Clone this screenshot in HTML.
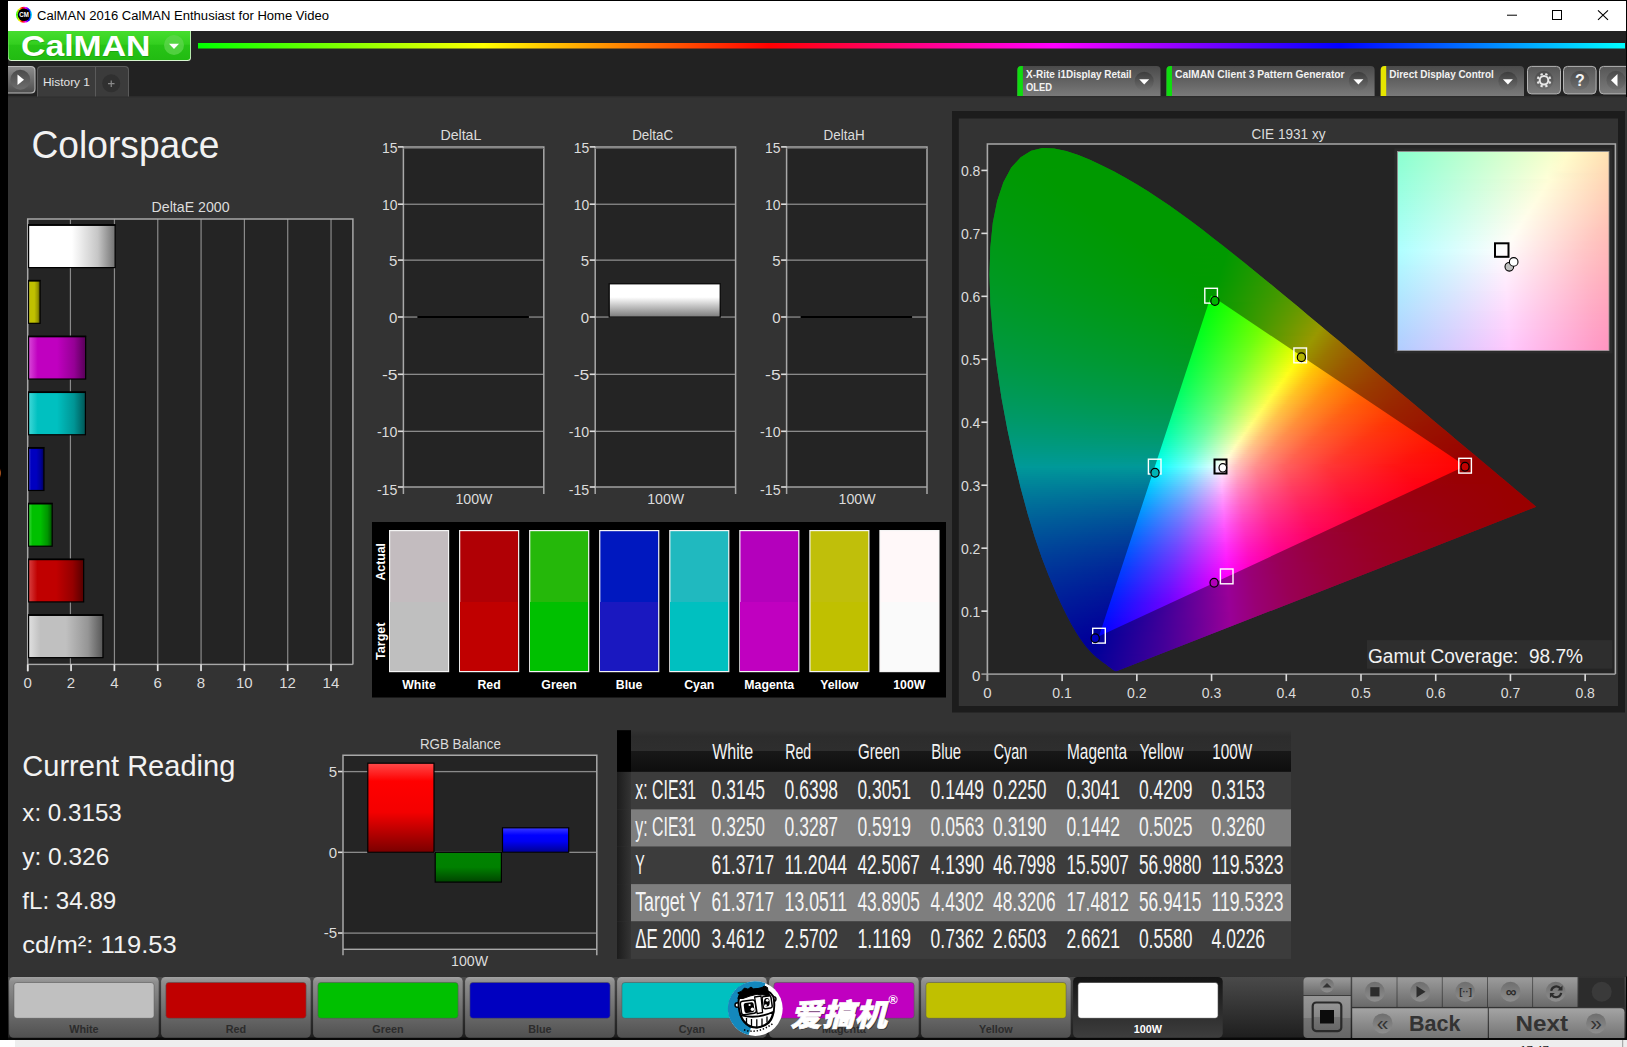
<!DOCTYPE html>
<html><head><meta charset="utf-8"><title>CalMAN 2016 CalMAN Enthusiast for Home Video</title>
<style>html,body{margin:0;padding:0;background:#333;overflow:hidden}svg{display:block}text{font-family:"Liberation Sans","Noto Sans CJK SC",sans-serif;white-space:pre}</style></head>
<body>
<svg width="1627" height="1047" viewBox="0 0 1627 1047">
<defs>
<linearGradient id="rb" x1="0" x2="1" y1="0" y2="0"><stop offset="0" stop-color="#0f0"/><stop offset=".2" stop-color="#ff0"/><stop offset=".4" stop-color="#f00"/><stop offset=".6" stop-color="#f0f"/><stop offset=".8" stop-color="#00f"/><stop offset="1" stop-color="#0ff"/></linearGradient>
<linearGradient id="lg" x1="0" y1="0" x2="0" y2="1"><stop offset="0" stop-color="#46dd2e"/><stop offset="0.45" stop-color="#33cf1f"/><stop offset="0.5" stop-color="#27c416"/><stop offset="1" stop-color="#22bb12"/></linearGradient>
<linearGradient id="gb" x1="0" y1="0" x2="0" y2="1"><stop offset="0" stop-color="#8c8c8c"/><stop offset="1" stop-color="#4e4e4e"/></linearGradient>
<linearGradient id="gb2" x1="0" y1="0" x2="0" y2="1"><stop offset="0" stop-color="#4a4a4a"/><stop offset="1" stop-color="#7a7a7a"/></linearGradient>
<linearGradient id="gb3" x1="0" y1="0" x2="0" y2="1"><stop offset="0" stop-color="#565656"/><stop offset="1" stop-color="#7c7c7c"/></linearGradient>
<linearGradient id="dk" x1="0" y1="0" x2="0" y2="1"><stop offset="0" stop-color="#4a4a4a"/><stop offset="1" stop-color="#6e6e6e"/></linearGradient>
<linearGradient id="dk2" x1="0" y1="0" x2="0" y2="1"><stop offset="0" stop-color="#3c3c3c"/><stop offset="1" stop-color="#707070"/></linearGradient>
<linearGradient id="hb0" x1="0" y1="0" x2="1" y2="0"><stop offset="0" stop-color="#ffffff"/><stop offset="0.16" stop-color="#ffffff"/><stop offset="0.5" stop-color="#ffffff"/><stop offset="0.8" stop-color="#c6c6c6"/><stop offset="1" stop-color="#727272"/></linearGradient>
<linearGradient id="hb1" x1="0" y1="0" x2="1" y2="0"><stop offset="0" stop-color="#e0e040"/><stop offset="0.16" stop-color="#c0c000"/><stop offset="0.5" stop-color="#c0c000"/><stop offset="0.8" stop-color="#959500"/><stop offset="1" stop-color="#565600"/></linearGradient>
<linearGradient id="hb2" x1="0" y1="0" x2="1" y2="0"><stop offset="0" stop-color="#d848d8"/><stop offset="0.16" stop-color="#c000c0"/><stop offset="0.5" stop-color="#c000c0"/><stop offset="0.8" stop-color="#950095"/><stop offset="1" stop-color="#560056"/></linearGradient>
<linearGradient id="hb3" x1="0" y1="0" x2="1" y2="0"><stop offset="0" stop-color="#40d8d8"/><stop offset="0.16" stop-color="#00c0c0"/><stop offset="0.5" stop-color="#00c0c0"/><stop offset="0.8" stop-color="#009595"/><stop offset="1" stop-color="#005656"/></linearGradient>
<linearGradient id="hb4" x1="0" y1="0" x2="1" y2="0"><stop offset="0" stop-color="#4040d8"/><stop offset="0.16" stop-color="#0000c0"/><stop offset="0.5" stop-color="#0000c0"/><stop offset="0.8" stop-color="#000095"/><stop offset="1" stop-color="#000056"/></linearGradient>
<linearGradient id="hb5" x1="0" y1="0" x2="1" y2="0"><stop offset="0" stop-color="#40d840"/><stop offset="0.16" stop-color="#00c000"/><stop offset="0.5" stop-color="#00c000"/><stop offset="0.8" stop-color="#009500"/><stop offset="1" stop-color="#005600"/></linearGradient>
<linearGradient id="hb6" x1="0" y1="0" x2="1" y2="0"><stop offset="0" stop-color="#d84040"/><stop offset="0.16" stop-color="#c00000"/><stop offset="0.5" stop-color="#c00000"/><stop offset="0.8" stop-color="#950000"/><stop offset="1" stop-color="#560000"/></linearGradient>
<linearGradient id="hb7" x1="0" y1="0" x2="1" y2="0"><stop offset="0" stop-color="#e0e0e0"/><stop offset="0.16" stop-color="#c0c0c0"/><stop offset="0.5" stop-color="#c0c0c0"/><stop offset="0.8" stop-color="#959595"/><stop offset="1" stop-color="#565656"/></linearGradient>
<linearGradient id="wv" x1="0" y1="0" x2="0" y2="1"><stop offset="0" stop-color="#fff"/><stop offset="0.4" stop-color="#fff"/><stop offset="1" stop-color="#7a7a7a"/></linearGradient>
<linearGradient id="rr" x1="0" y1="0" x2="0" y2="1"><stop offset="0" stop-color="#ff4a4a"/><stop offset="0.2" stop-color="#ff0000"/><stop offset="0.55" stop-color="#f40000"/><stop offset="1" stop-color="#7a0000"/></linearGradient>
<linearGradient id="rg" x1="0" y1="0" x2="0" y2="1"><stop offset="0" stop-color="#008400"/><stop offset="0.5" stop-color="#008000"/><stop offset="1" stop-color="#004400"/></linearGradient>
<linearGradient id="rbl" x1="0" y1="0" x2="0" y2="1"><stop offset="0" stop-color="#3a3aff"/><stop offset="0.3" stop-color="#0000ff"/><stop offset="0.55" stop-color="#0000f4"/><stop offset="1" stop-color="#000090"/></linearGradient>
<linearGradient id="th" x1="0" y1="0" x2="0" y2="1"><stop offset="0" stop-color="#323232"/><stop offset="0.15" stop-color="#2c2c2c"/><stop offset="0.5" stop-color="#2e2e2e"/><stop offset="0.5" stop-color="#181818"/><stop offset="1" stop-color="#0e0e0e"/></linearGradient>
<linearGradient id="tc" x1="0" y1="0" x2="1" y2="0"><stop offset="0" stop-color="#1c1c1c"/><stop offset="1" stop-color="#343434"/></linearGradient>
<linearGradient id="c0" gradientUnits="userSpaceOnUse" x1="1043" x2="1051"><stop offset="0" stop-color="#0f0"/><stop offset="1" stop-color="#0f0"/></linearGradient>
<linearGradient id="c1" gradientUnits="userSpaceOnUse" x1="1032" x2="1064"><stop offset="0" stop-color="#0f0"/><stop offset="1" stop-color="#0f0"/></linearGradient>
<linearGradient id="c2" gradientUnits="userSpaceOnUse" x1="1027" x2="1071"><stop offset="0" stop-color="#0f0"/><stop offset="1" stop-color="#0f0"/></linearGradient>
<linearGradient id="c3" gradientUnits="userSpaceOnUse" x1="1024" x2="1077"><stop offset="0" stop-color="#0f0"/><stop offset="1" stop-color="#0f0"/></linearGradient>
<linearGradient id="c4" gradientUnits="userSpaceOnUse" x1="1021" x2="1082"><stop offset="0" stop-color="#0f0"/><stop offset="1" stop-color="#0f0"/></linearGradient>
<linearGradient id="c5" gradientUnits="userSpaceOnUse" x1="1018" x2="1087"><stop offset="0" stop-color="#0f0"/><stop offset="1" stop-color="#0f0"/></linearGradient>
<linearGradient id="c6" gradientUnits="userSpaceOnUse" x1="1016" x2="1092"><stop offset="0" stop-color="#0f0"/><stop offset="1" stop-color="#0f0"/></linearGradient>
<linearGradient id="c7" gradientUnits="userSpaceOnUse" x1="1014" x2="1096"><stop offset="0" stop-color="#0f0"/><stop offset="1" stop-color="#0f0"/></linearGradient>
<linearGradient id="c8" gradientUnits="userSpaceOnUse" x1="1013" x2="1100"><stop offset="0" stop-color="#0f0"/><stop offset="1" stop-color="#0f0"/></linearGradient>
<linearGradient id="c9" gradientUnits="userSpaceOnUse" x1="1011" x2="1105"><stop offset="0" stop-color="#00ff01"/><stop offset="1" stop-color="#0f0"/></linearGradient>
<linearGradient id="c10" gradientUnits="userSpaceOnUse" x1="1010" x2="1109"><stop offset="0" stop-color="#00ff02"/><stop offset="1" stop-color="#0f0"/></linearGradient>
<linearGradient id="c11" gradientUnits="userSpaceOnUse" x1="1008" x2="1113"><stop offset="0" stop-color="#00ff03"/><stop offset="1" stop-color="#0f0"/></linearGradient>
<linearGradient id="c12" gradientUnits="userSpaceOnUse" x1="1007" x2="1116"><stop offset="0" stop-color="#00ff04"/><stop offset=".596" stop-color="#0f0"/><stop offset="1" stop-color="#0f0"/></linearGradient>
<linearGradient id="c13" gradientUnits="userSpaceOnUse" x1="1006" x2="1120"><stop offset="0" stop-color="#00ff05"/><stop offset=".465" stop-color="#0f0"/><stop offset="1" stop-color="#0f0"/></linearGradient>
<linearGradient id="c14" gradientUnits="userSpaceOnUse" x1="1005" x2="1124"><stop offset="0" stop-color="#00ff06"/><stop offset=".429" stop-color="#0f0"/><stop offset="1" stop-color="#0f0"/></linearGradient>
<linearGradient id="c15" gradientUnits="userSpaceOnUse" x1="1004" x2="1127"><stop offset="0" stop-color="#00ff07"/><stop offset=".423" stop-color="#0f0"/><stop offset="1" stop-color="#0f0"/></linearGradient>
<linearGradient id="c16" gradientUnits="userSpaceOnUse" x1="1003" x2="1131"><stop offset="0" stop-color="#00ff08"/><stop offset=".422" stop-color="#0f0"/><stop offset="1" stop-color="#0f0"/></linearGradient>
<linearGradient id="c17" gradientUnits="userSpaceOnUse" x1="1002" x2="1134"><stop offset="0" stop-color="#00ff09"/><stop offset=".432" stop-color="#0f0"/><stop offset="1" stop-color="#0f0"/></linearGradient>
<linearGradient id="c18" gradientUnits="userSpaceOnUse" x1="1001" x2="1138"><stop offset="0" stop-color="#00ff0a"/><stop offset=".438" stop-color="#0f0"/><stop offset="1" stop-color="#0f0"/></linearGradient>
<linearGradient id="c19" gradientUnits="userSpaceOnUse" x1="1001" x2="1141"><stop offset="0" stop-color="#00ff0b"/><stop offset=".443" stop-color="#0f0"/><stop offset="1" stop-color="#0f0"/></linearGradient>
<linearGradient id="c20" gradientUnits="userSpaceOnUse" x1="1000" x2="1144"><stop offset="0" stop-color="#00ff0c"/><stop offset=".458" stop-color="#0f0"/><stop offset="1" stop-color="#0f0"/></linearGradient>
<linearGradient id="c21" gradientUnits="userSpaceOnUse" x1="999" x2="1147"><stop offset="0" stop-color="#00ff0d"/><stop offset=".466" stop-color="#0f0"/><stop offset="1" stop-color="#0f0"/></linearGradient>
<linearGradient id="c22" gradientUnits="userSpaceOnUse" x1="998" x2="1150"><stop offset="0" stop-color="#00ff0e"/><stop offset=".480" stop-color="#0f0"/><stop offset="1" stop-color="#0f0"/></linearGradient>
<linearGradient id="c23" gradientUnits="userSpaceOnUse" x1="998" x2="1154"><stop offset="0" stop-color="#00ff0e"/><stop offset=".481" stop-color="#0f0"/><stop offset="1" stop-color="#0f0"/></linearGradient>
<linearGradient id="c24" gradientUnits="userSpaceOnUse" x1="997" x2="1157"><stop offset="0" stop-color="#00ff0f"/><stop offset=".494" stop-color="#0f0"/><stop offset="1" stop-color="#0f0"/></linearGradient>
<linearGradient id="c25" gradientUnits="userSpaceOnUse" x1="997" x2="1160"><stop offset="0" stop-color="#00ff10"/><stop offset=".503" stop-color="#0f0"/><stop offset="1" stop-color="#0f0"/></linearGradient>
<linearGradient id="c26" gradientUnits="userSpaceOnUse" x1="996" x2="1163"><stop offset="0" stop-color="#0f1"/><stop offset=".515" stop-color="#0f0"/><stop offset="1" stop-color="#0f0"/></linearGradient>
<linearGradient id="c27" gradientUnits="userSpaceOnUse" x1="995" x2="1166"><stop offset="0" stop-color="#00ff12"/><stop offset=".520" stop-color="#0f0"/><stop offset="1" stop-color="#0f0"/></linearGradient>
<linearGradient id="c28" gradientUnits="userSpaceOnUse" x1="995" x2="1169"><stop offset="0" stop-color="#00ff13"/><stop offset=".529" stop-color="#0f0"/><stop offset="1" stop-color="#0f0"/></linearGradient>
<linearGradient id="c29" gradientUnits="userSpaceOnUse" x1="994" x2="1171"><stop offset="0" stop-color="#00ff14"/><stop offset=".542" stop-color="#0f0"/><stop offset="1" stop-color="#0f0"/></linearGradient>
<linearGradient id="c30" gradientUnits="userSpaceOnUse" x1="994" x2="1174"><stop offset="0" stop-color="#00ff15"/><stop offset=".550" stop-color="#0f0"/><stop offset="1" stop-color="#0f0"/></linearGradient>
<linearGradient id="c31" gradientUnits="userSpaceOnUse" x1="994" x2="1177"><stop offset="0" stop-color="#00ff16"/><stop offset=".557" stop-color="#0f0"/><stop offset="1" stop-color="#0f0"/></linearGradient>
<linearGradient id="c32" gradientUnits="userSpaceOnUse" x1="993" x2="1180"><stop offset="0" stop-color="#00ff17"/><stop offset=".561" stop-color="#0f0"/><stop offset="1" stop-color="#0f0"/></linearGradient>
<linearGradient id="c33" gradientUnits="userSpaceOnUse" x1="993" x2="1183"><stop offset="0" stop-color="#00ff18"/><stop offset=".568" stop-color="#0f0"/><stop offset="1" stop-color="#0f0"/></linearGradient>
<linearGradient id="c34" gradientUnits="userSpaceOnUse" x1="992" x2="1185"><stop offset="0" stop-color="#00ff19"/><stop offset=".580" stop-color="#0f0"/><stop offset="1" stop-color="#0f0"/></linearGradient>
<linearGradient id="c35" gradientUnits="userSpaceOnUse" x1="992" x2="1188"><stop offset="0" stop-color="#00ff1a"/><stop offset=".587" stop-color="#0f0"/><stop offset="1" stop-color="#0f0"/></linearGradient>
<linearGradient id="c36" gradientUnits="userSpaceOnUse" x1="992" x2="1191"><stop offset="0" stop-color="#00ff1a"/><stop offset=".593" stop-color="#0f0"/><stop offset="1" stop-color="#0f0"/></linearGradient>
<linearGradient id="c37" gradientUnits="userSpaceOnUse" x1="991" x2="1194"><stop offset="0" stop-color="#00ff1b"/><stop offset=".601" stop-color="#0f0"/><stop offset="1" stop-color="#0f0"/></linearGradient>
<linearGradient id="c38" gradientUnits="userSpaceOnUse" x1="991" x2="1196"><stop offset="0" stop-color="#00ff1c"/><stop offset=".610" stop-color="#0f0"/><stop offset="1" stop-color="#0f0"/></linearGradient>
<linearGradient id="c39" gradientUnits="userSpaceOnUse" x1="991" x2="1199"><stop offset="0" stop-color="#00ff1d"/><stop offset=".615" stop-color="#0f0"/><stop offset="1" stop-color="#0f0"/></linearGradient>
<linearGradient id="c40" gradientUnits="userSpaceOnUse" x1="991" x2="1202"><stop offset="0" stop-color="#00ff1e"/><stop offset=".621" stop-color="#0f0"/><stop offset="1" stop-color="#0f0"/></linearGradient>
<linearGradient id="c41" gradientUnits="userSpaceOnUse" x1="990" x2="1204"><stop offset="0" stop-color="#00ff1f"/><stop offset=".626" stop-color="#0f0"/><stop offset="1" stop-color="#0f0"/></linearGradient>
<linearGradient id="c42" gradientUnits="userSpaceOnUse" x1="990" x2="1207"><stop offset="0" stop-color="#00ff20"/><stop offset=".631" stop-color="#0f0"/><stop offset="1" stop-color="#0f0"/></linearGradient>
<linearGradient id="c43" gradientUnits="userSpaceOnUse" x1="990" x2="1209"><stop offset="0" stop-color="#00ff21"/><stop offset=".639" stop-color="#0f0"/><stop offset="1" stop-color="#0f0"/></linearGradient>
<linearGradient id="c44" gradientUnits="userSpaceOnUse" x1="990" x2="1212"><stop offset="0" stop-color="#0f2"/><stop offset=".644" stop-color="#0f0"/><stop offset="1" stop-color="#0f0"/></linearGradient>
<linearGradient id="c45" gradientUnits="userSpaceOnUse" x1="990" x2="1215"><stop offset="0" stop-color="#00ff23"/><stop offset=".649" stop-color="#0f0"/><stop offset="1" stop-color="#0f0"/></linearGradient>
<linearGradient id="c46" gradientUnits="userSpaceOnUse" x1="989" x2="1217"><stop offset="0" stop-color="#00ff24"/><stop offset=".658" stop-color="#0f0"/><stop offset="1" stop-color="#0f0"/></linearGradient>
<linearGradient id="c47" gradientUnits="userSpaceOnUse" x1="989" x2="1220"><stop offset="0" stop-color="#00ff25"/><stop offset=".662" stop-color="#0f0"/><stop offset="1" stop-color="#0f0"/></linearGradient>
<linearGradient id="c48" gradientUnits="userSpaceOnUse" x1="989" x2="1222"><stop offset="0" stop-color="#00ff26"/><stop offset=".670" stop-color="#0f0"/><stop offset="1" stop-color="#0f0"/></linearGradient>
<linearGradient id="c49" gradientUnits="userSpaceOnUse" x1="989" x2="1225"><stop offset="0" stop-color="#00ff27"/><stop offset=".674" stop-color="#0f0"/><stop offset="1" stop-color="#0f0"/></linearGradient>
<linearGradient id="c50" gradientUnits="userSpaceOnUse" x1="989" x2="1227"><stop offset="0" stop-color="#00ff28"/><stop offset=".676" stop-color="#0f0"/><stop offset="1" stop-color="#0f0"/></linearGradient>
<linearGradient id="c51" gradientUnits="userSpaceOnUse" x1="989" x2="1230"><stop offset="0" stop-color="#00ff29"/><stop offset=".680" stop-color="#0f0"/><stop offset=".992" stop-color="#02ff00"/><stop offset="1" stop-color="#05ff00"/></linearGradient>
<linearGradient id="c52" gradientUnits="userSpaceOnUse" x1="989" x2="1232"><stop offset="0" stop-color="#00ff2a"/><stop offset=".687" stop-color="#0f0"/><stop offset=".984" stop-color="#03ff00"/><stop offset="1" stop-color="#08ff00"/></linearGradient>
<linearGradient id="c53" gradientUnits="userSpaceOnUse" x1="988" x2="1235"><stop offset="0" stop-color="#00ff2b"/><stop offset=".692" stop-color="#0f0"/><stop offset=".968" stop-color="#02ff00"/><stop offset="1" stop-color="#0dff00"/></linearGradient>
<linearGradient id="c54" gradientUnits="userSpaceOnUse" x1="988" x2="1237"><stop offset="0" stop-color="#00ff2c"/><stop offset=".699" stop-color="#0f0"/><stop offset=".956" stop-color="#02ff00"/><stop offset="1" stop-color="#1f0"/></linearGradient>
<linearGradient id="c55" gradientUnits="userSpaceOnUse" x1="988" x2="1240"><stop offset="0" stop-color="#00ff2d"/><stop offset=".702" stop-color="#0f0"/><stop offset=".944" stop-color="#03ff00"/><stop offset="1" stop-color="#17ff00"/></linearGradient>
<linearGradient id="c56" gradientUnits="userSpaceOnUse" x1="988" x2="1242"><stop offset="0" stop-color="#00ff2e"/><stop offset=".709" stop-color="#0f0"/><stop offset=".933" stop-color="#02ff00"/><stop offset="1" stop-color="#1bff00"/></linearGradient>
<linearGradient id="c57" gradientUnits="userSpaceOnUse" x1="988" x2="1245"><stop offset="0" stop-color="#00ff2f"/><stop offset=".712" stop-color="#0f0"/><stop offset=".918" stop-color="#02ff00"/><stop offset="1" stop-color="#20ff00"/></linearGradient>
<linearGradient id="c58" gradientUnits="userSpaceOnUse" x1="988" x2="1247"><stop offset="0" stop-color="#00ff30"/><stop offset=".718" stop-color="#0f0"/><stop offset=".911" stop-color="#03ff00"/><stop offset="1" stop-color="#24ff00"/></linearGradient>
<linearGradient id="c59" gradientUnits="userSpaceOnUse" x1="988" x2="1250"><stop offset="0" stop-color="#00ff31"/><stop offset=".721" stop-color="#0f0"/><stop offset=".897" stop-color="#02ff00"/><stop offset="1" stop-color="#2aff00"/></linearGradient>
<linearGradient id="c60" gradientUnits="userSpaceOnUse" x1="988" x2="1252"><stop offset="0" stop-color="#00ff32"/><stop offset=".727" stop-color="#0f0"/><stop offset=".886" stop-color="#02ff00"/><stop offset="1" stop-color="#2eff00"/></linearGradient>
<linearGradient id="c61" gradientUnits="userSpaceOnUse" x1="988" x2="1255"><stop offset="0" stop-color="#0f3"/><stop offset=".727" stop-color="#0f0"/><stop offset=".876" stop-color="#03ff00"/><stop offset="1" stop-color="#34ff00"/></linearGradient>
<linearGradient id="c62" gradientUnits="userSpaceOnUse" x1="988" x2="1257"><stop offset="0" stop-color="#00ff35"/><stop offset=".684" stop-color="#00ff01"/><stop offset=".866" stop-color="#03ff00"/><stop offset="1" stop-color="#39ff00"/></linearGradient>
<linearGradient id="c63" gradientUnits="userSpaceOnUse" x1="988" x2="1260"><stop offset="0" stop-color="#00ff36"/><stop offset=".676" stop-color="#00ff02"/><stop offset=".853" stop-color="#02ff00"/><stop offset="1" stop-color="#3fff00"/></linearGradient>
<linearGradient id="c64" gradientUnits="userSpaceOnUse" x1="988" x2="1262"><stop offset="0" stop-color="#00ff37"/><stop offset=".672" stop-color="#00ff03"/><stop offset=".847" stop-color="#03ff00"/><stop offset="1" stop-color="#4f0"/></linearGradient>
<linearGradient id="c65" gradientUnits="userSpaceOnUse" x1="988" x2="1265"><stop offset="0" stop-color="#00ff38"/><stop offset=".661" stop-color="#00ff04"/><stop offset=".801" stop-color="#0f0"/><stop offset=".838" stop-color="#04ff00"/><stop offset="1" stop-color="#4aff00"/></linearGradient>
<linearGradient id="c66" gradientUnits="userSpaceOnUse" x1="988" x2="1267"><stop offset="0" stop-color="#00ff39"/><stop offset=".656" stop-color="#00ff06"/><stop offset=".778" stop-color="#0f0"/><stop offset=".828" stop-color="#03ff00"/><stop offset="1" stop-color="#4fff00"/></linearGradient>
<linearGradient id="c67" gradientUnits="userSpaceOnUse" x1="988" x2="1270"><stop offset="0" stop-color="#00ff3a"/><stop offset=".752" stop-color="#0f0"/><stop offset=".816" stop-color="#03ff00"/><stop offset="1" stop-color="#56ff00"/></linearGradient>
<linearGradient id="c68" gradientUnits="userSpaceOnUse" x1="988" x2="1272"><stop offset="0" stop-color="#00ff3b"/><stop offset=".641" stop-color="#00ff08"/><stop offset=".764" stop-color="#0f0"/><stop offset=".806" stop-color="#03ff00"/><stop offset="1" stop-color="#5bff00"/></linearGradient>
<linearGradient id="c69" gradientUnits="userSpaceOnUse" x1="988" x2="1274"><stop offset="0" stop-color="#00ff3c"/><stop offset=".633" stop-color="#00ff0a"/><stop offset=".766" stop-color="#0f0"/><stop offset=".801" stop-color="#04ff00"/><stop offset="1" stop-color="#60ff00"/></linearGradient>
<linearGradient id="c70" gradientUnits="userSpaceOnUse" x1="988" x2="1277"><stop offset="0" stop-color="#00ff3e"/><stop offset=".626" stop-color="#00ff0b"/><stop offset=".765" stop-color="#0f0"/><stop offset=".792" stop-color="#05ff00"/><stop offset="1" stop-color="#68ff00"/></linearGradient>
<linearGradient id="c71" gradientUnits="userSpaceOnUse" x1="988" x2="1279"><stop offset="0" stop-color="#00ff3f"/><stop offset=".619" stop-color="#00ff0c"/><stop offset=".770" stop-color="#0f0"/><stop offset=".952" stop-color="#54ff00"/><stop offset="1" stop-color="#6dff00"/></linearGradient>
<linearGradient id="c72" gradientUnits="userSpaceOnUse" x1="988" x2="1282"><stop offset="0" stop-color="#00ff40"/><stop offset=".612" stop-color="#00ff0e"/><stop offset=".769" stop-color="#02ff00"/><stop offset=".990" stop-color="#6fff00"/><stop offset="1" stop-color="#75ff00"/></linearGradient>
<linearGradient id="c73" gradientUnits="userSpaceOnUse" x1="988" x2="1284"><stop offset="0" stop-color="#00ff41"/><stop offset=".608" stop-color="#00ff0f"/><stop offset=".764" stop-color="#03ff00"/><stop offset=".980" stop-color="#6fff00"/><stop offset="1" stop-color="#7bff00"/></linearGradient>
<linearGradient id="c74" gradientUnits="userSpaceOnUse" x1="989" x2="1287"><stop offset="0" stop-color="#00ff42"/><stop offset=".601" stop-color="#00ff10"/><stop offset=".752" stop-color="#03ff00"/><stop offset=".966" stop-color="#6fff00"/><stop offset="1" stop-color="#83ff00"/></linearGradient>
<linearGradient id="c75" gradientUnits="userSpaceOnUse" x1="989" x2="1289"><stop offset="0" stop-color="#00ff43"/><stop offset=".593" stop-color="#00ff12"/><stop offset=".743" stop-color="#02ff01"/><stop offset=".957" stop-color="#6fff00"/><stop offset="1" stop-color="#89ff00"/></linearGradient>
<linearGradient id="c76" gradientUnits="userSpaceOnUse" x1="989" x2="1291"><stop offset="0" stop-color="#00ff45"/><stop offset=".589" stop-color="#00ff13"/><stop offset=".738" stop-color="#03ff02"/><stop offset=".947" stop-color="#70ff00"/><stop offset="1" stop-color="#8fff00"/></linearGradient>
<linearGradient id="c77" gradientUnits="userSpaceOnUse" x1="989" x2="1294"><stop offset="0" stop-color="#00ff46"/><stop offset=".584" stop-color="#00ff14"/><stop offset=".728" stop-color="#03ff03"/><stop offset=".934" stop-color="#70ff00"/><stop offset="1" stop-color="#98ff00"/></linearGradient>
<linearGradient id="c78" gradientUnits="userSpaceOnUse" x1="989" x2="1296"><stop offset="0" stop-color="#00ff47"/><stop offset=".577" stop-color="#00ff16"/><stop offset=".720" stop-color="#02ff05"/><stop offset=".818" stop-color="#3f0"/><stop offset="1" stop-color="#9eff00"/></linearGradient>
<linearGradient id="c79" gradientUnits="userSpaceOnUse" x1="989" x2="1299"><stop offset="0" stop-color="#00ff49"/><stop offset=".571" stop-color="#00ff17"/><stop offset=".713" stop-color="#03ff06"/><stop offset=".803" stop-color="#31ff00"/><stop offset=".990" stop-color="#a1ff00"/><stop offset="1" stop-color="#a7ff00"/></linearGradient>
<linearGradient id="c80" gradientUnits="userSpaceOnUse" x1="989" x2="1301"><stop offset="0" stop-color="#00ff4a"/><stop offset=".564" stop-color="#00ff19"/><stop offset=".705" stop-color="#03ff08"/><stop offset=".801" stop-color="#34ff00"/><stop offset=".984" stop-color="#a3ff00"/><stop offset="1" stop-color="#aeff00"/></linearGradient>
<linearGradient id="c81" gradientUnits="userSpaceOnUse" x1="989" x2="1303"><stop offset="0" stop-color="#00ff4b"/><stop offset=".561" stop-color="#00ff1a"/><stop offset=".697" stop-color="#02ff0a"/><stop offset=".803" stop-color="#3aff00"/><stop offset=".981" stop-color="#a8ff00"/><stop offset="1" stop-color="#b6ff00"/></linearGradient>
<linearGradient id="c82" gradientUnits="userSpaceOnUse" x1="989" x2="1306"><stop offset="0" stop-color="#00ff4c"/><stop offset=".555" stop-color="#00ff1c"/><stop offset=".691" stop-color="#03ff0b"/><stop offset=".801" stop-color="#3fff00"/><stop offset=".978" stop-color="#afff00"/><stop offset="1" stop-color="#bfff00"/></linearGradient>
<linearGradient id="c83" gradientUnits="userSpaceOnUse" x1="990" x2="1308"><stop offset="0" stop-color="#00ff4e"/><stop offset=".550" stop-color="#00ff1d"/><stop offset=".682" stop-color="#03ff0d"/><stop offset=".805" stop-color="#46ff00"/><stop offset=".978" stop-color="#b7ff00"/><stop offset="1" stop-color="#c7ff00"/></linearGradient>
<linearGradient id="c84" gradientUnits="userSpaceOnUse" x1="990" x2="1311"><stop offset="0" stop-color="#00ff4f"/><stop offset=".545" stop-color="#00ff1e"/><stop offset=".673" stop-color="#02ff0f"/><stop offset=".804" stop-color="#4bff00"/><stop offset=".972" stop-color="#bcff00"/><stop offset="1" stop-color="#d1ff00"/></linearGradient>
<linearGradient id="c85" gradientUnits="userSpaceOnUse" x1="990" x2="1313"><stop offset="0" stop-color="#00ff50"/><stop offset=".539" stop-color="#00ff20"/><stop offset=".669" stop-color="#03ff10"/><stop offset=".808" stop-color="#53ff00"/><stop offset=".972" stop-color="#c4ff00"/><stop offset="1" stop-color="#d9ff00"/></linearGradient>
<linearGradient id="c86" gradientUnits="userSpaceOnUse" x1="990" x2="1315"><stop offset="0" stop-color="#00ff52"/><stop offset=".535" stop-color="#0f2"/><stop offset=".662" stop-color="#03ff12"/><stop offset=".812" stop-color="#5aff00"/><stop offset=".972" stop-color="#cbff00"/><stop offset="1" stop-color="#e2ff00"/></linearGradient>
<linearGradient id="c87" gradientUnits="userSpaceOnUse" x1="990" x2="1318"><stop offset="0" stop-color="#00ff53"/><stop offset=".527" stop-color="#00ff23"/><stop offset=".652" stop-color="#02ff14"/><stop offset=".814" stop-color="#62ff00"/><stop offset=".970" stop-color="#d4ff00"/><stop offset="1" stop-color="#edff00"/></linearGradient>
<linearGradient id="c88" gradientUnits="userSpaceOnUse" x1="990" x2="1320"><stop offset="0" stop-color="#0f5"/><stop offset=".524" stop-color="#00ff25"/><stop offset=".648" stop-color="#03ff15"/><stop offset=".815" stop-color="#68ff00"/><stop offset=".967" stop-color="#d9ff00"/><stop offset="1" stop-color="#f6ff00"/></linearGradient>
<linearGradient id="c89" gradientUnits="userSpaceOnUse" x1="990" x2="1323"><stop offset="0" stop-color="#00ff56"/><stop offset=".520" stop-color="#00ff26"/><stop offset=".640" stop-color="#03ff17"/><stop offset=".814" stop-color="#6fff00"/><stop offset=".964" stop-color="#e2ff00"/><stop offset="1" stop-color="#fffd00"/></linearGradient>
<linearGradient id="c90" gradientUnits="userSpaceOnUse" x1="991" x2="1325"><stop offset="0" stop-color="#00ff57"/><stop offset=".515" stop-color="#00ff28"/><stop offset=".632" stop-color="#02ff19"/><stop offset=".805" stop-color="#6fff00"/><stop offset=".952" stop-color="#e0ff00"/><stop offset=".991" stop-color="#fffc00"/><stop offset="1" stop-color="#fff400"/></linearGradient>
<linearGradient id="c91" gradientUnits="userSpaceOnUse" x1="991" x2="1327"><stop offset="0" stop-color="#00ff59"/><stop offset=".512" stop-color="#00ff29"/><stop offset=".628" stop-color="#03ff1b"/><stop offset=".798" stop-color="#6fff01"/><stop offset=".943" stop-color="#e1ff00"/><stop offset=".979" stop-color="#fffd00"/><stop offset="1" stop-color="#ffeb00"/></linearGradient>
<linearGradient id="c92" gradientUnits="userSpaceOnUse" x1="991" x2="1330"><stop offset="0" stop-color="#00ff5a"/><stop offset=".507" stop-color="#00ff2b"/><stop offset=".619" stop-color="#03ff1d"/><stop offset=".788" stop-color="#6fff03"/><stop offset=".932" stop-color="#e2ff00"/><stop offset=".968" stop-color="#fffc00"/><stop offset="1" stop-color="#ffe100"/></linearGradient>
<linearGradient id="c93" gradientUnits="userSpaceOnUse" x1="991" x2="1332"><stop offset="0" stop-color="#00ff5c"/><stop offset=".501" stop-color="#00ff2d"/><stop offset=".613" stop-color="#02ff1f"/><stop offset=".780" stop-color="#6fff05"/><stop offset=".850" stop-color="#a5ff00"/><stop offset=".956" stop-color="#fffd00"/><stop offset="1" stop-color="#ffd900"/></linearGradient>
<linearGradient id="c94" gradientUnits="userSpaceOnUse" x1="991" x2="1334"><stop offset="0" stop-color="#00ff5d"/><stop offset=".499" stop-color="#00ff2f"/><stop offset=".609" stop-color="#03ff20"/><stop offset=".773" stop-color="#6fff07"/><stop offset=".843" stop-color="#a5ff00"/><stop offset=".948" stop-color="#fffc00"/><stop offset="1" stop-color="#ffd200"/></linearGradient>
<linearGradient id="c95" gradientUnits="userSpaceOnUse" x1="992" x2="1337"><stop offset="0" stop-color="#00ff5f"/><stop offset=".493" stop-color="#00ff30"/><stop offset=".600" stop-color="#03ff22"/><stop offset=".762" stop-color="#6fff09"/><stop offset=".838" stop-color="#abff00"/><stop offset=".933" stop-color="#fffe00"/><stop offset="1" stop-color="#ffc900"/></linearGradient>
<linearGradient id="c96" gradientUnits="userSpaceOnUse" x1="992" x2="1339"><stop offset="0" stop-color="#00ff60"/><stop offset=".490" stop-color="#00ff32"/><stop offset=".594" stop-color="#02ff24"/><stop offset=".755" stop-color="#6fff0b"/><stop offset=".839" stop-color="#b2ff00"/><stop offset=".925" stop-color="#fffd00"/><stop offset="1" stop-color="#ffc200"/></linearGradient>
<linearGradient id="c97" gradientUnits="userSpaceOnUse" x1="992" x2="1342"><stop offset="0" stop-color="#00ff62"/><stop offset=".486" stop-color="#00ff34"/><stop offset=".589" stop-color="#03ff26"/><stop offset=".746" stop-color="#6fff0e"/><stop offset=".840" stop-color="#bdff00"/><stop offset=".911" stop-color="#fffe00"/><stop offset=".983" stop-color="#ffc400"/><stop offset="1" stop-color="#ffb900"/></linearGradient>
<linearGradient id="c98" gradientUnits="userSpaceOnUse" x1="992" x2="1344"><stop offset="0" stop-color="#00ff63"/><stop offset=".480" stop-color="#00ff36"/><stop offset=".582" stop-color="#03ff28"/><stop offset=".739" stop-color="#6fff10"/><stop offset=".844" stop-color="#c8ff00"/><stop offset=".903" stop-color="#fffd00"/><stop offset=".974" stop-color="#ffc300"/><stop offset="1" stop-color="#ffb300"/></linearGradient>
<linearGradient id="c99" gradientUnits="userSpaceOnUse" x1="992" x2="1346"><stop offset="0" stop-color="#00ff65"/><stop offset=".477" stop-color="#00ff37"/><stop offset=".576" stop-color="#02ff2a"/><stop offset=".729" stop-color="#6dff13"/><stop offset=".845" stop-color="#d1ff00"/><stop offset=".895" stop-color="#fffc00"/><stop offset=".966" stop-color="#ffc200"/><stop offset="1" stop-color="#ffad00"/></linearGradient>
<linearGradient id="c100" gradientUnits="userSpaceOnUse" x1="993" x2="1349"><stop offset="0" stop-color="#0f6"/><stop offset=".475" stop-color="#00ff39"/><stop offset=".567" stop-color="#01ff2d"/><stop offset=".719" stop-color="#6dff15"/><stop offset=".846" stop-color="#dcff00"/><stop offset=".882" stop-color="#fffd00"/><stop offset=".952" stop-color="#ffc300"/><stop offset="1" stop-color="#ffa600"/></linearGradient>
<linearGradient id="c101" gradientUnits="userSpaceOnUse" x1="993" x2="1351"><stop offset="0" stop-color="#00ff68"/><stop offset=".469" stop-color="#00ff3b"/><stop offset=".564" stop-color="#03ff2e"/><stop offset=".715" stop-color="#70ff17"/><stop offset=".844" stop-color="#e3ff00"/><stop offset=".874" stop-color="#fffc00"/><stop offset=".944" stop-color="#ffc200"/><stop offset="1" stop-color="#ffa000"/></linearGradient>
<linearGradient id="c102" gradientUnits="userSpaceOnUse" x1="993" x2="1354"><stop offset="0" stop-color="#00ff6a"/><stop offset=".465" stop-color="#00ff3d"/><stop offset=".557" stop-color="#02ff31"/><stop offset=".704" stop-color="#6eff19"/><stop offset=".831" stop-color="#e1ff00"/><stop offset=".861" stop-color="#fffe00"/><stop offset=".928" stop-color="#ffc400"/><stop offset="1" stop-color="#f90"/></linearGradient>
<linearGradient id="c103" gradientUnits="userSpaceOnUse" x1="993" x2="1356"><stop offset="0" stop-color="#00ff6b"/><stop offset=".463" stop-color="#00ff3f"/><stop offset=".551" stop-color="#01ff33"/><stop offset=".697" stop-color="#6eff1c"/><stop offset=".821" stop-color="#dfff04"/><stop offset=".854" stop-color="#fffc00"/><stop offset=".920" stop-color="#ffc300"/><stop offset="1" stop-color="#ff9400"/></linearGradient>
<linearGradient id="c104" gradientUnits="userSpaceOnUse" x1="994" x2="1358"><stop offset="0" stop-color="#00ff6d"/><stop offset=".459" stop-color="#00ff41"/><stop offset=".547" stop-color="#03ff35"/><stop offset=".692" stop-color="#70ff1e"/><stop offset=".816" stop-color="#e3ff05"/><stop offset=".843" stop-color="#fffe00"/><stop offset=".909" stop-color="#ffc400"/><stop offset="1" stop-color="#ff8f00"/></linearGradient>
<linearGradient id="c105" gradientUnits="userSpaceOnUse" x1="994" x2="1361"><stop offset="0" stop-color="#00ff6f"/><stop offset=".455" stop-color="#00ff42"/><stop offset=".540" stop-color="#02ff37"/><stop offset=".681" stop-color="#6eff21"/><stop offset=".804" stop-color="#e1ff08"/><stop offset=".834" stop-color="#fffd02"/><stop offset=".899" stop-color="#ffc300"/><stop offset=".989" stop-color="#ff8e00"/><stop offset="1" stop-color="#ff8900"/></linearGradient>
<linearGradient id="c106" gradientUnits="userSpaceOnUse" x1="994" x2="1363"><stop offset="0" stop-color="#00ff70"/><stop offset=".453" stop-color="#0f4"/><stop offset=".534" stop-color="#01ff39"/><stop offset=".675" stop-color="#6eff23"/><stop offset=".794" stop-color="#dfff0c"/><stop offset=".824" stop-color="#fffe05"/><stop offset=".878" stop-color="#fc0"/><stop offset=".962" stop-color="#ff9600"/><stop offset="1" stop-color="#ff8500"/></linearGradient>
<linearGradient id="c107" gradientUnits="userSpaceOnUse" x1="994" x2="1365"><stop offset="0" stop-color="#00ff72"/><stop offset=".450" stop-color="#00ff46"/><stop offset=".531" stop-color="#03ff3b"/><stop offset=".668" stop-color="#6eff26"/><stop offset=".787" stop-color="#e0ff0e"/><stop offset=".817" stop-color="#fffd07"/><stop offset=".871" stop-color="#ffca00"/><stop offset=".954" stop-color="#ff9500"/><stop offset="1" stop-color="#ff8000"/></linearGradient>
<linearGradient id="c108" gradientUnits="userSpaceOnUse" x1="995" x2="1368"><stop offset="0" stop-color="#00ff74"/><stop offset=".445" stop-color="#00ff48"/><stop offset=".523" stop-color="#02ff3e"/><stop offset=".660" stop-color="#6eff28"/><stop offset=".777" stop-color="#e1ff11"/><stop offset=".807" stop-color="#fffc0a"/><stop offset=".866" stop-color="#ffc500"/><stop offset=".952" stop-color="#ff9000"/><stop offset="1" stop-color="#ff7b00"/></linearGradient>
<linearGradient id="c109" gradientUnits="userSpaceOnUse" x1="995" x2="1370"><stop offset="0" stop-color="#00ff75"/><stop offset=".443" stop-color="#00ff4a"/><stop offset=".517" stop-color="#01ff40"/><stop offset=".653" stop-color="#6eff2b"/><stop offset=".768" stop-color="#e0ff14"/><stop offset=".797" stop-color="#fffd0d"/><stop offset=".859" stop-color="#ffc400"/><stop offset=".944" stop-color="#ff8f00"/><stop offset="1" stop-color="#f70"/></linearGradient>
<linearGradient id="c110" gradientUnits="userSpaceOnUse" x1="995" x2="1373"><stop offset="0" stop-color="#0f7"/><stop offset=".439" stop-color="#00ff4d"/><stop offset=".513" stop-color="#03ff42"/><stop offset=".646" stop-color="#6eff2d"/><stop offset=".759" stop-color="#e1ff17"/><stop offset=".788" stop-color="#fffc10"/><stop offset=".849" stop-color="#ffc301"/><stop offset=".934" stop-color="#ff8e00"/><stop offset="1" stop-color="#ff7200"/></linearGradient>
<linearGradient id="c111" gradientUnits="userSpaceOnUse" x1="995" x2="1375"><stop offset="0" stop-color="#00ff79"/><stop offset=".437" stop-color="#00ff4f"/><stop offset=".508" stop-color="#02ff45"/><stop offset=".639" stop-color="#6eff30"/><stop offset=".753" stop-color="#e2ff1a"/><stop offset=".779" stop-color="#fffe13"/><stop offset=".839" stop-color="#ffc304"/><stop offset=".924" stop-color="#ff8e00"/><stop offset="1" stop-color="#ff6e00"/></linearGradient>
<linearGradient id="c112" gradientUnits="userSpaceOnUse" x1="996" x2="1377"><stop offset="0" stop-color="#00ff7b"/><stop offset=".436" stop-color="#00ff50"/><stop offset=".501" stop-color="#01ff48"/><stop offset=".633" stop-color="#6eff33"/><stop offset=".743" stop-color="#e0ff1d"/><stop offset=".772" stop-color="#fffc16"/><stop offset=".832" stop-color="#ffc206"/><stop offset=".892" stop-color="#ff9a00"/><stop offset="1" stop-color="#ff6a00"/></linearGradient>
<linearGradient id="c113" gradientUnits="userSpaceOnUse" x1="996" x2="1380"><stop offset="0" stop-color="#00ff7d"/><stop offset=".432" stop-color="#00ff53"/><stop offset=".497" stop-color="#03ff4a"/><stop offset=".625" stop-color="#6fff35"/><stop offset=".734" stop-color="#e1ff20"/><stop offset=".760" stop-color="#fffe1a"/><stop offset=".818" stop-color="#ffc509"/><stop offset=".883" stop-color="#ff9800"/><stop offset=".990" stop-color="#ff6900"/><stop offset="1" stop-color="#ff6500"/></linearGradient>
<linearGradient id="c114" gradientUnits="userSpaceOnUse" x1="996" x2="1382"><stop offset="0" stop-color="#00ff7f"/><stop offset=".427" stop-color="#0f5"/><stop offset=".492" stop-color="#02ff4c"/><stop offset=".619" stop-color="#6fff38"/><stop offset=".728" stop-color="#e2ff23"/><stop offset=".754" stop-color="#fffd1d"/><stop offset=".811" stop-color="#ffc40b"/><stop offset=".883" stop-color="#ff9300"/><stop offset=".995" stop-color="#ff6300"/><stop offset="1" stop-color="#ff6200"/></linearGradient>
<linearGradient id="c115" gradientUnits="userSpaceOnUse" x1="997" x2="1384"><stop offset="0" stop-color="#00ff81"/><stop offset=".426" stop-color="#00ff57"/><stop offset=".486" stop-color="#01ff4f"/><stop offset=".610" stop-color="#6cff3b"/><stop offset=".716" stop-color="#ddff27"/><stop offset=".747" stop-color="#fffb1f"/><stop offset=".804" stop-color="#ffc20e"/><stop offset=".884" stop-color="#ff8e00"/><stop offset=".997" stop-color="#ff5f00"/><stop offset="1" stop-color="#ff5e00"/></linearGradient>
<linearGradient id="c116" gradientUnits="userSpaceOnUse" x1="997" x2="1387"><stop offset="0" stop-color="#00ff83"/><stop offset=".423" stop-color="#00ff59"/><stop offset=".482" stop-color="#03ff51"/><stop offset=".605" stop-color="#6fff3e"/><stop offset=".710" stop-color="#e1ff29"/><stop offset=".736" stop-color="#fffd23"/><stop offset=".792" stop-color="#ffc311"/><stop offset=".869" stop-color="#ff8f00"/><stop offset=".979" stop-color="#ff6100"/><stop offset="1" stop-color="#ff5a00"/></linearGradient>
<linearGradient id="c117" gradientUnits="userSpaceOnUse" x1="997" x2="1389"><stop offset="0" stop-color="#00ff85"/><stop offset=".421" stop-color="#00ff5c"/><stop offset=".477" stop-color="#02ff54"/><stop offset=".599" stop-color="#6fff41"/><stop offset=".704" stop-color="#e2ff2c"/><stop offset=".730" stop-color="#fffc26"/><stop offset=".786" stop-color="#ffc213"/><stop offset=".862" stop-color="#ff8e02"/><stop offset=".972" stop-color="#ff6000"/><stop offset="1" stop-color="#ff5700"/></linearGradient>
<linearGradient id="c118" gradientUnits="userSpaceOnUse" x1="997" x2="1392"><stop offset="0" stop-color="#00ff87"/><stop offset=".418" stop-color="#00ff5e"/><stop offset=".471" stop-color="#01ff57"/><stop offset=".590" stop-color="#6dff44"/><stop offset=".691" stop-color="#ddff30"/><stop offset=".719" stop-color="#fffe2a"/><stop offset=".775" stop-color="#ffc316"/><stop offset=".851" stop-color="#ff8e04"/><stop offset=".949" stop-color="#ff6300"/><stop offset="1" stop-color="#ff5300"/></linearGradient>
<linearGradient id="c119" gradientUnits="userSpaceOnUse" x1="998" x2="1394"><stop offset="0" stop-color="#0f8"/><stop offset=".417" stop-color="#00ff60"/><stop offset=".467" stop-color="#03ff59"/><stop offset=".586" stop-color="#6fff47"/><stop offset=".687" stop-color="#e1ff33"/><stop offset=".712" stop-color="#fffc2d"/><stop offset=".768" stop-color="#ffc118"/><stop offset=".843" stop-color="#ff8d06"/><stop offset=".912" stop-color="#ff6d00"/><stop offset="1" stop-color="#ff5000"/></linearGradient>
<linearGradient id="c120" gradientUnits="userSpaceOnUse" x1="998" x2="1396"><stop offset="0" stop-color="#00ff8b"/><stop offset=".415" stop-color="#00ff63"/><stop offset=".462" stop-color="#02ff5c"/><stop offset=".580" stop-color="#6fff4a"/><stop offset=".681" stop-color="#e3ff36"/><stop offset=".704" stop-color="#fffe31"/><stop offset=".756" stop-color="#ffc51c"/><stop offset=".829" stop-color="#ff9009"/><stop offset=".902" stop-color="#ff6d00"/><stop offset="1" stop-color="#ff4d00"/></linearGradient>
<linearGradient id="c121" gradientUnits="userSpaceOnUse" x1="998" x2="1399"><stop offset="0" stop-color="#00ff8d"/><stop offset=".411" stop-color="#00ff65"/><stop offset=".456" stop-color="#01ff5f"/><stop offset=".571" stop-color="#6dff4d"/><stop offset=".668" stop-color="#ddff3b"/><stop offset=".696" stop-color="#fffd34"/><stop offset=".748" stop-color="#ffc31f"/><stop offset=".820" stop-color="#ff8f0b"/><stop offset=".900" stop-color="#ff6900"/><stop offset="1" stop-color="#ff4900"/></linearGradient>
<linearGradient id="c122" gradientUnits="userSpaceOnUse" x1="999" x2="1401"><stop offset="0" stop-color="#00ff8f"/><stop offset=".410" stop-color="#00ff68"/><stop offset=".453" stop-color="#03ff62"/><stop offset=".567" stop-color="#70ff50"/><stop offset=".664" stop-color="#e2ff3d"/><stop offset=".687" stop-color="#fffe38"/><stop offset=".739" stop-color="#ffc422"/><stop offset=".811" stop-color="#ff8f0d"/><stop offset=".900" stop-color="#ff6500"/><stop offset="1" stop-color="#ff4600"/></linearGradient>
<linearGradient id="c123" gradientUnits="userSpaceOnUse" x1="999" x2="1403"><stop offset="0" stop-color="#00ff91"/><stop offset=".408" stop-color="#00ff6a"/><stop offset=".448" stop-color="#02ff65"/><stop offset=".559" stop-color="#6dff54"/><stop offset=".656" stop-color="#e0ff41"/><stop offset=".681" stop-color="#fffd3b"/><stop offset=".733" stop-color="#ffc324"/><stop offset=".804" stop-color="#ff8e0f"/><stop offset=".903" stop-color="#ff6000"/><stop offset="1" stop-color="#f40"/></linearGradient>
<linearGradient id="c124" gradientUnits="userSpaceOnUse" x1="999" x2="1406"><stop offset="0" stop-color="#00ff93"/><stop offset=".405" stop-color="#00ff6d"/><stop offset=".445" stop-color="#03ff68"/><stop offset=".555" stop-color="#70ff56"/><stop offset=".649" stop-color="#e1ff45"/><stop offset=".671" stop-color="#ffff40"/><stop offset=".720" stop-color="#ffc629"/><stop offset=".789" stop-color="#ff9113"/><stop offset=".887" stop-color="#ff6200"/><stop offset="1" stop-color="#ff4000"/></linearGradient>
<linearGradient id="c125" gradientUnits="userSpaceOnUse" x1="1000" x2="1408"><stop offset="0" stop-color="#00ff95"/><stop offset=".404" stop-color="#00ff6f"/><stop offset=".439" stop-color="#03ff6b"/><stop offset=".549" stop-color="#70ff5a"/><stop offset=".642" stop-color="#e2ff48"/><stop offset=".664" stop-color="#fffd43"/><stop offset=".713" stop-color="#ffc42b"/><stop offset=".782" stop-color="#ff9015"/><stop offset=".880" stop-color="#ff6101"/><stop offset="1" stop-color="#ff3e00"/></linearGradient>
<linearGradient id="c126" gradientUnits="userSpaceOnUse" x1="1000" x2="1411"><stop offset="0" stop-color="#00ff98"/><stop offset=".401" stop-color="#00ff72"/><stop offset=".433" stop-color="#02ff6e"/><stop offset=".540" stop-color="#6dff5e"/><stop offset=".633" stop-color="#e0ff4c"/><stop offset=".657" stop-color="#fffc46"/><stop offset=".706" stop-color="#ffc32e"/><stop offset=".774" stop-color="#ff8f17"/><stop offset=".871" stop-color="#ff6003"/><stop offset="1" stop-color="#ff3a00"/></linearGradient>
<linearGradient id="c127" gradientUnits="userSpaceOnUse" x1="1000" x2="1413"><stop offset="0" stop-color="#00ff9a"/><stop offset=".402" stop-color="#00ff74"/><stop offset=".431" stop-color="#03ff71"/><stop offset=".538" stop-color="#70ff61"/><stop offset=".627" stop-color="#e1ff50"/><stop offset=".649" stop-color="#fffe4b"/><stop offset=".697" stop-color="#ffc431"/><stop offset=".765" stop-color="#ff8f1a"/><stop offset=".862" stop-color="#ff6005"/><stop offset=".947" stop-color="#ff4500"/><stop offset="1" stop-color="#ff3800"/></linearGradient>
<linearGradient id="c128" gradientUnits="userSpaceOnUse" x1="1001" x2="1415"><stop offset="0" stop-color="#00ff9c"/><stop offset=".401" stop-color="#0f7"/><stop offset=".425" stop-color="#03ff74"/><stop offset=".529" stop-color="#6eff64"/><stop offset=".618" stop-color="#dfff54"/><stop offset=".643" stop-color="#fffc4e"/><stop offset=".691" stop-color="#ffc334"/><stop offset=".758" stop-color="#ff8e1c"/><stop offset=".855" stop-color="#ff5f06"/><stop offset=".932" stop-color="#ff4600"/><stop offset="1" stop-color="#ff3600"/></linearGradient>
<linearGradient id="c129" gradientUnits="userSpaceOnUse" x1="1001" x2="1418"><stop offset="0" stop-color="#00ff9e"/><stop offset=".398" stop-color="#00ff7a"/><stop offset=".420" stop-color="#02ff77"/><stop offset=".523" stop-color="#6eff68"/><stop offset=".612" stop-color="#e0ff58"/><stop offset=".633" stop-color="#fffe53"/><stop offset=".681" stop-color="#ffc338"/><stop offset=".746" stop-color="#ff8f1f"/><stop offset=".839" stop-color="#ff6009"/><stop offset=".923" stop-color="#ff4500"/><stop offset="1" stop-color="#f30"/></linearGradient>
<linearGradient id="c130" gradientUnits="userSpaceOnUse" x1="1001" x2="1420"><stop offset="0" stop-color="#00ffa1"/><stop offset=".399" stop-color="#00ff7d"/><stop offset=".418" stop-color="#03ff7a"/><stop offset=".520" stop-color="#71ff6b"/><stop offset=".606" stop-color="#e1ff5c"/><stop offset=".628" stop-color="#fffd57"/><stop offset=".675" stop-color="#ffc23a"/><stop offset=".740" stop-color="#ff8e21"/><stop offset=".833" stop-color="#ff5f0b"/><stop offset=".924" stop-color="#ff4200"/><stop offset="1" stop-color="#ff3000"/></linearGradient>
<linearGradient id="c131" gradientUnits="userSpaceOnUse" x1="1002" x2="1423"><stop offset="0" stop-color="#00ffa3"/><stop offset=".397" stop-color="#00ff7f"/><stop offset=".411" stop-color="#03ff7e"/><stop offset=".511" stop-color="#6eff6f"/><stop offset=".596" stop-color="#dfff60"/><stop offset=".618" stop-color="#ffff5c"/><stop offset=".663" stop-color="#ffc53f"/><stop offset=".724" stop-color="#ff9126"/><stop offset=".815" stop-color="#ff620e"/><stop offset=".919" stop-color="#ff4000"/><stop offset="1" stop-color="#ff2e00"/></linearGradient>
<linearGradient id="c132" gradientUnits="userSpaceOnUse" x1="1002" x2="1425"><stop offset="0" stop-color="#00ffa6"/><stop offset=".395" stop-color="#00ff83"/><stop offset=".409" stop-color="#04ff81"/><stop offset=".508" stop-color="#71ff73"/><stop offset=".593" stop-color="#e4ff64"/><stop offset=".612" stop-color="#fffd5f"/><stop offset=".657" stop-color="#ffc442"/><stop offset=".719" stop-color="#ff9028"/><stop offset=".809" stop-color="#ff6110"/><stop offset=".922" stop-color="#ff3c00"/><stop offset="1" stop-color="#ff2b00"/></linearGradient>
<linearGradient id="c133" gradientUnits="userSpaceOnUse" x1="1003" x2="1427"><stop offset="0" stop-color="#00ffa8"/><stop offset=".396" stop-color="#00ff85"/><stop offset=".425" stop-color="#19ff82"/><stop offset=".519" stop-color="#86ff74"/><stop offset=".599" stop-color="#f7ff65"/><stop offset=".606" stop-color="#fffc63"/><stop offset=".651" stop-color="#ffc245"/><stop offset=".712" stop-color="#ff8f2a"/><stop offset=".802" stop-color="#ff6011"/><stop offset=".925" stop-color="#ff3900"/><stop offset="1" stop-color="#ff2900"/></linearGradient>
<linearGradient id="c134" gradientUnits="userSpaceOnUse" x1="1003" x2="1430"><stop offset="0" stop-color="#00ffab"/><stop offset=".393" stop-color="#00ff89"/><stop offset=".473" stop-color="#55ff7e"/><stop offset=".557" stop-color="#c3ff70"/><stop offset=".597" stop-color="#fffe68"/><stop offset=".642" stop-color="#ffc349"/><stop offset=".703" stop-color="#ff8f2d"/><stop offset=".789" stop-color="#ff6014"/><stop offset=".920" stop-color="#ff3700"/><stop offset="1" stop-color="#ff2700"/></linearGradient>
<linearGradient id="c135" gradientUnits="userSpaceOnUse" x1="1003" x2="1432"><stop offset="0" stop-color="#00ffad"/><stop offset=".394" stop-color="#02ff8c"/><stop offset=".490" stop-color="#6eff7f"/><stop offset=".571" stop-color="#e1ff71"/><stop offset=".592" stop-color="#fffc6c"/><stop offset=".636" stop-color="#ffc24c"/><stop offset=".697" stop-color="#ff8e2f"/><stop offset=".783" stop-color="#ff5f16"/><stop offset=".914" stop-color="#ff3600"/><stop offset="1" stop-color="#ff2500"/></linearGradient>
<linearGradient id="c136" gradientUnits="userSpaceOnUse" x1="1004" x2="1434"><stop offset="0" stop-color="#00ffb0"/><stop offset=".388" stop-color="#01ff8f"/><stop offset=".484" stop-color="#6eff83"/><stop offset=".563" stop-color="#deff76"/><stop offset=".584" stop-color="#fffe71"/><stop offset=".626" stop-color="#ffc552"/><stop offset=".684" stop-color="#ff9134"/><stop offset=".767" stop-color="#ff621a"/><stop offset=".893" stop-color="#ff3902"/><stop offset="1" stop-color="#ff2300"/></linearGradient>
<linearGradient id="c137" gradientUnits="userSpaceOnUse" x1="1004" x2="1437"><stop offset="0" stop-color="#00ffb2"/><stop offset=".386" stop-color="#03ff93"/><stop offset=".478" stop-color="#6fff87"/><stop offset=".557" stop-color="#e0ff7a"/><stop offset=".577" stop-color="#fffc75"/><stop offset=".619" stop-color="#ffc454"/><stop offset=".677" stop-color="#ff9036"/><stop offset=".760" stop-color="#ff611b"/><stop offset=".885" stop-color="#ff3804"/><stop offset="1" stop-color="#ff2000"/></linearGradient>
<linearGradient id="c138" gradientUnits="userSpaceOnUse" x1="1004" x2="1439"><stop offset="0" stop-color="#00ffb5"/><stop offset=".382" stop-color="#02ff97"/><stop offset=".474" stop-color="#6fff8b"/><stop offset=".552" stop-color="#e1ff7f"/><stop offset=".570" stop-color="#ffff7b"/><stop offset=".611" stop-color="#ffc559"/><stop offset=".669" stop-color="#ff903a"/><stop offset=".752" stop-color="#ff611e"/><stop offset=".876" stop-color="#ff3705"/><stop offset=".966" stop-color="#ff2400"/><stop offset="1" stop-color="#ff1e00"/></linearGradient>
<linearGradient id="c139" gradientUnits="userSpaceOnUse" x1="1005" x2="1442"><stop offset="0" stop-color="#00ffb8"/><stop offset=".375" stop-color="#01ff9b"/><stop offset=".465" stop-color="#6cff90"/><stop offset=".542" stop-color="#deff84"/><stop offset=".563" stop-color="#fffd7f"/><stop offset=".604" stop-color="#ffc35c"/><stop offset=".661" stop-color="#ff8f3c"/><stop offset=".744" stop-color="#ff5f1f"/><stop offset=".867" stop-color="#ff3606"/><stop offset=".954" stop-color="#ff2400"/><stop offset="1" stop-color="#ff1c00"/></linearGradient>
<linearGradient id="c140" gradientUnits="userSpaceOnUse" x1="1005" x2="1444"><stop offset="0" stop-color="#0fb"/><stop offset=".374" stop-color="#03ff9e"/><stop offset=".462" stop-color="#6fff94"/><stop offset=".538" stop-color="#e0ff88"/><stop offset=".556" stop-color="#ffff85"/><stop offset=".597" stop-color="#ffc461"/><stop offset=".651" stop-color="#ff9140"/><stop offset=".731" stop-color="#ff6123"/><stop offset=".850" stop-color="#ff380a"/><stop offset=".945" stop-color="#ff2300"/><stop offset="1" stop-color="#ff1a00"/></linearGradient>
<linearGradient id="c141" gradientUnits="userSpaceOnUse" x1="1006" x2="1446"><stop offset="0" stop-color="#00ffbe"/><stop offset=".368" stop-color="#02ffa2"/><stop offset=".457" stop-color="#6fff98"/><stop offset=".532" stop-color="#e1ff8d"/><stop offset=".550" stop-color="#fffd89"/><stop offset=".591" stop-color="#ffc364"/><stop offset=".648" stop-color="#ff8d42"/><stop offset=".727" stop-color="#ff5f24"/><stop offset=".848" stop-color="#ff360a"/><stop offset=".948" stop-color="#ff2100"/><stop offset="1" stop-color="#ff1800"/></linearGradient>
<linearGradient id="c142" gradientUnits="userSpaceOnUse" x1="1006" x2="1449"><stop offset="0" stop-color="#00ffc0"/><stop offset=".363" stop-color="#01ffa7"/><stop offset=".449" stop-color="#6cff9d"/><stop offset=".524" stop-color="#dfff92"/><stop offset=".544" stop-color="#fffc8d"/><stop offset=".585" stop-color="#ffc167"/><stop offset=".641" stop-color="#ff8c44"/><stop offset=".720" stop-color="#ff5e26"/><stop offset=".840" stop-color="#ff350b"/><stop offset=".946" stop-color="#ff1f00"/><stop offset="1" stop-color="#ff1600"/></linearGradient>
<linearGradient id="c143" gradientUnits="userSpaceOnUse" x1="1006" x2="1451"><stop offset="0" stop-color="#00ffc3"/><stop offset=".362" stop-color="#03ffaa"/><stop offset=".447" stop-color="#6fffa1"/><stop offset=".519" stop-color="#e0ff97"/><stop offset=".537" stop-color="#fffe94"/><stop offset=".575" stop-color="#ffc56e"/><stop offset=".629" stop-color="#ff904a"/><stop offset=".706" stop-color="#ff612b"/><stop offset=".820" stop-color="#ff380f"/><stop offset=".946" stop-color="#ff1d00"/><stop offset="1" stop-color="#ff1500"/></linearGradient>
<linearGradient id="c144" gradientUnits="userSpaceOnUse" x1="1007" x2="1453"><stop offset="0" stop-color="#00ffc6"/><stop offset=".357" stop-color="#02ffaf"/><stop offset=".442" stop-color="#6fffa6"/><stop offset=".513" stop-color="#e1ff9c"/><stop offset=".531" stop-color="#fffc98"/><stop offset=".570" stop-color="#ffc371"/><stop offset=".623" stop-color="#ff8e4d"/><stop offset=".700" stop-color="#ff602d"/><stop offset=".814" stop-color="#ff3710"/><stop offset=".948" stop-color="#ff1b00"/><stop offset="1" stop-color="#ff1300"/></linearGradient>
<linearGradient id="c145" gradientUnits="userSpaceOnUse" x1="1007" x2="1456"><stop offset="0" stop-color="#00ffc9"/><stop offset=".352" stop-color="#01ffb3"/><stop offset=".434" stop-color="#6cffab"/><stop offset=".506" stop-color="#dfffa2"/><stop offset=".523" stop-color="#fffe9f"/><stop offset=".561" stop-color="#ffc476"/><stop offset=".612" stop-color="#ff9052"/><stop offset=".686" stop-color="#ff6131"/><stop offset=".797" stop-color="#ff3813"/><stop offset=".944" stop-color="#ff1900"/><stop offset="1" stop-color="#f10"/></linearGradient>
<linearGradient id="c146" gradientUnits="userSpaceOnUse" x1="1008" x2="1458"><stop offset="0" stop-color="#00ffcd"/><stop offset=".349" stop-color="#03ffb7"/><stop offset=".431" stop-color="#70ffaf"/><stop offset=".500" stop-color="#e0ffa7"/><stop offset=".518" stop-color="#fffda3"/><stop offset=".556" stop-color="#ffc379"/><stop offset=".607" stop-color="#ff8f54"/><stop offset=".680" stop-color="#ff6033"/><stop offset=".791" stop-color="#ff3715"/><stop offset=".947" stop-color="#ff1700"/><stop offset="1" stop-color="#ff0f00"/></linearGradient>
<linearGradient id="c147" gradientUnits="userSpaceOnUse" x1="1008" x2="1461"><stop offset="0" stop-color="#00ffd0"/><stop offset=".344" stop-color="#02ffbc"/><stop offset=".424" stop-color="#6dffb5"/><stop offset=".492" stop-color="#deffad"/><stop offset=".510" stop-color="#ffffab"/><stop offset=".545" stop-color="#ffc681"/><stop offset=".596" stop-color="#ff9159"/><stop offset=".667" stop-color="#ff6237"/><stop offset=".773" stop-color="#ff3919"/><stop offset=".940" stop-color="#ff1600"/><stop offset="1" stop-color="#ff0d00"/></linearGradient>
<linearGradient id="c148" gradientUnits="userSpaceOnUse" x1="1008" x2="1463"><stop offset="0" stop-color="#00ffd3"/><stop offset=".341" stop-color="#01ffc1"/><stop offset=".420" stop-color="#6dffba"/><stop offset=".488" stop-color="#dfffb2"/><stop offset=".505" stop-color="#fffdaf"/><stop offset=".541" stop-color="#ffc584"/><stop offset=".591" stop-color="#ff8f5c"/><stop offset=".662" stop-color="#ff6139"/><stop offset=".769" stop-color="#ff371a"/><stop offset=".941" stop-color="#ff1400"/><stop offset="1" stop-color="#ff0c00"/></linearGradient>
<linearGradient id="c149" gradientUnits="userSpaceOnUse" x1="1009" x2="1465"><stop offset="0" stop-color="#00ffd6"/><stop offset=".338" stop-color="#03ffc5"/><stop offset=".417" stop-color="#70ffbf"/><stop offset=".482" stop-color="#e1ffb8"/><stop offset=".498" stop-color="#feffb6"/><stop offset=".535" stop-color="#ffc388"/><stop offset=".586" stop-color="#ff8e5f"/><stop offset=".658" stop-color="#ff5e3a"/><stop offset=".765" stop-color="#ff361b"/><stop offset=".939" stop-color="#ff1200"/><stop offset="1" stop-color="#ff0a00"/></linearGradient>
<linearGradient id="c150" gradientUnits="userSpaceOnUse" x1="1009" x2="1468"><stop offset="0" stop-color="#00ffda"/><stop offset=".333" stop-color="#02ffca"/><stop offset=".410" stop-color="#6dffc4"/><stop offset=".475" stop-color="#deffbe"/><stop offset=".492" stop-color="#fffebb"/><stop offset=".527" stop-color="#ffc48e"/><stop offset=".575" stop-color="#ff9064"/><stop offset=".645" stop-color="#ff613f"/><stop offset=".749" stop-color="#ff371e"/><stop offset=".917" stop-color="#ff1402"/><stop offset="1" stop-color="#ff0900"/></linearGradient>
<linearGradient id="c151" gradientUnits="userSpaceOnUse" x1="1010" x2="1470"><stop offset="0" stop-color="#0fd"/><stop offset=".328" stop-color="#01ffcf"/><stop offset=".404" stop-color="#6dffca"/><stop offset=".470" stop-color="#dfffc4"/><stop offset=".487" stop-color="#fffcc0"/><stop offset=".522" stop-color="#ffc291"/><stop offset=".570" stop-color="#ff8e67"/><stop offset=".639" stop-color="#ff5f41"/><stop offset=".743" stop-color="#ff361f"/><stop offset=".911" stop-color="#ff1303"/><stop offset="1" stop-color="#ff0700"/></linearGradient>
<linearGradient id="c152" gradientUnits="userSpaceOnUse" x1="1010" x2="1472"><stop offset="0" stop-color="#00ffe0"/><stop offset=".327" stop-color="#03ffd4"/><stop offset=".400" stop-color="#6dffcf"/><stop offset=".463" stop-color="#ddffca"/><stop offset=".481" stop-color="#fffec8"/><stop offset=".515" stop-color="#ffc397"/><stop offset=".563" stop-color="#ff8f6b"/><stop offset=".630" stop-color="#ff6045"/><stop offset=".732" stop-color="#ff3723"/><stop offset=".894" stop-color="#ff1405"/><stop offset=".996" stop-color="#ff0600"/><stop offset="1" stop-color="#ff0600"/></linearGradient>
<linearGradient id="c153" gradientUnits="userSpaceOnUse" x1="1011" x2="1475"><stop offset="0" stop-color="#00ffe4"/><stop offset=".321" stop-color="#02ffd9"/><stop offset=".394" stop-color="#6dffd5"/><stop offset=".457" stop-color="#deffd0"/><stop offset=".474" stop-color="#fffccd"/><stop offset=".509" stop-color="#ffc29b"/><stop offset=".556" stop-color="#ff8d6e"/><stop offset=".623" stop-color="#ff5f47"/><stop offset=".724" stop-color="#ff3624"/><stop offset=".888" stop-color="#ff1206"/><stop offset=".987" stop-color="#ff0500"/><stop offset="1" stop-color="#ff0400"/></linearGradient>
<linearGradient id="c154" gradientUnits="userSpaceOnUse" x1="1011" x2="1477"><stop offset="0" stop-color="#00ffe8"/><stop offset=".318" stop-color="#01ffde"/><stop offset=".391" stop-color="#6dffdb"/><stop offset=".453" stop-color="#e0ffd7"/><stop offset=".468" stop-color="#ffffd6"/><stop offset=".500" stop-color="#ffc6a4"/><stop offset=".545" stop-color="#ff9176"/><stop offset=".609" stop-color="#ff624d"/><stop offset=".706" stop-color="#ff3929"/><stop offset=".861" stop-color="#ff150a"/><stop offset=".972" stop-color="#ff0600"/><stop offset="1" stop-color="#ff0300"/></linearGradient>
<linearGradient id="c155" gradientUnits="userSpaceOnUse" x1="1012" x2="1480"><stop offset="0" stop-color="#00ffeb"/><stop offset=".314" stop-color="#03ffe3"/><stop offset=".385" stop-color="#6effe0"/><stop offset=".444" stop-color="#dfd"/><stop offset=".462" stop-color="#fffddb"/><stop offset=".494" stop-color="#ffc4a8"/><stop offset=".538" stop-color="#ff9079"/><stop offset=".603" stop-color="#ff614f"/><stop offset=".699" stop-color="#ff372b"/><stop offset=".853" stop-color="#ff140b"/><stop offset=".972" stop-color="#ff0400"/><stop offset="1" stop-color="#ff0100"/></linearGradient>
<linearGradient id="c156" gradientUnits="userSpaceOnUse" x1="1012" x2="1482"><stop offset="0" stop-color="#00ffef"/><stop offset=".311" stop-color="#02ffe9"/><stop offset=".381" stop-color="#6effe6"/><stop offset=".440" stop-color="#deffe4"/><stop offset=".455" stop-color="#ffffe3"/><stop offset=".489" stop-color="#ffc2ac"/><stop offset=".534" stop-color="#ff8e7c"/><stop offset=".598" stop-color="#ff5f52"/><stop offset=".694" stop-color="#ff362c"/><stop offset=".847" stop-color="#ff130c"/><stop offset=".972" stop-color="#ff0300"/><stop offset="1" stop-color="#f00"/></linearGradient>
<linearGradient id="c157" gradientUnits="userSpaceOnUse" x1="1012" x2="1484"><stop offset="0" stop-color="#00fff3"/><stop offset=".307" stop-color="#01ffee"/><stop offset=".377" stop-color="#6effed"/><stop offset=".436" stop-color="#e0ffeb"/><stop offset=".451" stop-color="#fffde9"/><stop offset=".483" stop-color="#ffc3b3"/><stop offset=".528" stop-color="#ff8e81"/><stop offset=".591" stop-color="#ff5f55"/><stop offset=".686" stop-color="#ff362e"/><stop offset=".839" stop-color="#ff130e"/><stop offset=".975" stop-color="#ff0100"/><stop offset="1" stop-color="#f00"/></linearGradient>
<linearGradient id="c158" gradientUnits="userSpaceOnUse" x1="1013" x2="1487"><stop offset="0" stop-color="#00fff7"/><stop offset=".304" stop-color="#03fff4"/><stop offset=".371" stop-color="#6efff3"/><stop offset=".428" stop-color="#ddfff2"/><stop offset=".443" stop-color="#fefff2"/><stop offset=".477" stop-color="#ffc1b7"/><stop offset=".521" stop-color="#ff8c84"/><stop offset=".584" stop-color="#ff5e57"/><stop offset=".679" stop-color="#ff3530"/><stop offset=".831" stop-color="#ff120f"/><stop offset=".973" stop-color="#f00"/><stop offset="1" stop-color="#f00"/></linearGradient>
<linearGradient id="c159" gradientUnits="userSpaceOnUse" x1="1013" x2="1489"><stop offset="0" stop-color="#00fffb"/><stop offset=".300" stop-color="#02fffa"/><stop offset=".368" stop-color="#6efff9"/><stop offset=".424" stop-color="#dffff9"/><stop offset=".439" stop-color="#fffef8"/><stop offset=".468" stop-color="#ffc6c1"/><stop offset=".511" stop-color="#ff918d"/><stop offset=".569" stop-color="#ff6260"/><stop offset=".658" stop-color="#ff3937"/><stop offset=".798" stop-color="#ff1614"/><stop offset=".971" stop-color="#f00"/><stop offset="1" stop-color="#f00"/></linearGradient>
<linearGradient id="c160" gradientUnits="userSpaceOnUse" x1="1014" x2="1492"><stop offset="0" stop-color="#0ff"/><stop offset=".295" stop-color="#01feff"/><stop offset=".362" stop-color="#6efeff"/><stop offset=".418" stop-color="#dffeff"/><stop offset=".433" stop-color="#fffcfd"/><stop offset=".462" stop-color="#ffc4c5"/><stop offset=".504" stop-color="#ff8f90"/><stop offset=".563" stop-color="#ff6162"/><stop offset=".651" stop-color="#ff3839"/><stop offset=".793" stop-color="#ff1415"/><stop offset=".962" stop-color="#f00"/><stop offset="1" stop-color="#f00"/></linearGradient>
<linearGradient id="c161" gradientUnits="userSpaceOnUse" x1="1014" x2="1494"><stop offset="0" stop-color="#00fbff"/><stop offset=".294" stop-color="#03f8ff"/><stop offset=".360" stop-color="#6ff7ff"/><stop offset=".417" stop-color="#dff6ff"/><stop offset=".431" stop-color="#fff5fe"/><stop offset=".463" stop-color="#ffbcc3"/><stop offset=".504" stop-color="#ff898f"/><stop offset=".565" stop-color="#ff5c60"/><stop offset=".656" stop-color="#ff3337"/><stop offset=".802" stop-color="#ff1114"/><stop offset=".952" stop-color="#f00"/><stop offset="1" stop-color="#f00"/></linearGradient>
<linearGradient id="c162" gradientUnits="userSpaceOnUse" x1="1015" x2="1496"><stop offset="0" stop-color="#00f7ff"/><stop offset=".289" stop-color="#02f3ff"/><stop offset=".356" stop-color="#6cf1ff"/><stop offset=".414" stop-color="#dfefff"/><stop offset=".428" stop-color="#fef"/><stop offset=".459" stop-color="#ffb6c4"/><stop offset=".501" stop-color="#ff8590"/><stop offset=".561" stop-color="#ff5962"/><stop offset=".653" stop-color="#ff3138"/><stop offset=".798" stop-color="#ff1015"/><stop offset=".940" stop-color="#ff0001"/><stop offset="1" stop-color="#f00"/></linearGradient>
<linearGradient id="c163" gradientUnits="userSpaceOnUse" x1="1015" x2="1499"><stop offset="0" stop-color="#00f3ff"/><stop offset=".285" stop-color="#01edff"/><stop offset=".353" stop-color="#6debff"/><stop offset=".411" stop-color="#dfe8ff"/><stop offset=".426" stop-color="#ffe7ff"/><stop offset=".457" stop-color="#ffb1c5"/><stop offset=".500" stop-color="#ff808f"/><stop offset=".562" stop-color="#ff5460"/><stop offset=".655" stop-color="#ff2d37"/><stop offset=".804" stop-color="#ff0d14"/><stop offset=".928" stop-color="#ff0003"/><stop offset="1" stop-color="#f00"/></linearGradient>
<linearGradient id="c164" gradientUnits="userSpaceOnUse" x1="1016" x2="1501"><stop offset="0" stop-color="#00efff"/><stop offset=".282" stop-color="#03e7ff"/><stop offset=".351" stop-color="#6ee4ff"/><stop offset=".408" stop-color="#dfe1ff"/><stop offset=".423" stop-color="#fee1ff"/><stop offset=".456" stop-color="#ffaac3"/><stop offset=".499" stop-color="#ff7a8e"/><stop offset=".561" stop-color="#ff5060"/><stop offset=".654" stop-color="#ff2b37"/><stop offset=".804" stop-color="#ff0b14"/><stop offset=".918" stop-color="#ff0004"/><stop offset="1" stop-color="#f00"/></linearGradient>
<linearGradient id="c165" gradientUnits="userSpaceOnUse" x1="1016" x2="1503"><stop offset="0" stop-color="#00ebff"/><stop offset=".279" stop-color="#02e2ff"/><stop offset=".349" stop-color="#6fdeff"/><stop offset=".409" stop-color="#e3dbff"/><stop offset=".423" stop-color="#ffd7fc"/><stop offset=".454" stop-color="#ffa5c3"/><stop offset=".497" stop-color="#ff778f"/><stop offset=".559" stop-color="#ff4e61"/><stop offset=".651" stop-color="#ff2938"/><stop offset=".799" stop-color="#ff0a15"/><stop offset=".906" stop-color="#ff0006"/><stop offset="1" stop-color="#f00"/></linearGradient>
<linearGradient id="c166" gradientUnits="userSpaceOnUse" x1="1017" x2="1506"><stop offset="0" stop-color="#00e7ff"/><stop offset=".274" stop-color="#01ddff"/><stop offset=".344" stop-color="#6dd9ff"/><stop offset=".403" stop-color="#ded4ff"/><stop offset=".419" stop-color="#ffd0fc"/><stop offset=".452" stop-color="#ff9ec1"/><stop offset=".497" stop-color="#ff708d"/><stop offset=".560" stop-color="#ff485e"/><stop offset=".656" stop-color="#ff2536"/><stop offset=".812" stop-color="#ff0612"/><stop offset=".906" stop-color="#ff0005"/><stop offset="1" stop-color="#f00"/></linearGradient>
<linearGradient id="c167" gradientUnits="userSpaceOnUse" x1="1017" x2="1508"><stop offset="0" stop-color="#00e3ff"/><stop offset=".273" stop-color="#03d8ff"/><stop offset=".342" stop-color="#6ed3ff"/><stop offset=".401" stop-color="#deceff"/><stop offset=".418" stop-color="#ffcafd"/><stop offset=".450" stop-color="#ff99c2"/><stop offset=".495" stop-color="#ff6d8e"/><stop offset=".558" stop-color="#ff465f"/><stop offset=".654" stop-color="#ff2336"/><stop offset=".809" stop-color="#ff0513"/><stop offset=".906" stop-color="#ff0006"/><stop offset="1" stop-color="#f00"/></linearGradient>
<linearGradient id="c168" gradientUnits="userSpaceOnUse" x1="1018" x2="1511"><stop offset="0" stop-color="#00e0ff"/><stop offset=".268" stop-color="#02d3ff"/><stop offset=".339" stop-color="#6fcdff"/><stop offset=".400" stop-color="#e2c7ff"/><stop offset=".414" stop-color="#ffc4fd"/><stop offset=".446" stop-color="#ff95c3"/><stop offset=".491" stop-color="#ff698f"/><stop offset=".554" stop-color="#ff4360"/><stop offset=".649" stop-color="#ff2137"/><stop offset=".801" stop-color="#ff0414"/><stop offset=".919" stop-color="#ff0004"/><stop offset="1" stop-color="#f00"/></linearGradient>
<linearGradient id="c169" gradientUnits="userSpaceOnUse" x1="1018" x2="1513"><stop offset="0" stop-color="#00dcff"/><stop offset=".265" stop-color="#01ceff"/><stop offset=".335" stop-color="#6cc8ff"/><stop offset=".396" stop-color="#dec2ff"/><stop offset=".412" stop-color="#ffbffe"/><stop offset=".444" stop-color="#ff90c4"/><stop offset=".489" stop-color="#ff6690"/><stop offset=".554" stop-color="#ff4060"/><stop offset=".651" stop-color="#ff1e37"/><stop offset=".806" stop-color="#ff0214"/><stop offset=".986" stop-color="#f00"/><stop offset="1" stop-color="#f00"/></linearGradient>
<linearGradient id="c170" gradientUnits="userSpaceOnUse" x1="1019" x2="1515"><stop offset="0" stop-color="#00d8ff"/><stop offset=".262" stop-color="#02c9ff"/><stop offset=".333" stop-color="#6dc2ff"/><stop offset=".393" stop-color="#debcff"/><stop offset=".409" stop-color="#ffb9fe"/><stop offset=".442" stop-color="#ff8cc5"/><stop offset=".486" stop-color="#ff6391"/><stop offset=".550" stop-color="#ff3d61"/><stop offset=".647" stop-color="#ff1d38"/><stop offset=".802" stop-color="#ff0114"/><stop offset=".988" stop-color="#f00"/><stop offset="1" stop-color="#f00"/></linearGradient>
<linearGradient id="c171" gradientUnits="userSpaceOnUse" x1="1019" x2="1518"><stop offset="0" stop-color="#00d4ff"/><stop offset=".259" stop-color="#01c4ff"/><stop offset=".331" stop-color="#6ebdff"/><stop offset=".393" stop-color="#e2b6ff"/><stop offset=".407" stop-color="#ffb3ff"/><stop offset=".439" stop-color="#ff87c6"/><stop offset=".483" stop-color="#ff5f92"/><stop offset=".547" stop-color="#ff3b62"/><stop offset=".643" stop-color="#ff1b39"/><stop offset=".798" stop-color="#ff0015"/><stop offset=".986" stop-color="#f00"/><stop offset="1" stop-color="#f00"/></linearGradient>
<linearGradient id="c172" gradientUnits="userSpaceOnUse" x1="1020" x2="1520"><stop offset="0" stop-color="#00d1ff"/><stop offset=".254" stop-color="#00bfff"/><stop offset=".326" stop-color="#6cb8ff"/><stop offset=".388" stop-color="#ddb0ff"/><stop offset=".404" stop-color="#ffaeff"/><stop offset=".436" stop-color="#ff83c6"/><stop offset=".480" stop-color="#ff5c92"/><stop offset=".544" stop-color="#ff3963"/><stop offset=".640" stop-color="#ff1a3a"/><stop offset=".792" stop-color="#ff0016"/><stop offset=".988" stop-color="#f00"/><stop offset="1" stop-color="#f00"/></linearGradient>
<linearGradient id="c173" gradientUnits="userSpaceOnUse" x1="1020" x2="1523"><stop offset="0" stop-color="#00cdff"/><stop offset=".252" stop-color="#02bbff"/><stop offset=".326" stop-color="#70b3ff"/><stop offset=".388" stop-color="#e1aaff"/><stop offset=".402" stop-color="#fea8ff"/><stop offset=".435" stop-color="#ff7dc4"/><stop offset=".481" stop-color="#ff5690"/><stop offset=".547" stop-color="#ff3461"/><stop offset=".646" stop-color="#ff1637"/><stop offset=".785" stop-color="#ff0017"/><stop offset=".986" stop-color="#f00"/><stop offset="1" stop-color="#f00"/></linearGradient>
<linearGradient id="c174" gradientUnits="userSpaceOnUse" x1="1021" x2="1525"><stop offset="0" stop-color="#00caff"/><stop offset=".248" stop-color="#01b6ff"/><stop offset=".321" stop-color="#6eaeff"/><stop offset=".385" stop-color="#e1a5ff"/><stop offset=".401" stop-color="#ffa0fc"/><stop offset=".435" stop-color="#ff77c2"/><stop offset=".480" stop-color="#ff528f"/><stop offset=".546" stop-color="#ff3161"/><stop offset=".645" stop-color="#ff1437"/><stop offset=".776" stop-color="#ff0019"/><stop offset=".984" stop-color="#f00"/><stop offset="1" stop-color="#f00"/></linearGradient>
<linearGradient id="c175" gradientUnits="userSpaceOnUse" x1="1021" x2="1527"><stop offset="0" stop-color="#00c6ff"/><stop offset=".247" stop-color="#03b2ff"/><stop offset=".320" stop-color="#6fa9ff"/><stop offset=".383" stop-color="#e19fff"/><stop offset=".399" stop-color="#ff9bfc"/><stop offset=".433" stop-color="#ff73c3"/><stop offset=".480" stop-color="#ff4e8e"/><stop offset=".547" stop-color="#ff2d5f"/><stop offset=".648" stop-color="#ff1136"/><stop offset=".767" stop-color="#ff001b"/><stop offset=".982" stop-color="#f00"/><stop offset="1" stop-color="#f00"/></linearGradient>
<linearGradient id="c176" gradientUnits="userSpaceOnUse" x1="1022" x2="1530"><stop offset="0" stop-color="#00c2ff"/><stop offset=".242" stop-color="#02aeff"/><stop offset=".317" stop-color="#6fa4ff"/><stop offset=".380" stop-color="#e19aff"/><stop offset=".396" stop-color="#ff96fd"/><stop offset=".429" stop-color="#ff6fc4"/><stop offset=".476" stop-color="#ff4b8f"/><stop offset=".543" stop-color="#ff2b60"/><stop offset=".644" stop-color="#ff0f37"/><stop offset=".754" stop-color="#ff001d"/><stop offset=".976" stop-color="#f00"/><stop offset="1" stop-color="#f00"/></linearGradient>
<linearGradient id="c177" gradientUnits="userSpaceOnUse" x1="1022" x2="1532"><stop offset="0" stop-color="#00bfff"/><stop offset=".239" stop-color="#01a9ff"/><stop offset=".314" stop-color="#6da0ff"/><stop offset=".378" stop-color="#e195ff"/><stop offset=".394" stop-color="#ff91fd"/><stop offset=".427" stop-color="#ff6bc5"/><stop offset=".475" stop-color="#ff4890"/><stop offset=".541" stop-color="#ff2961"/><stop offset=".641" stop-color="#ff0e38"/><stop offset=".743" stop-color="#ff001f"/><stop offset=".973" stop-color="#f00"/><stop offset="1" stop-color="#f00"/></linearGradient>
<linearGradient id="c178" gradientUnits="userSpaceOnUse" x1="1023" x2="1534"><stop offset="0" stop-color="#00bcff"/><stop offset=".237" stop-color="#03a5ff"/><stop offset=".311" stop-color="#6e9bff"/><stop offset=".376" stop-color="#e190ff"/><stop offset=".391" stop-color="#ff8cfe"/><stop offset=".427" stop-color="#ff66c3"/><stop offset=".474" stop-color="#ff448f"/><stop offset=".542" stop-color="#ff2660"/><stop offset=".644" stop-color="#ff0b37"/><stop offset=".734" stop-color="#ff0021"/><stop offset=".963" stop-color="#ff0001"/><stop offset="1" stop-color="#f00"/></linearGradient>
<linearGradient id="c179" gradientUnits="userSpaceOnUse" x1="1023" x2="1537"><stop offset="0" stop-color="#00b8ff"/><stop offset=".233" stop-color="#02a1ff"/><stop offset=".309" stop-color="#6f96ff"/><stop offset=".374" stop-color="#e18bff"/><stop offset=".389" stop-color="#ff87fe"/><stop offset=".424" stop-color="#ff62c3"/><stop offset=".473" stop-color="#ff408e"/><stop offset=".541" stop-color="#ff2360"/><stop offset=".644" stop-color="#ff0937"/><stop offset=".724" stop-color="#ff0023"/><stop offset=".946" stop-color="#ff0003"/><stop offset="1" stop-color="#f00"/></linearGradient>
<linearGradient id="c180" gradientUnits="userSpaceOnUse" x1="1024" x2="1538"><stop offset="0" stop-color="#00b5ff"/><stop offset=".230" stop-color="#019dff"/><stop offset=".305" stop-color="#6d92ff"/><stop offset=".372" stop-color="#e086ff"/><stop offset=".387" stop-color="#ff82ff"/><stop offset=".422" stop-color="#ff5ec4"/><stop offset=".471" stop-color="#ff3e8f"/><stop offset=".539" stop-color="#ff2161"/><stop offset=".642" stop-color="#ff0838"/><stop offset=".716" stop-color="#ff0025"/><stop offset=".934" stop-color="#ff0004"/><stop offset="1" stop-color="#f00"/></linearGradient>
<linearGradient id="c181" gradientUnits="userSpaceOnUse" x1="1025" x2="1535"><stop offset="0" stop-color="#00b1ff"/><stop offset=".229" stop-color="#0399ff"/><stop offset=".308" stop-color="#718dff"/><stop offset=".375" stop-color="#e481ff"/><stop offset=".388" stop-color="#ff7eff"/><stop offset=".424" stop-color="#ff5bc5"/><stop offset=".473" stop-color="#ff3b90"/><stop offset=".543" stop-color="#ff1e61"/><stop offset=".649" stop-color="#ff0537"/><stop offset=".724" stop-color="#ff0025"/><stop offset=".945" stop-color="#ff0004"/><stop offset="1" stop-color="#f00"/></linearGradient>
<linearGradient id="c182" gradientUnits="userSpaceOnUse" x1="1025" x2="1530"><stop offset="0" stop-color="#00aeff"/><stop offset=".230" stop-color="#0296ff"/><stop offset=".309" stop-color="#6e89ff"/><stop offset=".376" stop-color="#e07cff"/><stop offset=".394" stop-color="#ff77fc"/><stop offset=".430" stop-color="#ff56c3"/><stop offset=".479" stop-color="#ff378f"/><stop offset=".550" stop-color="#ff1c60"/><stop offset=".657" stop-color="#ff0437"/><stop offset=".786" stop-color="#ff001b"/><stop offset="1" stop-color="#f00"/></linearGradient>
<linearGradient id="c183" gradientUnits="userSpaceOnUse" x1="1026" x2="1524"><stop offset="0" stop-color="#00abff"/><stop offset=".229" stop-color="#0192ff"/><stop offset=".309" stop-color="#6c85ff"/><stop offset=".380" stop-color="#e078ff"/><stop offset=".398" stop-color="#ff73fc"/><stop offset=".436" stop-color="#ff51c1"/><stop offset=".488" stop-color="#ff338d"/><stop offset=".562" stop-color="#ff185e"/><stop offset=".675" stop-color="#ff0135"/><stop offset=".855" stop-color="#ff0012"/><stop offset="1" stop-color="#ff0002"/></linearGradient>
<linearGradient id="c184" gradientUnits="userSpaceOnUse" x1="1026" x2="1519"><stop offset="0" stop-color="#00a8ff"/><stop offset=".231" stop-color="#038eff"/><stop offset=".314" stop-color="#7081ff"/><stop offset=".385" stop-color="#e373ff"/><stop offset=".402" stop-color="#ff6efd"/><stop offset=".440" stop-color="#ff4dc2"/><stop offset=".493" stop-color="#ff308e"/><stop offset=".568" stop-color="#ff165f"/><stop offset=".682" stop-color="#ff0036"/><stop offset=".864" stop-color="#ff0013"/><stop offset="1" stop-color="#ff0004"/></linearGradient>
<linearGradient id="c185" gradientUnits="userSpaceOnUse" x1="1027" x2="1514"><stop offset="0" stop-color="#00a4ff"/><stop offset=".230" stop-color="#028bff"/><stop offset=".314" stop-color="#6e7dff"/><stop offset=".386" stop-color="#e06fff"/><stop offset=".405" stop-color="#ff6afd"/><stop offset=".444" stop-color="#ff4ac3"/><stop offset=".497" stop-color="#ff2e8e"/><stop offset=".573" stop-color="#ff1460"/><stop offset=".688" stop-color="#ff0037"/><stop offset=".873" stop-color="#ff0013"/><stop offset="1" stop-color="#ff0005"/></linearGradient>
<linearGradient id="c186" gradientUnits="userSpaceOnUse" x1="1027" x2="1509"><stop offset="0" stop-color="#00a1ff"/><stop offset=".230" stop-color="#0187ff"/><stop offset=".317" stop-color="#6f79ff"/><stop offset=".390" stop-color="#e06aff"/><stop offset=".409" stop-color="#ff66fd"/><stop offset=".448" stop-color="#ff47c3"/><stop offset=".502" stop-color="#ff2b8f"/><stop offset=".579" stop-color="#ff1361"/><stop offset=".689" stop-color="#ff0039"/><stop offset=".871" stop-color="#ff0016"/><stop offset="1" stop-color="#ff0007"/></linearGradient>
<linearGradient id="c187" gradientUnits="userSpaceOnUse" x1="1028" x2="1504"><stop offset="0" stop-color="#009eff"/><stop offset=".231" stop-color="#0283ff"/><stop offset=".319" stop-color="#7075ff"/><stop offset=".395" stop-color="#e366ff"/><stop offset=".412" stop-color="#ff61fe"/><stop offset=".452" stop-color="#ff44c4"/><stop offset=".506" stop-color="#ff2990"/><stop offset=".586" stop-color="#ff1061"/><stop offset=".689" stop-color="#ff003c"/><stop offset=".870" stop-color="#ff0018"/><stop offset="1" stop-color="#ff0008"/></linearGradient>
<linearGradient id="c188" gradientUnits="userSpaceOnUse" x1="1029" x2="1499"><stop offset="0" stop-color="#009bff"/><stop offset=".230" stop-color="#0280ff"/><stop offset=".319" stop-color="#6d71ff"/><stop offset=".396" stop-color="#df62ff"/><stop offset=".415" stop-color="#ff5dfe"/><stop offset=".455" stop-color="#ff40c5"/><stop offset=".511" stop-color="#ff2691"/><stop offset=".591" stop-color="#ff0e61"/><stop offset=".687" stop-color="#ff003f"/><stop offset=".864" stop-color="#ff001a"/><stop offset="1" stop-color="#ff000a"/></linearGradient>
<linearGradient id="c189" gradientUnits="userSpaceOnUse" x1="1029" x2="1494"><stop offset="0" stop-color="#0098ff"/><stop offset=".230" stop-color="#017dff"/><stop offset=".323" stop-color="#6e6eff"/><stop offset=".400" stop-color="#df5eff"/><stop offset=".419" stop-color="#ff59ff"/><stop offset=".460" stop-color="#ff3dc6"/><stop offset=".518" stop-color="#ff2390"/><stop offset=".600" stop-color="#ff0c61"/><stop offset=".686" stop-color="#ff0042"/><stop offset=".860" stop-color="#ff001d"/><stop offset="1" stop-color="#ff000b"/></linearGradient>
<linearGradient id="c190" gradientUnits="userSpaceOnUse" x1="1030" x2="1489"><stop offset="0" stop-color="#0095ff"/><stop offset=".231" stop-color="#0279ff"/><stop offset=".325" stop-color="#6f6aff"/><stop offset=".405" stop-color="#e359ff"/><stop offset=".423" stop-color="#f5f"/><stop offset=".466" stop-color="#ff39c4"/><stop offset=".525" stop-color="#ff208f"/><stop offset=".610" stop-color="#ff0a60"/><stop offset=".686" stop-color="#ff0045"/><stop offset=".858" stop-color="#ff001f"/><stop offset="1" stop-color="#ff000d"/></linearGradient>
<linearGradient id="c191" gradientUnits="userSpaceOnUse" x1="1030" x2="1484"><stop offset="0" stop-color="#0092ff"/><stop offset=".231" stop-color="#0276ff"/><stop offset=".326" stop-color="#6d66ff"/><stop offset=".407" stop-color="#df56ff"/><stop offset=".430" stop-color="#ff50fc"/><stop offset=".474" stop-color="#ff35c2"/><stop offset=".535" stop-color="#ff1c8d"/><stop offset=".623" stop-color="#ff065e"/><stop offset=".692" stop-color="#ff0046"/><stop offset=".863" stop-color="#ff0021"/><stop offset="1" stop-color="#ff000f"/></linearGradient>
<linearGradient id="c192" gradientUnits="userSpaceOnUse" x1="1031" x2="1478"><stop offset="0" stop-color="#008fff"/><stop offset=".233" stop-color="#0373ff"/><stop offset=".331" stop-color="#7162ff"/><stop offset=".414" stop-color="#e251ff"/><stop offset=".434" stop-color="#ff4cfc"/><stop offset=".479" stop-color="#ff32c3"/><stop offset=".541" stop-color="#ff1a8e"/><stop offset=".631" stop-color="#ff055f"/><stop offset=".707" stop-color="#ff0045"/><stop offset=".886" stop-color="#ff0020"/><stop offset="1" stop-color="#f01"/></linearGradient>
<linearGradient id="c193" gradientUnits="userSpaceOnUse" x1="1032" x2="1473"><stop offset="0" stop-color="#008cff"/><stop offset=".231" stop-color="#0270ff"/><stop offset=".331" stop-color="#6f5fff"/><stop offset=".417" stop-color="#e24eff"/><stop offset=".438" stop-color="#ff48fd"/><stop offset=".483" stop-color="#ff2fc3"/><stop offset=".546" stop-color="#ff188f"/><stop offset=".637" stop-color="#ff0360"/><stop offset=".773" stop-color="#ff0037"/><stop offset=".993" stop-color="#ff0013"/><stop offset="1" stop-color="#ff0013"/></linearGradient>
<linearGradient id="c194" gradientUnits="userSpaceOnUse" x1="1032" x2="1468"><stop offset="0" stop-color="#0089ff"/><stop offset=".232" stop-color="#016dff"/><stop offset=".335" stop-color="#6f5cff"/><stop offset=".422" stop-color="#e24aff"/><stop offset=".443" stop-color="#ff44fd"/><stop offset=".489" stop-color="#ff2cc4"/><stop offset=".553" stop-color="#ff168f"/><stop offset=".644" stop-color="#ff0161"/><stop offset=".782" stop-color="#ff0037"/><stop offset="1" stop-color="#ff0014"/></linearGradient>
<linearGradient id="c195" gradientUnits="userSpaceOnUse" x1="1033" x2="1463"><stop offset="0" stop-color="#0086ff"/><stop offset=".233" stop-color="#0369ff"/><stop offset=".337" stop-color="#7058ff"/><stop offset=".426" stop-color="#e246ff"/><stop offset=".447" stop-color="#ff41fe"/><stop offset=".495" stop-color="#ff28c2"/><stop offset=".563" stop-color="#ff128d"/><stop offset=".658" stop-color="#ff005f"/><stop offset=".802" stop-color="#ff0036"/><stop offset="1" stop-color="#ff0016"/></linearGradient>
<linearGradient id="c196" gradientUnits="userSpaceOnUse" x1="1033" x2="1458"><stop offset="0" stop-color="#0083ff"/><stop offset=".233" stop-color="#0267ff"/><stop offset=".339" stop-color="#6e55ff"/><stop offset=".431" stop-color="#e242ff"/><stop offset=".452" stop-color="#ff3dfe"/><stop offset=".501" stop-color="#ff25c3"/><stop offset=".569" stop-color="#ff108e"/><stop offset=".666" stop-color="#ff005f"/><stop offset=".812" stop-color="#ff0036"/><stop offset="1" stop-color="#ff0018"/></linearGradient>
<linearGradient id="c197" gradientUnits="userSpaceOnUse" x1="1034" x2="1453"><stop offset="0" stop-color="#0080ff"/><stop offset=".232" stop-color="#0164ff"/><stop offset=".341" stop-color="#6f52ff"/><stop offset=".434" stop-color="#e23fff"/><stop offset=".456" stop-color="#ff3afe"/><stop offset=".506" stop-color="#ff23c4"/><stop offset=".575" stop-color="#ff0e8f"/><stop offset=".663" stop-color="#ff0064"/><stop offset=".807" stop-color="#ff003a"/><stop offset="1" stop-color="#ff001a"/></linearGradient>
<linearGradient id="c198" gradientUnits="userSpaceOnUse" x1="1035" x2="1448"><stop offset="0" stop-color="#007dff"/><stop offset=".232" stop-color="#0361ff"/><stop offset=".344" stop-color="#704eff"/><stop offset=".438" stop-color="#e13bff"/><stop offset=".462" stop-color="#ff35fb"/><stop offset=".513" stop-color="#ff1fc2"/><stop offset=".584" stop-color="#ff0b8e"/><stop offset=".661" stop-color="#ff0068"/><stop offset=".801" stop-color="#ff003e"/><stop offset="1" stop-color="#ff001c"/></linearGradient>
<linearGradient id="c199" gradientUnits="userSpaceOnUse" x1="1035" x2="1443"><stop offset="0" stop-color="#007aff"/><stop offset=".233" stop-color="#025eff"/><stop offset=".346" stop-color="#6e4bff"/><stop offset=".444" stop-color="#e138ff"/><stop offset=".468" stop-color="#ff31fc"/><stop offset=".520" stop-color="#ff1cc3"/><stop offset=".591" stop-color="#ff098f"/><stop offset=".662" stop-color="#ff006c"/><stop offset=".799" stop-color="#ff0041"/><stop offset="1" stop-color="#ff001f"/></linearGradient>
<linearGradient id="c200" gradientUnits="userSpaceOnUse" x1="1036" x2="1438"><stop offset="0" stop-color="#07f"/><stop offset=".231" stop-color="#015bff"/><stop offset=".348" stop-color="#6e48ff"/><stop offset=".448" stop-color="#e134ff"/><stop offset=".473" stop-color="#ff2efc"/><stop offset=".527" stop-color="#ff19c1"/><stop offset=".602" stop-color="#ff068d"/><stop offset=".667" stop-color="#ff006e"/><stop offset=".806" stop-color="#ff0043"/><stop offset="1" stop-color="#ff0021"/></linearGradient>
<linearGradient id="c201" gradientUnits="userSpaceOnUse" x1="1037" x2="1433"><stop offset="0" stop-color="#0074ff"/><stop offset=".232" stop-color="#0358ff"/><stop offset=".351" stop-color="#6f45ff"/><stop offset=".452" stop-color="#e131ff"/><stop offset=".477" stop-color="#ff2bfd"/><stop offset=".533" stop-color="#ff16c2"/><stop offset=".609" stop-color="#ff048e"/><stop offset=".694" stop-color="#ff0067"/><stop offset=".846" stop-color="#ff003d"/><stop offset="1" stop-color="#ff0023"/></linearGradient>
<linearGradient id="c202" gradientUnits="userSpaceOnUse" x1="1038" x2="1427"><stop offset="0" stop-color="#0072ff"/><stop offset=".231" stop-color="#0256ff"/><stop offset=".355" stop-color="#7042ff"/><stop offset=".458" stop-color="#e12dff"/><stop offset=".483" stop-color="#ff27fd"/><stop offset=".540" stop-color="#ff14c2"/><stop offset=".617" stop-color="#ff028e"/><stop offset=".728" stop-color="#ff0060"/><stop offset=".895" stop-color="#ff0036"/><stop offset="1" stop-color="#ff0026"/></linearGradient>
<linearGradient id="c203" gradientUnits="userSpaceOnUse" x1="1038" x2="1422"><stop offset="0" stop-color="#006fff"/><stop offset=".232" stop-color="#0153ff"/><stop offset=".357" stop-color="#6e3fff"/><stop offset=".464" stop-color="#e12aff"/><stop offset=".490" stop-color="#ff24fd"/><stop offset=".547" stop-color="#ff11c3"/><stop offset=".625" stop-color="#ff008f"/><stop offset=".737" stop-color="#ff0060"/><stop offset=".906" stop-color="#ff0037"/><stop offset="1" stop-color="#ff0028"/></linearGradient>
<linearGradient id="c204" gradientUnits="userSpaceOnUse" x1="1039" x2="1417"><stop offset="0" stop-color="#006cff"/><stop offset=".233" stop-color="#0350ff"/><stop offset=".360" stop-color="#6f3cff"/><stop offset=".468" stop-color="#e127ff"/><stop offset=".495" stop-color="#ff21fe"/><stop offset=".553" stop-color="#ff0fc4"/><stop offset=".632" stop-color="#ff0090"/><stop offset=".746" stop-color="#ff0061"/><stop offset=".918" stop-color="#ff0038"/><stop offset="1" stop-color="#ff002b"/></linearGradient>
<linearGradient id="c205" gradientUnits="userSpaceOnUse" x1="1040" x2="1412"><stop offset="0" stop-color="#0069ff"/><stop offset=".231" stop-color="#024eff"/><stop offset=".363" stop-color="#6f39ff"/><stop offset=".473" stop-color="#e124ff"/><stop offset=".500" stop-color="#ff1efe"/><stop offset=".559" stop-color="#ff0cc4"/><stop offset=".634" stop-color="#ff0093"/><stop offset=".750" stop-color="#ff0063"/><stop offset=".922" stop-color="#ff003a"/><stop offset="1" stop-color="#ff002d"/></linearGradient>
<linearGradient id="c206" gradientUnits="userSpaceOnUse" x1="1040" x2="1407"><stop offset="0" stop-color="#0067ff"/><stop offset=".232" stop-color="#014bff"/><stop offset=".365" stop-color="#6e37ff"/><stop offset=".480" stop-color="#e121ff"/><stop offset=".507" stop-color="#ff1bfe"/><stop offset=".567" stop-color="#ff0ac5"/><stop offset=".635" stop-color="#ff0098"/><stop offset=".747" stop-color="#ff0069"/><stop offset=".913" stop-color="#ff003e"/><stop offset="1" stop-color="#ff0030"/></linearGradient>
<linearGradient id="c207" gradientUnits="userSpaceOnUse" x1="1041" x2="1402"><stop offset="0" stop-color="#0064ff"/><stop offset=".233" stop-color="#0249ff"/><stop offset=".368" stop-color="#6e34ff"/><stop offset=".485" stop-color="#e01eff"/><stop offset=".515" stop-color="#ff17fc"/><stop offset=".579" stop-color="#ff06c1"/><stop offset=".637" stop-color="#ff009c"/><stop offset=".751" stop-color="#ff006b"/><stop offset=".917" stop-color="#ff0041"/><stop offset="1" stop-color="#ff0032"/></linearGradient>
<linearGradient id="c208" gradientUnits="userSpaceOnUse" x1="1042" x2="1397"><stop offset="0" stop-color="#0061ff"/><stop offset=".231" stop-color="#0246ff"/><stop offset=".372" stop-color="#6f31ff"/><stop offset=".490" stop-color="#e01bff"/><stop offset=".521" stop-color="#ff14fc"/><stop offset=".586" stop-color="#ff04c2"/><stop offset=".676" stop-color="#ff008d"/><stop offset=".806" stop-color="#ff005e"/><stop offset="1" stop-color="#ff0035"/></linearGradient>
<linearGradient id="c209" gradientUnits="userSpaceOnUse" x1="1043" x2="1392"><stop offset="0" stop-color="#005fff"/><stop offset=".232" stop-color="#0344ff"/><stop offset=".375" stop-color="#702eff"/><stop offset=".499" stop-color="#e317ff"/><stop offset=".527" stop-color="#ff11fc"/><stop offset=".593" stop-color="#ff01c3"/><stop offset=".685" stop-color="#ff008e"/><stop offset=".817" stop-color="#ff005f"/><stop offset="1" stop-color="#ff0038"/></linearGradient>
<linearGradient id="c210" gradientUnits="userSpaceOnUse" x1="1043" x2="1387"><stop offset="0" stop-color="#005cff"/><stop offset=".233" stop-color="#0241ff"/><stop offset=".378" stop-color="#6e2cff"/><stop offset=".503" stop-color="#e015ff"/><stop offset=".535" stop-color="#ff0efd"/><stop offset=".602" stop-color="#ff00c3"/><stop offset=".695" stop-color="#ff008e"/><stop offset=".828" stop-color="#ff005f"/><stop offset="1" stop-color="#ff003b"/></linearGradient>
<linearGradient id="c211" gradientUnits="userSpaceOnUse" x1="1044" x2="1382"><stop offset="0" stop-color="#0059ff"/><stop offset=".231" stop-color="#023fff"/><stop offset=".382" stop-color="#6f29ff"/><stop offset=".509" stop-color="#e012ff"/><stop offset=".541" stop-color="#ff0bfd"/><stop offset=".609" stop-color="#ff00c4"/><stop offset=".704" stop-color="#ff008f"/><stop offset=".840" stop-color="#ff0060"/><stop offset="1" stop-color="#ff003e"/></linearGradient>
<linearGradient id="c212" gradientUnits="userSpaceOnUse" x1="1045" x2="1376"><stop offset="0" stop-color="#0057ff"/><stop offset=".233" stop-color="#033cff"/><stop offset=".387" stop-color="#6f26ff"/><stop offset=".520" stop-color="#e30eff"/><stop offset=".550" stop-color="#ff08fd"/><stop offset=".610" stop-color="#ff00cb"/><stop offset=".704" stop-color="#ff0095"/><stop offset=".837" stop-color="#f06"/><stop offset="1" stop-color="#ff0042"/></linearGradient>
<linearGradient id="c213" gradientUnits="userSpaceOnUse" x1="1046" x2="1371"><stop offset="0" stop-color="#0054ff"/><stop offset=".231" stop-color="#023aff"/><stop offset=".391" stop-color="#7023ff"/><stop offset=".526" stop-color="#e30bff"/><stop offset=".557" stop-color="#ff05fe"/><stop offset=".615" stop-color="#ff00cd"/><stop offset=".711" stop-color="#ff0097"/><stop offset=".846" stop-color="#ff0067"/><stop offset="1" stop-color="#ff0045"/></linearGradient>
<linearGradient id="c214" gradientUnits="userSpaceOnUse" x1="1047" x2="1366"><stop offset="0" stop-color="#0051ff"/><stop offset=".229" stop-color="#0238ff"/><stop offset=".392" stop-color="#6e21ff"/><stop offset=".530" stop-color="#e009ff"/><stop offset=".564" stop-color="#ff02fe"/><stop offset=".639" stop-color="#ff00c3"/><stop offset=".743" stop-color="#ff008f"/><stop offset=".890" stop-color="#ff0060"/><stop offset="1" stop-color="#ff0049"/></linearGradient>
<linearGradient id="c215" gradientUnits="userSpaceOnUse" x1="1047" x2="1361"><stop offset="0" stop-color="#004fff"/><stop offset=".232" stop-color="#0336ff"/><stop offset=".398" stop-color="#6f1fff"/><stop offset=".541" stop-color="#e206ff"/><stop offset=".576" stop-color="#ff00fb"/><stop offset=".653" stop-color="#ff00c2"/><stop offset=".758" stop-color="#ff008e"/><stop offset=".911" stop-color="#ff005f"/><stop offset="1" stop-color="#ff004c"/></linearGradient>
<linearGradient id="c216" gradientUnits="userSpaceOnUse" x1="1048" x2="1356"><stop offset="0" stop-color="#004dff"/><stop offset=".231" stop-color="#0234ff"/><stop offset=".403" stop-color="#701cff"/><stop offset=".549" stop-color="#e203ff"/><stop offset=".584" stop-color="#ff00fc"/><stop offset=".662" stop-color="#ff00c3"/><stop offset=".773" stop-color="#ff008d"/><stop offset=".929" stop-color="#ff005f"/><stop offset="1" stop-color="#ff0050"/></linearGradient>
<linearGradient id="c217" gradientUnits="userSpaceOnUse" x1="1049" x2="1351"><stop offset="0" stop-color="#004aff"/><stop offset=".228" stop-color="#0132ff"/><stop offset=".404" stop-color="#6e1aff"/><stop offset=".553" stop-color="#df01ff"/><stop offset=".593" stop-color="#ff00fc"/><stop offset=".675" stop-color="#ff00c1"/><stop offset=".788" stop-color="#ff008d"/><stop offset=".950" stop-color="#ff005e"/><stop offset="1" stop-color="#ff0054"/></linearGradient>
<linearGradient id="c218" gradientUnits="userSpaceOnUse" x1="1050" x2="1346"><stop offset="0" stop-color="#0047ff"/><stop offset=".230" stop-color="#032fff"/><stop offset=".409" stop-color="#6f17ff"/><stop offset=".564" stop-color="#e200ff"/><stop offset=".601" stop-color="#ff00fc"/><stop offset=".686" stop-color="#ff00c2"/><stop offset=".801" stop-color="#ff008d"/><stop offset=".966" stop-color="#ff005f"/><stop offset="1" stop-color="#ff0058"/></linearGradient>
<linearGradient id="c219" gradientUnits="userSpaceOnUse" x1="1051" x2="1341"><stop offset="0" stop-color="#0045ff"/><stop offset=".228" stop-color="#022dff"/><stop offset=".414" stop-color="#6f15ff"/><stop offset=".566" stop-color="#dc00ff"/><stop offset=".610" stop-color="#ff00fd"/><stop offset=".697" stop-color="#ff00c2"/><stop offset=".814" stop-color="#ff008e"/><stop offset=".983" stop-color="#ff005f"/><stop offset="1" stop-color="#ff005c"/></linearGradient>
<linearGradient id="c220" gradientUnits="userSpaceOnUse" x1="1052" x2="1336"><stop offset="0" stop-color="#0042ff"/><stop offset=".225" stop-color="#012bff"/><stop offset=".415" stop-color="#6e13ff"/><stop offset=".560" stop-color="#d200ff"/><stop offset=".620" stop-color="#ff00fd"/><stop offset=".708" stop-color="#ff00c3"/><stop offset=".827" stop-color="#ff008f"/><stop offset="1" stop-color="#ff0060"/></linearGradient>
<linearGradient id="c221" gradientUnits="userSpaceOnUse" x1="1053" x2="1330"><stop offset="0" stop-color="#0040ff"/><stop offset=".227" stop-color="#0329ff"/><stop offset=".426" stop-color="#7010ff"/><stop offset=".556" stop-color="#c700ff"/><stop offset=".632" stop-color="#ff00fd"/><stop offset=".722" stop-color="#ff00c3"/><stop offset=".848" stop-color="#ff008e"/><stop offset="1" stop-color="#ff0065"/></linearGradient>
<linearGradient id="c222" gradientUnits="userSpaceOnUse" x1="1053" x2="1325"><stop offset="0" stop-color="#003eff"/><stop offset=".228" stop-color="#0227ff"/><stop offset=".430" stop-color="#6f0eff"/><stop offset=".551" stop-color="#bd00ff"/><stop offset=".643" stop-color="#ff00fe"/><stop offset=".735" stop-color="#ff00c4"/><stop offset=".864" stop-color="#ff008f"/><stop offset="1" stop-color="#ff006a"/></linearGradient>
<linearGradient id="c223" gradientUnits="userSpaceOnUse" x1="1054" x2="1320"><stop offset="0" stop-color="#003bff"/><stop offset=".226" stop-color="#0125ff"/><stop offset=".432" stop-color="#6d0cff"/><stop offset=".545" stop-color="#b300ff"/><stop offset=".654" stop-color="#ff00fe"/><stop offset=".748" stop-color="#ff00c4"/><stop offset=".880" stop-color="#ff008f"/><stop offset="1" stop-color="#ff006f"/></linearGradient>
<linearGradient id="c224" gradientUnits="userSpaceOnUse" x1="1055" x2="1315"><stop offset="0" stop-color="#0039ff"/><stop offset=".227" stop-color="#0223ff"/><stop offset=".442" stop-color="#7009ff"/><stop offset=".542" stop-color="#ac00ff"/><stop offset=".665" stop-color="#ff00fe"/><stop offset=".762" stop-color="#ff00c5"/><stop offset=".896" stop-color="#ff0090"/><stop offset="1" stop-color="#ff0074"/></linearGradient>
<linearGradient id="c225" gradientUnits="userSpaceOnUse" x1="1056" x2="1310"><stop offset="0" stop-color="#0036ff"/><stop offset=".224" stop-color="#0221ff"/><stop offset=".445" stop-color="#6e08ff"/><stop offset=".539" stop-color="#a500ff"/><stop offset=".681" stop-color="#ff00fc"/><stop offset=".783" stop-color="#ff00c2"/><stop offset=".925" stop-color="#ff008d"/><stop offset="1" stop-color="#ff0079"/></linearGradient>
<linearGradient id="c226" gradientUnits="userSpaceOnUse" x1="1057" x2="1305"><stop offset="0" stop-color="#0034ff"/><stop offset=".226" stop-color="#031fff"/><stop offset=".452" stop-color="#6f05ff"/><stop offset=".548" stop-color="#a500ff"/><stop offset=".694" stop-color="#ff00fc"/><stop offset=".798" stop-color="#ff00c2"/><stop offset=".944" stop-color="#ff008e"/><stop offset="1" stop-color="#ff007f"/></linearGradient>
<linearGradient id="c227" gradientUnits="userSpaceOnUse" x1="1058" x2="1300"><stop offset="0" stop-color="#0031ff"/><stop offset=".223" stop-color="#021dff"/><stop offset=".459" stop-color="#7003ff"/><stop offset=".657" stop-color="#e100ff"/><stop offset=".707" stop-color="#ff00fd"/><stop offset=".814" stop-color="#ff00c3"/><stop offset=".963" stop-color="#ff008e"/><stop offset="1" stop-color="#ff0084"/></linearGradient>
<linearGradient id="c228" gradientUnits="userSpaceOnUse" x1="1059" x2="1295"><stop offset="0" stop-color="#002fff"/><stop offset=".220" stop-color="#021bff"/><stop offset=".462" stop-color="#6e01ff"/><stop offset=".669" stop-color="#e100ff"/><stop offset=".720" stop-color="#ff00fd"/><stop offset=".831" stop-color="#ff00c3"/><stop offset=".983" stop-color="#ff008f"/><stop offset="1" stop-color="#ff008a"/></linearGradient>
<linearGradient id="c229" gradientUnits="userSpaceOnUse" x1="1060" x2="1290"><stop offset="0" stop-color="#002dff"/><stop offset=".222" stop-color="#0319ff"/><stop offset=".474" stop-color="#7100ff"/><stop offset=".687" stop-color="#e400ff"/><stop offset=".735" stop-color="#ff00fd"/><stop offset=".848" stop-color="#ff00c4"/><stop offset="1" stop-color="#ff0091"/></linearGradient>
<linearGradient id="c230" gradientUnits="userSpaceOnUse" x1="1061" x2="1285"><stop offset="0" stop-color="#002aff"/><stop offset=".219" stop-color="#0218ff"/><stop offset=".478" stop-color="#6f00ff"/><stop offset=".696" stop-color="#e100ff"/><stop offset=".750" stop-color="#ff00fe"/><stop offset=".871" stop-color="#ff00c3"/><stop offset="1" stop-color="#ff0097"/></linearGradient>
<linearGradient id="c231" gradientUnits="userSpaceOnUse" x1="1062" x2="1279"><stop offset="0" stop-color="#0028ff"/><stop offset=".217" stop-color="#0216ff"/><stop offset=".475" stop-color="#6a00ff"/><stop offset=".705" stop-color="#dc00ff"/><stop offset=".770" stop-color="#ff00fe"/><stop offset=".894" stop-color="#ff00c3"/><stop offset="1" stop-color="#ff00a0"/></linearGradient>
<linearGradient id="c232" gradientUnits="userSpaceOnUse" x1="1063" x2="1274"><stop offset="0" stop-color="#0026ff"/><stop offset=".218" stop-color="#0314ff"/><stop offset=".464" stop-color="#6200ff"/><stop offset=".706" stop-color="#d400ff"/><stop offset=".787" stop-color="#ff00fe"/><stop offset=".915" stop-color="#ff00c4"/><stop offset="1" stop-color="#ff00a7"/></linearGradient>
<linearGradient id="c233" gradientUnits="userSpaceOnUse" x1="1063" x2="1269"><stop offset="0" stop-color="#0024ff"/><stop offset=".218" stop-color="#0212ff"/><stop offset=".456" stop-color="#5b00ff"/><stop offset=".709" stop-color="#cd00ff"/><stop offset=".811" stop-color="#ff00fc"/><stop offset=".942" stop-color="#ff00c2"/><stop offset="1" stop-color="#ff00af"/></linearGradient>
<linearGradient id="c234" gradientUnits="userSpaceOnUse" x1="1064" x2="1264"><stop offset="0" stop-color="#0021ff"/><stop offset=".215" stop-color="#0211ff"/><stop offset=".445" stop-color="#5400ff"/><stop offset=".710" stop-color="#c600ff"/><stop offset=".830" stop-color="#ff00fc"/><stop offset=".965" stop-color="#ff00c3"/><stop offset="1" stop-color="#ff00b7"/></linearGradient>
<linearGradient id="c235" gradientUnits="userSpaceOnUse" x1="1065" x2="1259"><stop offset="0" stop-color="#001fff"/><stop offset=".216" stop-color="#030fff"/><stop offset=".433" stop-color="#4d00ff"/><stop offset=".711" stop-color="#bf00ff"/><stop offset=".851" stop-color="#ff00fc"/><stop offset=".995" stop-color="#ff00c2"/><stop offset="1" stop-color="#ff00c0"/></linearGradient>
<linearGradient id="c236" gradientUnits="userSpaceOnUse" x1="1067" x2="1254"><stop offset="0" stop-color="#001cff"/><stop offset=".209" stop-color="#020dff"/><stop offset=".417" stop-color="#4600ff"/><stop offset=".706" stop-color="#b500ff"/><stop offset=".872" stop-color="#ff00fd"/><stop offset="1" stop-color="#ff00c9"/></linearGradient>
<linearGradient id="c237" gradientUnits="userSpaceOnUse" x1="1068" x2="1249"><stop offset="0" stop-color="#001aff"/><stop offset=".204" stop-color="#020cff"/><stop offset=".403" stop-color="#3f00ff"/><stop offset=".707" stop-color="#af00ff"/><stop offset=".895" stop-color="#ff00fd"/><stop offset="1" stop-color="#ff00d3"/></linearGradient>
<linearGradient id="c238" gradientUnits="userSpaceOnUse" x1="1069" x2="1244"><stop offset="0" stop-color="#0018ff"/><stop offset=".206" stop-color="#030aff"/><stop offset=".394" stop-color="#3b00ff"/><stop offset=".714" stop-color="#ab00ff"/><stop offset=".920" stop-color="#ff00fd"/><stop offset="1" stop-color="#f0d"/></linearGradient>
<linearGradient id="c239" gradientUnits="userSpaceOnUse" x1="1070" x2="1239"><stop offset="0" stop-color="#0016ff"/><stop offset=".201" stop-color="#0208ff"/><stop offset=".379" stop-color="#3400ff"/><stop offset=".716" stop-color="#a400ff"/><stop offset=".947" stop-color="#ff00fe"/><stop offset="1" stop-color="#ff00e8"/></linearGradient>
<linearGradient id="c240" gradientUnits="userSpaceOnUse" x1="1071" x2="1234"><stop offset="0" stop-color="#0013ff"/><stop offset=".202" stop-color="#0306ff"/><stop offset=".374" stop-color="#3200ff"/><stop offset=".724" stop-color="#a000ff"/><stop offset=".975" stop-color="#ff00fe"/><stop offset="1" stop-color="#ff00f4"/></linearGradient>
<linearGradient id="c241" gradientUnits="userSpaceOnUse" x1="1072" x2="1228"><stop offset="0" stop-color="#01f"/><stop offset=".199" stop-color="#0305ff"/><stop offset=".391" stop-color="#3400ff"/><stop offset=".763" stop-color="#a500ff"/><stop offset="1" stop-color="#fb00ff"/></linearGradient>
<linearGradient id="c242" gradientUnits="userSpaceOnUse" x1="1073" x2="1223"><stop offset="0" stop-color="#000fff"/><stop offset=".193" stop-color="#0204ff"/><stop offset=".567" stop-color="#6200ff"/><stop offset=".927" stop-color="#d400ff"/><stop offset="1" stop-color="#e0f"/></linearGradient>
<linearGradient id="c243" gradientUnits="userSpaceOnUse" x1="1074" x2="1218"><stop offset="0" stop-color="#000dff"/><stop offset=".194" stop-color="#0302ff"/><stop offset=".632" stop-color="#7000ff"/><stop offset="1" stop-color="#e200ff"/></linearGradient>
<linearGradient id="c244" gradientUnits="userSpaceOnUse" x1="1076" x2="1213"><stop offset="0" stop-color="#000aff"/><stop offset=".182" stop-color="#0200ff"/><stop offset=".642" stop-color="#6f00ff"/><stop offset="1" stop-color="#d600ff"/></linearGradient>
<linearGradient id="c245" gradientUnits="userSpaceOnUse" x1="1077" x2="1208"><stop offset="0" stop-color="#0008ff"/><stop offset=".176" stop-color="#0200ff"/><stop offset=".664" stop-color="#7000ff"/><stop offset="1" stop-color="#cb00ff"/></linearGradient>
<linearGradient id="c246" gradientUnits="userSpaceOnUse" x1="1078" x2="1203"><stop offset="0" stop-color="#0006ff"/><stop offset=".176" stop-color="#0300ff"/><stop offset=".688" stop-color="#7000ff"/><stop offset="1" stop-color="#c000ff"/></linearGradient>
<linearGradient id="c247" gradientUnits="userSpaceOnUse" x1="1080" x2="1198"><stop offset="0" stop-color="#0004ff"/><stop offset=".161" stop-color="#0200ff"/><stop offset=".703" stop-color="#6f00ff"/><stop offset="1" stop-color="#b500ff"/></linearGradient>
<linearGradient id="c248" gradientUnits="userSpaceOnUse" x1="1081" x2="1193"><stop offset="0" stop-color="#0001ff"/><stop offset=".161" stop-color="#0300ff"/><stop offset=".741" stop-color="#7100ff"/><stop offset="1" stop-color="#ab00ff"/></linearGradient>
<linearGradient id="c249" gradientUnits="userSpaceOnUse" x1="1083" x2="1188"><stop offset="0" stop-color="#00f"/><stop offset=".143" stop-color="#0300ff"/><stop offset=".762" stop-color="#7000ff"/><stop offset="1" stop-color="#a100ff"/></linearGradient>
<linearGradient id="c250" gradientUnits="userSpaceOnUse" x1="1084" x2="1182"><stop offset="0" stop-color="#00f"/><stop offset=".143" stop-color="#0400ff"/><stop offset=".806" stop-color="#7000ff"/><stop offset="1" stop-color="#9500ff"/></linearGradient>
<linearGradient id="c251" gradientUnits="userSpaceOnUse" x1="1086" x2="1177"><stop offset="0" stop-color="#00f"/><stop offset=".121" stop-color="#0300ff"/><stop offset=".846" stop-color="#7100ff"/><stop offset="1" stop-color="#8b00ff"/></linearGradient>
<linearGradient id="c252" gradientUnits="userSpaceOnUse" x1="1087" x2="1172"><stop offset="0" stop-color="#00f"/><stop offset=".118" stop-color="#0400ff"/><stop offset=".894" stop-color="#7100ff"/><stop offset="1" stop-color="#8200ff"/></linearGradient>
<linearGradient id="c253" gradientUnits="userSpaceOnUse" x1="1089" x2="1167"><stop offset="0" stop-color="#00f"/><stop offset=".115" stop-color="#0700ff"/><stop offset=".962" stop-color="#7400ff"/><stop offset="1" stop-color="#7900ff"/></linearGradient>
<linearGradient id="c254" gradientUnits="userSpaceOnUse" x1="1091" x2="1162"><stop offset="0" stop-color="#00f"/><stop offset=".662" stop-color="#4700ff"/><stop offset="1" stop-color="#7000ff"/></linearGradient>
<linearGradient id="c255" gradientUnits="userSpaceOnUse" x1="1094" x2="1157"><stop offset="0" stop-color="#0300ff"/><stop offset="1" stop-color="#6800ff"/></linearGradient>
<linearGradient id="c256" gradientUnits="userSpaceOnUse" x1="1096" x2="1152"><stop offset="0" stop-color="#0700ff"/><stop offset="1" stop-color="#6000ff"/></linearGradient>
<linearGradient id="c257" gradientUnits="userSpaceOnUse" x1="1098" x2="1147"><stop offset="0" stop-color="#0a00ff"/><stop offset="1" stop-color="#5800ff"/></linearGradient>
<linearGradient id="c258" gradientUnits="userSpaceOnUse" x1="1101" x2="1142"><stop offset="0" stop-color="#1000ff"/><stop offset="1" stop-color="#5000ff"/></linearGradient>
<linearGradient id="c259" gradientUnits="userSpaceOnUse" x1="1104" x2="1137"><stop offset="0" stop-color="#1500ff"/><stop offset="1" stop-color="#4800ff"/></linearGradient>
<linearGradient id="c260" gradientUnits="userSpaceOnUse" x1="1106" x2="1131"><stop offset="0" stop-color="#1900ff"/><stop offset="1" stop-color="#3f00ff"/></linearGradient>
<linearGradient id="c261" gradientUnits="userSpaceOnUse" x1="1109" x2="1126"><stop offset="0" stop-color="#1e00ff"/><stop offset="1" stop-color="#3800ff"/></linearGradient>
<linearGradient id="c262" gradientUnits="userSpaceOnUse" x1="1112" x2="1121"><stop offset="0" stop-color="#2300ff"/><stop offset="1" stop-color="#3100ff"/></linearGradient>
<linearGradient id="i0" gradientUnits="userSpaceOnUse" x1="1397" x2="1609"><stop offset="0" stop-color="#8bffcf"/><stop offset=".731" stop-color="#f5ffcb"/><stop offset=".816" stop-color="#fffcc8"/><stop offset="1" stop-color="#ffe1b1"/></linearGradient>
<linearGradient id="i1" gradientUnits="userSpaceOnUse" x1="1397" x2="1609"><stop offset="0" stop-color="#8bffd0"/><stop offset=".731" stop-color="#f6ffcc"/><stop offset=".807" stop-color="#fffcc9"/><stop offset="1" stop-color="#ffe0b1"/></linearGradient>
<linearGradient id="i2" gradientUnits="userSpaceOnUse" x1="1397" x2="1609"><stop offset="0" stop-color="#8cffd1"/><stop offset=".726" stop-color="#f6ffcd"/><stop offset=".802" stop-color="#fffcca"/><stop offset="1" stop-color="#ffdfb2"/></linearGradient>
<linearGradient id="i3" gradientUnits="userSpaceOnUse" x1="1397" x2="1609"><stop offset="0" stop-color="#8dffd2"/><stop offset=".726" stop-color="#f7ffce"/><stop offset=".797" stop-color="#fffccb"/><stop offset="1" stop-color="#ffdeb2"/></linearGradient>
<linearGradient id="i4" gradientUnits="userSpaceOnUse" x1="1397" x2="1609"><stop offset="0" stop-color="#8dffd3"/><stop offset=".722" stop-color="#f7ffcf"/><stop offset=".792" stop-color="#fffbcb"/><stop offset="1" stop-color="#ffddb2"/></linearGradient>
<linearGradient id="i5" gradientUnits="userSpaceOnUse" x1="1397" x2="1609"><stop offset="0" stop-color="#8effd4"/><stop offset=".722" stop-color="#f8ffd0"/><stop offset=".788" stop-color="#fffbcc"/><stop offset="1" stop-color="#ffddb2"/></linearGradient>
<linearGradient id="i6" gradientUnits="userSpaceOnUse" x1="1397" x2="1609"><stop offset="0" stop-color="#8effd5"/><stop offset=".722" stop-color="#f9ffd1"/><stop offset=".783" stop-color="#fffbcd"/><stop offset="1" stop-color="#ffdcb2"/></linearGradient>
<linearGradient id="i7" gradientUnits="userSpaceOnUse" x1="1397" x2="1609"><stop offset="0" stop-color="#8fffd5"/><stop offset=".717" stop-color="#f9ffd2"/><stop offset=".778" stop-color="#fffbce"/><stop offset="1" stop-color="#ffdbb2"/></linearGradient>
<linearGradient id="i8" gradientUnits="userSpaceOnUse" x1="1397" x2="1609"><stop offset="0" stop-color="#90ffd6"/><stop offset=".717" stop-color="#faffd3"/><stop offset=".778" stop-color="#ffface"/><stop offset="1" stop-color="#ffdab3"/></linearGradient>
<linearGradient id="i9" gradientUnits="userSpaceOnUse" x1="1397" x2="1609"><stop offset="0" stop-color="#90ffd7"/><stop offset=".712" stop-color="#faffd4"/><stop offset=".774" stop-color="#fffacf"/><stop offset="1" stop-color="#ffd9b3"/></linearGradient>
<linearGradient id="i10" gradientUnits="userSpaceOnUse" x1="1397" x2="1609"><stop offset="0" stop-color="#91ffd8"/><stop offset=".712" stop-color="#fbffd5"/><stop offset=".792" stop-color="#fff6cc"/><stop offset="1" stop-color="#ffd8b3"/></linearGradient>
<linearGradient id="i11" gradientUnits="userSpaceOnUse" x1="1397" x2="1609"><stop offset="0" stop-color="#92ffd9"/><stop offset=".712" stop-color="#fcffd6"/><stop offset="1" stop-color="#ffd7b3"/></linearGradient>
<linearGradient id="i12" gradientUnits="userSpaceOnUse" x1="1397" x2="1609"><stop offset="0" stop-color="#92ffda"/><stop offset=".708" stop-color="#fdffd7"/><stop offset="1" stop-color="#ffd7b3"/></linearGradient>
<linearGradient id="i13" gradientUnits="userSpaceOnUse" x1="1397" x2="1609"><stop offset="0" stop-color="#93ffdb"/><stop offset=".708" stop-color="#feffd8"/><stop offset="1" stop-color="#ffd6b3"/></linearGradient>
<linearGradient id="i14" gradientUnits="userSpaceOnUse" x1="1397" x2="1609"><stop offset="0" stop-color="#94ffdc"/><stop offset=".722" stop-color="#fffdd7"/><stop offset="1" stop-color="#ffd5b4"/></linearGradient>
<linearGradient id="i15" gradientUnits="userSpaceOnUse" x1="1397" x2="1609"><stop offset="0" stop-color="#95ffdd"/><stop offset=".717" stop-color="#fffdd7"/><stop offset="1" stop-color="#ffd4b4"/></linearGradient>
<linearGradient id="i16" gradientUnits="userSpaceOnUse" x1="1397" x2="1609"><stop offset="0" stop-color="#95ffde"/><stop offset=".708" stop-color="#fffdd9"/><stop offset="1" stop-color="#ffd3b4"/></linearGradient>
<linearGradient id="i17" gradientUnits="userSpaceOnUse" x1="1397" x2="1609"><stop offset="0" stop-color="#96ffdf"/><stop offset=".703" stop-color="#fffdda"/><stop offset="1" stop-color="#ffd2b4"/></linearGradient>
<linearGradient id="i18" gradientUnits="userSpaceOnUse" x1="1397" x2="1609"><stop offset="0" stop-color="#97ffdf"/><stop offset=".698" stop-color="#fffddb"/><stop offset="1" stop-color="#ffd2b4"/></linearGradient>
<linearGradient id="i19" gradientUnits="userSpaceOnUse" x1="1397" x2="1609"><stop offset="0" stop-color="#97ffe0"/><stop offset=".693" stop-color="#fffcdb"/><stop offset="1" stop-color="#ffd1b4"/></linearGradient>
<linearGradient id="i20" gradientUnits="userSpaceOnUse" x1="1397" x2="1609"><stop offset="0" stop-color="#98ffe1"/><stop offset=".684" stop-color="#fffddd"/><stop offset="1" stop-color="#ffd0b5"/></linearGradient>
<linearGradient id="i21" gradientUnits="userSpaceOnUse" x1="1397" x2="1609"><stop offset="0" stop-color="#99ffe2"/><stop offset=".679" stop-color="#fffdde"/><stop offset="1" stop-color="#ffcfb5"/></linearGradient>
<linearGradient id="i22" gradientUnits="userSpaceOnUse" x1="1397" x2="1609"><stop offset="0" stop-color="#99ffe3"/><stop offset=".675" stop-color="#fffddf"/><stop offset="1" stop-color="#ffceb5"/></linearGradient>
<linearGradient id="i23" gradientUnits="userSpaceOnUse" x1="1397" x2="1609"><stop offset="0" stop-color="#9affe4"/><stop offset=".665" stop-color="#fffde0"/><stop offset="1" stop-color="#ffceb5"/></linearGradient>
<linearGradient id="i24" gradientUnits="userSpaceOnUse" x1="1397" x2="1609"><stop offset="0" stop-color="#9bffe5"/><stop offset=".660" stop-color="#fffde1"/><stop offset="1" stop-color="#ffcdb5"/></linearGradient>
<linearGradient id="i25" gradientUnits="userSpaceOnUse" x1="1397" x2="1609"><stop offset="0" stop-color="#9cffe6"/><stop offset=".656" stop-color="#fffde2"/><stop offset="1" stop-color="#ffccb5"/></linearGradient>
<linearGradient id="i26" gradientUnits="userSpaceOnUse" x1="1397" x2="1609"><stop offset="0" stop-color="#9cffe7"/><stop offset=".646" stop-color="#fffde3"/><stop offset="1" stop-color="#ffcbb5"/></linearGradient>
<linearGradient id="i27" gradientUnits="userSpaceOnUse" x1="1397" x2="1609"><stop offset="0" stop-color="#9dffe8"/><stop offset=".642" stop-color="#fffde4"/><stop offset="1" stop-color="#ffcab6"/></linearGradient>
<linearGradient id="i28" gradientUnits="userSpaceOnUse" x1="1397" x2="1609"><stop offset="0" stop-color="#9effe9"/><stop offset=".637" stop-color="#fffde5"/><stop offset="1" stop-color="#ffc9b6"/></linearGradient>
<linearGradient id="i29" gradientUnits="userSpaceOnUse" x1="1397" x2="1609"><stop offset="0" stop-color="#9effea"/><stop offset=".627" stop-color="#fffde7"/><stop offset="1" stop-color="#ffc9b6"/></linearGradient>
<linearGradient id="i30" gradientUnits="userSpaceOnUse" x1="1397" x2="1609"><stop offset="0" stop-color="#9fffeb"/><stop offset=".623" stop-color="#fffde8"/><stop offset="1" stop-color="#ffc8b6"/></linearGradient>
<linearGradient id="i31" gradientUnits="userSpaceOnUse" x1="1397" x2="1609"><stop offset="0" stop-color="#a0ffec"/><stop offset=".618" stop-color="#fffde8"/><stop offset="1" stop-color="#ffc7b6"/></linearGradient>
<linearGradient id="i32" gradientUnits="userSpaceOnUse" x1="1397" x2="1609"><stop offset="0" stop-color="#a1ffed"/><stop offset=".608" stop-color="#fffdea"/><stop offset=".991" stop-color="#ffc7b7"/><stop offset="1" stop-color="#ffc6b6"/></linearGradient>
<linearGradient id="i33" gradientUnits="userSpaceOnUse" x1="1397" x2="1609"><stop offset="0" stop-color="#a1ffee"/><stop offset=".604" stop-color="#fffdeb"/><stop offset=".986" stop-color="#ffc7b8"/><stop offset="1" stop-color="#ffc5b7"/></linearGradient>
<linearGradient id="i34" gradientUnits="userSpaceOnUse" x1="1397" x2="1609"><stop offset="0" stop-color="#a2ffef"/><stop offset=".599" stop-color="#fffdec"/><stop offset=".981" stop-color="#ffc7b9"/><stop offset="1" stop-color="#ffc5b7"/></linearGradient>
<linearGradient id="i35" gradientUnits="userSpaceOnUse" x1="1397" x2="1609"><stop offset="0" stop-color="#a3fff0"/><stop offset=".594" stop-color="#fffced"/><stop offset=".976" stop-color="#ffc7ba"/><stop offset="1" stop-color="#ffc4b7"/></linearGradient>
<linearGradient id="i36" gradientUnits="userSpaceOnUse" x1="1397" x2="1609"><stop offset="0" stop-color="#a4fff1"/><stop offset=".585" stop-color="#fffdee"/><stop offset=".967" stop-color="#ffc7bb"/><stop offset="1" stop-color="#ffc3b7"/></linearGradient>
<linearGradient id="i37" gradientUnits="userSpaceOnUse" x1="1397" x2="1609"><stop offset="0" stop-color="#a4fff2"/><stop offset=".580" stop-color="#fffdef"/><stop offset=".962" stop-color="#ffc7bb"/><stop offset="1" stop-color="#ffc2b7"/></linearGradient>
<linearGradient id="i38" gradientUnits="userSpaceOnUse" x1="1397" x2="1609"><stop offset="0" stop-color="#a5fff3"/><stop offset=".575" stop-color="#fffdf0"/><stop offset=".958" stop-color="#ffc6bc"/><stop offset="1" stop-color="#ffc1b7"/></linearGradient>
<linearGradient id="i39" gradientUnits="userSpaceOnUse" x1="1397" x2="1609"><stop offset="0" stop-color="#a6fff4"/><stop offset=".566" stop-color="#fffdf2"/><stop offset=".943" stop-color="#ffc7be"/><stop offset="1" stop-color="#ffc1b8"/></linearGradient>
<linearGradient id="i40" gradientUnits="userSpaceOnUse" x1="1397" x2="1609"><stop offset="0" stop-color="#a7fff5"/><stop offset=".561" stop-color="#fffdf3"/><stop offset=".939" stop-color="#ffc7bf"/><stop offset="1" stop-color="#ffc0b8"/></linearGradient>
<linearGradient id="i41" gradientUnits="userSpaceOnUse" x1="1397" x2="1609"><stop offset="0" stop-color="#a7fff6"/><stop offset=".557" stop-color="#fffdf3"/><stop offset=".934" stop-color="#ffc7bf"/><stop offset="1" stop-color="#ffbfb8"/></linearGradient>
<linearGradient id="i42" gradientUnits="userSpaceOnUse" x1="1397" x2="1609"><stop offset="0" stop-color="#a8fff7"/><stop offset=".547" stop-color="#fffdf5"/><stop offset=".925" stop-color="#ffc7c0"/><stop offset="1" stop-color="#ffbeb8"/></linearGradient>
<linearGradient id="i43" gradientUnits="userSpaceOnUse" x1="1397" x2="1609"><stop offset="0" stop-color="#a9fff8"/><stop offset=".542" stop-color="#fffdf6"/><stop offset=".920" stop-color="#ffc7c1"/><stop offset="1" stop-color="#ffbeb8"/></linearGradient>
<linearGradient id="i44" gradientUnits="userSpaceOnUse" x1="1397" x2="1609"><stop offset="0" stop-color="#aafff9"/><stop offset=".538" stop-color="#fffdf7"/><stop offset=".915" stop-color="#ffc7c2"/><stop offset="1" stop-color="#ffbdb8"/></linearGradient>
<linearGradient id="i45" gradientUnits="userSpaceOnUse" x1="1397" x2="1609"><stop offset="0" stop-color="#abfffb"/><stop offset=".528" stop-color="#fffdf9"/><stop offset=".901" stop-color="#ffc7c4"/><stop offset="1" stop-color="#ffbcb8"/></linearGradient>
<linearGradient id="i46" gradientUnits="userSpaceOnUse" x1="1397" x2="1609"><stop offset="0" stop-color="#abfffc"/><stop offset=".524" stop-color="#fffdfa"/><stop offset=".896" stop-color="#ffc7c4"/><stop offset="1" stop-color="#ffbbb9"/></linearGradient>
<linearGradient id="i47" gradientUnits="userSpaceOnUse" x1="1397" x2="1609"><stop offset="0" stop-color="#acfffd"/><stop offset=".519" stop-color="#fffdfa"/><stop offset=".892" stop-color="#ffc7c5"/><stop offset="1" stop-color="#ffbab9"/></linearGradient>
<linearGradient id="i48" gradientUnits="userSpaceOnUse" x1="1397" x2="1609"><stop offset="0" stop-color="#adfffe"/><stop offset=".514" stop-color="#fffcfb"/><stop offset=".887" stop-color="#ffc7c6"/><stop offset="1" stop-color="#ffbab9"/></linearGradient>
<linearGradient id="i49" gradientUnits="userSpaceOnUse" x1="1397" x2="1609"><stop offset="0" stop-color="#aeffff"/><stop offset=".505" stop-color="#fffdfd"/><stop offset=".877" stop-color="#ffc7c7"/><stop offset="1" stop-color="#ffb9b9"/></linearGradient>
<linearGradient id="i50" gradientUnits="userSpaceOnUse" x1="1397" x2="1609"><stop offset="0" stop-color="#aefeff"/><stop offset=".505" stop-color="#fffcfd"/><stop offset=".877" stop-color="#ffc6c7"/><stop offset="1" stop-color="#ffb8b9"/></linearGradient>
<linearGradient id="i51" gradientUnits="userSpaceOnUse" x1="1397" x2="1609"><stop offset="0" stop-color="#aefdff"/><stop offset=".505" stop-color="#fffbfd"/><stop offset=".877" stop-color="#ffc5c7"/><stop offset="1" stop-color="#ffb7b9"/></linearGradient>
<linearGradient id="i52" gradientUnits="userSpaceOnUse" x1="1397" x2="1609"><stop offset="0" stop-color="#aefcff"/><stop offset=".509" stop-color="#fff9fc"/><stop offset=".887" stop-color="#ffc3c6"/><stop offset="1" stop-color="#ffb7ba"/></linearGradient>
<linearGradient id="i53" gradientUnits="userSpaceOnUse" x1="1397" x2="1609"><stop offset="0" stop-color="#aefbff"/><stop offset=".509" stop-color="#fff8fd"/><stop offset=".887" stop-color="#ffc2c6"/><stop offset="1" stop-color="#ffb6ba"/></linearGradient>
<linearGradient id="i54" gradientUnits="userSpaceOnUse" x1="1397" x2="1609"><stop offset="0" stop-color="#aefaff"/><stop offset=".509" stop-color="#fff7fd"/><stop offset=".887" stop-color="#ffc2c7"/><stop offset="1" stop-color="#ffb5ba"/></linearGradient>
<linearGradient id="i55" gradientUnits="userSpaceOnUse" x1="1397" x2="1609"><stop offset="0" stop-color="#aef9ff"/><stop offset=".509" stop-color="#fff6fd"/><stop offset=".887" stop-color="#ffc1c7"/><stop offset="1" stop-color="#ffb4ba"/></linearGradient>
<linearGradient id="i56" gradientUnits="userSpaceOnUse" x1="1397" x2="1609"><stop offset="0" stop-color="#aef8ff"/><stop offset=".509" stop-color="#fff5fd"/><stop offset=".887" stop-color="#ffc0c7"/><stop offset="1" stop-color="#ffb4ba"/></linearGradient>
<linearGradient id="i57" gradientUnits="userSpaceOnUse" x1="1397" x2="1609"><stop offset="0" stop-color="#aef6ff"/><stop offset=".509" stop-color="#fff4fd"/><stop offset=".887" stop-color="#ffbfc7"/><stop offset="1" stop-color="#ffb3ba"/></linearGradient>
<linearGradient id="i58" gradientUnits="userSpaceOnUse" x1="1397" x2="1609"><stop offset="0" stop-color="#aef5ff"/><stop offset=".509" stop-color="#fff3fd"/><stop offset=".887" stop-color="#ffbec7"/><stop offset="1" stop-color="#ffb2ba"/></linearGradient>
<linearGradient id="i59" gradientUnits="userSpaceOnUse" x1="1397" x2="1609"><stop offset="0" stop-color="#aff4ff"/><stop offset=".509" stop-color="#fff2fd"/><stop offset=".887" stop-color="#ffbec7"/><stop offset="1" stop-color="#ffb1bb"/></linearGradient>
<linearGradient id="i60" gradientUnits="userSpaceOnUse" x1="1397" x2="1609"><stop offset="0" stop-color="#aff3ff"/><stop offset=".509" stop-color="#fff1fd"/><stop offset=".887" stop-color="#ffbdc7"/><stop offset="1" stop-color="#ffb1bb"/></linearGradient>
<linearGradient id="i61" gradientUnits="userSpaceOnUse" x1="1397" x2="1609"><stop offset="0" stop-color="#aff2ff"/><stop offset=".514" stop-color="#ffeffc"/><stop offset=".896" stop-color="#ffbbc6"/><stop offset="1" stop-color="#ffb0bb"/></linearGradient>
<linearGradient id="i62" gradientUnits="userSpaceOnUse" x1="1397" x2="1609"><stop offset="0" stop-color="#aff1ff"/><stop offset=".514" stop-color="#ffeefd"/><stop offset=".896" stop-color="#ffbac7"/><stop offset="1" stop-color="#ffafbb"/></linearGradient>
<linearGradient id="i63" gradientUnits="userSpaceOnUse" x1="1397" x2="1609"><stop offset="0" stop-color="#aff0ff"/><stop offset=".514" stop-color="#ffedfd"/><stop offset=".896" stop-color="#ffb9c7"/><stop offset="1" stop-color="#ffaebb"/></linearGradient>
<linearGradient id="i64" gradientUnits="userSpaceOnUse" x1="1397" x2="1609"><stop offset="0" stop-color="#afefff"/><stop offset=".514" stop-color="#ffecfd"/><stop offset=".896" stop-color="#ffb9c7"/><stop offset="1" stop-color="#ffaebb"/></linearGradient>
<linearGradient id="i65" gradientUnits="userSpaceOnUse" x1="1397" x2="1609"><stop offset="0" stop-color="#afeeff"/><stop offset=".514" stop-color="#ffebfd"/><stop offset=".896" stop-color="#ffb8c7"/><stop offset="1" stop-color="#ffadbb"/></linearGradient>
<linearGradient id="i66" gradientUnits="userSpaceOnUse" x1="1397" x2="1609"><stop offset="0" stop-color="#afedff"/><stop offset=".514" stop-color="#ffeafd"/><stop offset=".896" stop-color="#ffb7c7"/><stop offset="1" stop-color="#ffacbc"/></linearGradient>
<linearGradient id="i67" gradientUnits="userSpaceOnUse" x1="1397" x2="1609"><stop offset="0" stop-color="#afecff"/><stop offset=".514" stop-color="#ffe9fd"/><stop offset=".896" stop-color="#ffb6c7"/><stop offset="1" stop-color="#ffabbc"/></linearGradient>
<linearGradient id="i68" gradientUnits="userSpaceOnUse" x1="1397" x2="1609"><stop offset="0" stop-color="#afebff"/><stop offset=".514" stop-color="#ffe8fd"/><stop offset=".901" stop-color="#ffb5c7"/><stop offset="1" stop-color="#ffabbc"/></linearGradient>
<linearGradient id="i69" gradientUnits="userSpaceOnUse" x1="1397" x2="1609"><stop offset="0" stop-color="#afeaff"/><stop offset=".514" stop-color="#ffe7fd"/><stop offset=".901" stop-color="#ffb4c7"/><stop offset="1" stop-color="#ffaabc"/></linearGradient>
<linearGradient id="i70" gradientUnits="userSpaceOnUse" x1="1397" x2="1609"><stop offset="0" stop-color="#afe9ff"/><stop offset=".519" stop-color="#ffe5fc"/><stop offset=".906" stop-color="#ffb3c7"/><stop offset="1" stop-color="#ffa9bc"/></linearGradient>
<linearGradient id="i71" gradientUnits="userSpaceOnUse" x1="1397" x2="1609"><stop offset="0" stop-color="#afe8ff"/><stop offset=".519" stop-color="#ffe4fd"/><stop offset=".906" stop-color="#ffb2c7"/><stop offset="1" stop-color="#ffa8bc"/></linearGradient>
<linearGradient id="i72" gradientUnits="userSpaceOnUse" x1="1397" x2="1609"><stop offset="0" stop-color="#afe7ff"/><stop offset=".519" stop-color="#ffe3fd"/><stop offset=".906" stop-color="#ffb1c7"/><stop offset="1" stop-color="#ffa8bc"/></linearGradient>
<linearGradient id="i73" gradientUnits="userSpaceOnUse" x1="1397" x2="1609"><stop offset="0" stop-color="#afe6ff"/><stop offset=".519" stop-color="#ffe2fd"/><stop offset=".906" stop-color="#ffb1c7"/><stop offset="1" stop-color="#ffa7bd"/></linearGradient>
<linearGradient id="i74" gradientUnits="userSpaceOnUse" x1="1397" x2="1609"><stop offset="0" stop-color="#afe5ff"/><stop offset=".519" stop-color="#ffe1fd"/><stop offset=".910" stop-color="#ffafc7"/><stop offset="1" stop-color="#ffa6bd"/></linearGradient>
<linearGradient id="i75" gradientUnits="userSpaceOnUse" x1="1397" x2="1609"><stop offset="0" stop-color="#afe4ff"/><stop offset=".519" stop-color="#ffe0fd"/><stop offset=".910" stop-color="#ffafc7"/><stop offset="1" stop-color="#ffa6bd"/></linearGradient>
<linearGradient id="i76" gradientUnits="userSpaceOnUse" x1="1397" x2="1609"><stop offset="0" stop-color="#b0e3ff"/><stop offset=".519" stop-color="#ffdffd"/><stop offset=".910" stop-color="#ffaec7"/><stop offset="1" stop-color="#ffa5bd"/></linearGradient>
<linearGradient id="i77" gradientUnits="userSpaceOnUse" x1="1397" x2="1609"><stop offset="0" stop-color="#b0e2ff"/><stop offset=".519" stop-color="#ffdefd"/><stop offset=".910" stop-color="#ffadc7"/><stop offset="1" stop-color="#ffa4bd"/></linearGradient>
<linearGradient id="i78" gradientUnits="userSpaceOnUse" x1="1397" x2="1609"><stop offset="0" stop-color="#b0e1ff"/><stop offset=".519" stop-color="#ffddfd"/><stop offset=".910" stop-color="#ffacc7"/><stop offset="1" stop-color="#ffa3bd"/></linearGradient>
<linearGradient id="i79" gradientUnits="userSpaceOnUse" x1="1397" x2="1609"><stop offset="0" stop-color="#b0e0ff"/><stop offset=".519" stop-color="#ffdcfd"/><stop offset=".910" stop-color="#ffacc7"/><stop offset="1" stop-color="#ffa3bd"/></linearGradient>
<linearGradient id="i80" gradientUnits="userSpaceOnUse" x1="1397" x2="1609"><stop offset="0" stop-color="#b0dfff"/><stop offset=".524" stop-color="#ffdafc"/><stop offset=".920" stop-color="#ffaac6"/><stop offset="1" stop-color="#ffa2be"/></linearGradient>
<linearGradient id="i81" gradientUnits="userSpaceOnUse" x1="1397" x2="1609"><stop offset="0" stop-color="#b0deff"/><stop offset=".524" stop-color="#ffd9fd"/><stop offset=".920" stop-color="#ffa9c6"/><stop offset="1" stop-color="#ffa1be"/></linearGradient>
<linearGradient id="i82" gradientUnits="userSpaceOnUse" x1="1397" x2="1609"><stop offset="0" stop-color="#b0ddff"/><stop offset=".524" stop-color="#ffd8fd"/><stop offset=".920" stop-color="#ffa8c7"/><stop offset="1" stop-color="#ffa0be"/></linearGradient>
<linearGradient id="i83" gradientUnits="userSpaceOnUse" x1="1397" x2="1609"><stop offset="0" stop-color="#b0dcff"/><stop offset=".524" stop-color="#ffd7fd"/><stop offset=".920" stop-color="#ffa8c7"/><stop offset="1" stop-color="#ffa0be"/></linearGradient>
<linearGradient id="i84" gradientUnits="userSpaceOnUse" x1="1397" x2="1609"><stop offset="0" stop-color="#b0dbff"/><stop offset=".524" stop-color="#ffd6fd"/><stop offset=".920" stop-color="#ffa7c7"/><stop offset="1" stop-color="#ff9fbe"/></linearGradient>
<linearGradient id="i85" gradientUnits="userSpaceOnUse" x1="1397" x2="1609"><stop offset="0" stop-color="#b0daff"/><stop offset=".524" stop-color="#ffd5fd"/><stop offset=".920" stop-color="#ffa6c7"/><stop offset="1" stop-color="#ff9ebe"/></linearGradient>
<linearGradient id="i86" gradientUnits="userSpaceOnUse" x1="1397" x2="1609"><stop offset="0" stop-color="#b0d9ff"/><stop offset=".524" stop-color="#ffd4fd"/><stop offset=".920" stop-color="#ffa5c7"/><stop offset="1" stop-color="#ff9ebe"/></linearGradient>
<linearGradient id="i87" gradientUnits="userSpaceOnUse" x1="1397" x2="1609"><stop offset="0" stop-color="#b0d8ff"/><stop offset=".524" stop-color="#ffd4fd"/><stop offset=".920" stop-color="#ffa5c7"/><stop offset="1" stop-color="#ff9dbf"/></linearGradient>
<linearGradient id="i88" gradientUnits="userSpaceOnUse" x1="1397" x2="1609"><stop offset="0" stop-color="#b0d7ff"/><stop offset=".524" stop-color="#ffd3fd"/><stop offset=".920" stop-color="#ffa4c7"/><stop offset="1" stop-color="#ff9cbf"/></linearGradient>
<linearGradient id="i89" gradientUnits="userSpaceOnUse" x1="1397" x2="1609"><stop offset="0" stop-color="#b0d6ff"/><stop offset=".528" stop-color="#ffd1fc"/><stop offset=".929" stop-color="#ffa2c7"/><stop offset="1" stop-color="#ff9cbf"/></linearGradient>
<linearGradient id="i90" gradientUnits="userSpaceOnUse" x1="1397" x2="1609"><stop offset="0" stop-color="#b0d5ff"/><stop offset=".528" stop-color="#ffd0fd"/><stop offset=".929" stop-color="#ffa1c7"/><stop offset="1" stop-color="#ff9bbf"/></linearGradient>
<linearGradient id="i91" gradientUnits="userSpaceOnUse" x1="1397" x2="1609"><stop offset="0" stop-color="#b0d4ff"/><stop offset=".528" stop-color="#ffcffd"/><stop offset=".929" stop-color="#ffa1c7"/><stop offset="1" stop-color="#ff9abf"/></linearGradient>
<linearGradient id="i92" gradientUnits="userSpaceOnUse" x1="1397" x2="1609"><stop offset="0" stop-color="#b0d3ff"/><stop offset=".528" stop-color="#ffcefd"/><stop offset=".929" stop-color="#ffa0c7"/><stop offset="1" stop-color="#ff99bf"/></linearGradient>
<linearGradient id="i93" gradientUnits="userSpaceOnUse" x1="1397" x2="1609"><stop offset="0" stop-color="#b0d2ff"/><stop offset=".528" stop-color="#ffcdfd"/><stop offset=".929" stop-color="#ff9fc7"/><stop offset="1" stop-color="#ff99bf"/></linearGradient>
<linearGradient id="i94" gradientUnits="userSpaceOnUse" x1="1397" x2="1609"><stop offset="0" stop-color="#b1d1ff"/><stop offset=".528" stop-color="#ffccfd"/><stop offset=".929" stop-color="#ff9fc7"/><stop offset="1" stop-color="#ff98bf"/></linearGradient>
<linearGradient id="i95" gradientUnits="userSpaceOnUse" x1="1397" x2="1609"><stop offset="0" stop-color="#b1d1ff"/><stop offset=".528" stop-color="#ffcbfd"/><stop offset=".934" stop-color="#ff9dc7"/><stop offset="1" stop-color="#ff97c0"/></linearGradient>
<linearGradient id="i96" gradientUnits="userSpaceOnUse" x1="1397" x2="1609"><stop offset="0" stop-color="#b1d0ff"/><stop offset=".528" stop-color="#ffcafd"/><stop offset=".934" stop-color="#ff9dc7"/><stop offset="1" stop-color="#ff97c0"/></linearGradient>
<linearGradient id="i97" gradientUnits="userSpaceOnUse" x1="1397" x2="1609"><stop offset="0" stop-color="#b1cfff"/><stop offset=".528" stop-color="#ffcafd"/><stop offset=".934" stop-color="#ff9cc7"/><stop offset="1" stop-color="#ff96c0"/></linearGradient>
<linearGradient id="i98" gradientUnits="userSpaceOnUse" x1="1397" x2="1609"><stop offset="0" stop-color="#b1ceff"/><stop offset=".533" stop-color="#ffc8fc"/><stop offset=".939" stop-color="#ff9bc7"/><stop offset="1" stop-color="#ff95c0"/></linearGradient>
<linearGradient id="i99" gradientUnits="userSpaceOnUse" x1="1397" x2="1609"><stop offset="0" stop-color="#b1cdff"/><stop offset=".533" stop-color="#ffc7fd"/><stop offset=".939" stop-color="#ff9ac7"/><stop offset="1" stop-color="#ff95c0"/></linearGradient>
<clipPath id="lc"><path d="M1117.0 671.1L1117.0 671.1L1116.9 671.1L1116.9 671.1L1116.8 671.1L1116.8 671.1L1116.7 671.1L1116.6 671.1L1116.6 671.1L1116.5 671.1L1116.4 671.2L1116.3 671.2L1116.2 671.2L1116.1 671.2L1116.0 671.2L1115.9 671.2L1115.7 671.2L1115.6 671.2L1115.4 671.1L1115.2 671.1L1115.0 671.0L1114.7 670.8L1114.3 670.7L1114.0 670.4L1113.6 670.2L1113.1 669.8L1112.5 669.5L1111.9 669.0L1111.3 668.5L1110.5 668.0L1109.7 667.3L1108.8 666.7L1107.8 665.9L1106.7 665.1L1105.4 664.1L1103.9 663.0L1102.4 661.9L1100.6 660.6L1098.7 659.1L1096.7 657.4L1094.5 655.5L1092.1 653.2L1089.5 650.6L1086.6 647.3L1083.3 643.0L1079.6 637.7L1075.6 631.4L1071.1 623.8L1066.3 614.6L1060.9 603.5L1055.1 590.5L1048.6 575.2L1041.7 557.4L1034.7 537.0L1027.7 513.9L1020.7 488.1L1013.9 459.7L1007.4 429.4L1001.5 398.0L996.7 366.1L992.9 334.5L990.4 303.7L989.5 274.8L990.3 247.7L992.8 222.8L997.2 200.8L1003.4 182.3L1011.3 167.6L1020.7 157.2L1031.2 150.8L1042.4 148.1L1054.1 148.4L1066.1 151.0L1078.3 155.0L1090.5 160.1L1102.5 165.7L1114.1 171.6L1125.4 177.8L1136.6 184.3L1147.6 191.1L1158.5 198.2L1169.4 205.6L1180.2 213.3L1190.9 221.1L1201.6 229.1L1212.3 237.4L1223.0 245.7L1233.7 254.2L1244.4 262.8L1255.1 271.4L1265.8 280.2L1276.5 288.9L1287.1 297.8L1297.8 306.6L1308.3 315.4L1318.9 324.2L1329.3 332.9L1339.7 341.6L1349.9 350.3L1360.1 358.8L1370.0 367.2L1379.8 375.4L1389.5 383.5L1398.9 391.4L1408.0 399.0L1416.9 406.5L1425.5 413.7L1433.7 420.7L1441.5 427.2L1448.8 433.3L1455.7 439.2L1462.3 444.7L1468.6 450.0L1474.4 454.8L1479.7 459.3L1484.7 463.4L1489.2 467.3L1493.4 470.8L1497.2 474.0L1500.7 477.0L1503.9 479.6L1506.8 482.1L1509.5 484.3L1511.9 486.3L1514.1 488.2L1516.2 489.9L1518.1 491.6L1519.9 493.1L1521.6 494.5L1523.1 495.7L1524.5 496.9L1525.8 498.0L1526.9 499.0L1528.0 499.9L1528.9 500.6L1529.7 501.3L1530.4 501.9L1531.1 502.5L1531.7 503.0L1532.2 503.4L1532.7 503.8L1533.0 504.1L1533.4 504.4L1533.7 504.6L1533.9 504.9L1534.2 505.1L1534.4 505.3L1534.6 505.5L1534.8 505.6L1535.0 505.8L1535.2 506.0L1535.4 506.2L1535.6 506.3L1535.8 506.4L1535.9 506.5L1536.0 506.6L1536.0 506.7L1536.1 506.7L1536.1 506.7L1536.2 506.8L1536.2 506.8Z"/></clipPath>
<linearGradient id="bb" x1="0" y1="0" x2="0" y2="1"><stop offset="0" stop-color="#4a4a4a"/><stop offset="1" stop-color="#1e1e1e"/></linearGradient>
<linearGradient id="bsel" x1="0" y1="0" x2="0" y2="1"><stop offset="0" stop-color="#141414"/><stop offset="1" stop-color="#3e3e3e"/></linearGradient>
<linearGradient id="cbs" x1="0" y1="0" x2="0" y2="1"><stop offset="0" stop-color="#969696"/><stop offset="0.52" stop-color="#868686"/><stop offset="0.52" stop-color="#747474"/><stop offset="1" stop-color="#666"/></linearGradient>
<linearGradient id="bt" x1="0" y1="0" x2="0" y2="1"><stop offset="0" stop-color="#a2a2a2"/><stop offset="0.08" stop-color="#8e8e8e"/><stop offset="1" stop-color="#505050"/></linearGradient>
<linearGradient id="cb" x1="0" y1="0" x2="0" y2="1"><stop offset="0" stop-color="#9c9c9c"/><stop offset="1" stop-color="#6a6a6a"/></linearGradient>
<linearGradient id="cb2" x1="0" y1="0" x2="0" y2="1"><stop offset="0" stop-color="#a4a4a4"/><stop offset="1" stop-color="#747474"/></linearGradient>
<linearGradient id="cc" x1="0" y1="0" x2="0" y2="1"><stop offset="0" stop-color="#6e6e6e"/><stop offset="1" stop-color="#8e8e8e"/></linearGradient>
</defs>
<rect x="0" y="0" width="1627" height="1047" fill="#000"/>
<rect x="8" y="1" width="1618" height="30" fill="#fff"/>
<rect x="8" y="31" width="1618" height="66" fill="#222"/>
<rect x="8" y="96.5" width="1619" height="880" fill="#333"/>
<circle cx="24" cy="14.8" r="8" fill="url(#rb)"/><circle cx="24" cy="14.8" r="6.3" fill="#000"/>
<text x="24" y="17.3" font-size="6.5" fill="#fff" text-anchor="middle" font-weight="bold" textLength="9.5" lengthAdjust="spacingAndGlyphs">CM</text>
<text x="37" y="19.6" font-size="12.3" fill="#000" textLength="292" lengthAdjust="spacingAndGlyphs">CalMAN 2016 CalMAN Enthusiast for Home Video</text>
<rect x="1507" y="14.7" width="10" height="1" fill="#000"/>
<rect x="1552.5" y="10.5" width="9" height="9" fill="none" stroke="#000" stroke-width="1"/>
<path d="M1598 10.3l10 9.6M1608 10.3l-10 9.6" stroke="#000" stroke-width="1.1" fill="none"/>
<path d="M8 31H191V57.5Q191 61 187.5 61H11.5Q8 61 8 57.5Z" fill="#d8f5d0"/>
<path d="M8 31H190.2V57Q190.2 60 187.2 60H11.2Q8.5 60 8.5 57Z" fill="url(#lg)"/>
<text x="21.6" y="56.7" font-size="29.2" fill="#0a7a05" font-weight="bold" textLength="129.5" lengthAdjust="spacingAndGlyphs" opacity=".35">CalMAN</text>
<text x="21" y="55.9" font-size="29.2" fill="#fff" font-weight="bold" textLength="129.5" lengthAdjust="spacingAndGlyphs">CalMAN</text>
<circle cx="174" cy="45" r="10" fill="#5fd64e" opacity=".75"/>
<path d="M169 43.8h10l-5 5.2z" fill="#fff"/>
<rect x="198" y="43" width="1427" height="5.5" fill="url(#rb)"/>
<path d="M8 66H31Q35.5 66 35.5 70.500V89Q35.500 93.500 31 93.500H8Z" fill="#bbb"/>
<path d="M8 67H30.500Q34.500 67 34.500 71V88.500Q34.500 92.500 30.500 92.500H8Z" fill="url(#gb)"/>
<circle cx="20.3" cy="79.800" r="10" fill="url(#dk)"/>
<path d="M17.500 74.500l6.500 5.300l-6.500 5.300z" fill="#fff"/>
<path d="M37 97V70Q37 66 41 66H125Q129 66 129 70V97Z" fill="#5a5a5a"/>
<path d="M38 97V70.500Q38 67 41.500 67H124.500Q128 67 128 70.500V97Z" fill="#3b3b3b"/>
<rect x="95" y="67" width="1" height="30" fill="#5a5a5a"/>
<text x="43" y="86" font-size="11.8" fill="#e4e4e4" textLength="47" lengthAdjust="spacingAndGlyphs">History 1</text>
<circle cx="111.200" cy="83.300" r="9" fill="#303030"/>
<path d="M108 83.700h6.500M111.250 80.450v6.500" stroke="#8a8a8a" stroke-width="1.200"/>
<rect x="8" y="96.5" width="1619" height="1" fill="#2e2e2e"/>
<path d="M1017.4 96V70Q1017.4 66 1021.4 66H1156.5Q1160.5 66 1160.5 70V96Z" fill="url(#gb2)"/>
<path d="M1017.4 96V70Q1017.4 66 1021.4 66H1022.9V96Z" fill="#0fdc0f"/>
<text x="1026" y="77.9" font-size="10.8" fill="#f2f2f2" font-weight="bold" textLength="105.5" lengthAdjust="spacingAndGlyphs">X-Rite i1Display Retail</text>
<text x="1026" y="91.1" font-size="10.8" fill="#f2f2f2" font-weight="bold" textLength="26" lengthAdjust="spacingAndGlyphs">OLED</text>
<circle cx="1144.2" cy="81.300" r="9.500" fill="url(#dk2)"/>
<path d="M1139.2 79.300h10l-5 5.200z" fill="#fff"/>
<path d="M1166.5 96V70Q1166.5 66 1170.5 66H1370.6Q1374.6 66 1374.6 70V96Z" fill="url(#gb2)"/>
<path d="M1166.5 96V70Q1166.5 66 1170.5 66H1172V96Z" fill="#0fdc0f"/>
<text x="1175.1" y="77.9" font-size="10.8" fill="#f2f2f2" font-weight="bold" textLength="169.5" lengthAdjust="spacingAndGlyphs">CalMAN Client 3 Pattern Generator</text>
<circle cx="1358.4" cy="81.300" r="9.500" fill="url(#dk2)"/>
<path d="M1353.4 79.300h10l-5 5.200z" fill="#fff"/>
<path d="M1380.7 96V70Q1380.7 66 1384.7 66H1520Q1524 66 1524 70V96Z" fill="url(#gb2)"/>
<path d="M1380.7 96V70Q1380.7 66 1384.7 66H1386.2V96Z" fill="#e6e600"/>
<text x="1389.3" y="77.9" font-size="10.8" fill="#f2f2f2" font-weight="bold" textLength="104.5" lengthAdjust="spacingAndGlyphs">Direct Display Control</text>
<circle cx="1507.9" cy="81.300" r="9.500" fill="url(#dk2)"/>
<path d="M1502.9 79.300h10l-5 5.200z" fill="#fff"/>
<rect x="1527.5" y="66.400" width="33" height="27.500" rx="4" fill="url(#gb3)" stroke="#b4b4b4" stroke-width="1"/>
<circle cx="1544" cy="80.200" r="9.500" fill="url(#dk)"/>
<rect x="1563.5" y="66.400" width="32.6" height="27.500" rx="4" fill="url(#gb3)" stroke="#b4b4b4" stroke-width="1"/>
<circle cx="1579.8" cy="80.200" r="9.500" fill="url(#dk)"/>
<rect x="1599.5" y="66.400" width="33" height="27.500" rx="4" fill="url(#gb3)" stroke="#b4b4b4" stroke-width="1"/>
<circle cx="1616" cy="80.200" r="9.500" fill="url(#dk)"/>
<g stroke="#e8e8e8" fill="none"><circle cx="1544" cy="80.2" r="4.300" stroke-width="2"/><path d="M1548.9 82.2282L1550.74 82.9936" stroke-width="2.400"/><path d="M1546.03 85.0966L1546.79 86.9443" stroke-width="2.400"/><path d="M1541.97 85.0966L1541.21 86.9443" stroke-width="2.400"/><path d="M1539.1 82.2282L1537.26 82.9936" stroke-width="2.400"/><path d="M1539.1 78.1718L1537.26 77.4064" stroke-width="2.400"/><path d="M1541.97 75.3034L1541.21 73.4557" stroke-width="2.400"/><path d="M1546.03 75.3034L1546.79 73.4557" stroke-width="2.400"/><path d="M1548.9 78.1718L1550.74 77.4064" stroke-width="2.400"/></g>
<text x="1579.8" y="85.8" font-size="16" fill="#f4f4f4" text-anchor="middle" font-weight="bold">?</text>
<path d="M1617.500 74l-6.500 6.200l6.500 6.200z" fill="#fff"/>
<rect x="1626" y="0" width="1" height="97" fill="#000"/>
<text x="31.5" y="158.2" font-size="39.5" fill="#f2f2f2" textLength="188" lengthAdjust="spacingAndGlyphs">Colorspace</text>
<text x="190.6" y="212.4" font-size="14.8" fill="#dcdcdc" text-anchor="middle" textLength="78" lengthAdjust="spacingAndGlyphs">DeltaE 2000</text>
<rect x="27.7" y="218.9" width="325.2" height="445.5" fill="#242424"/>
<rect x="69.82" y="218.9" width="1.2" height="445.5" fill="#8a8a8a"/>
<rect x="113.84" y="218.9" width="1.2" height="445.5" fill="#8a8a8a"/>
<rect x="157.16" y="218.9" width="1.2" height="445.5" fill="#8a8a8a"/>
<rect x="200.48" y="218.9" width="1.2" height="445.5" fill="#8a8a8a"/>
<rect x="243.8" y="218.9" width="1.2" height="445.5" fill="#8a8a8a"/>
<rect x="287.12" y="218.9" width="1.2" height="445.5" fill="#8a8a8a"/>
<rect x="330.44" y="218.9" width="1.2" height="445.5" fill="#8a8a8a"/>
<path d="M27.7 671.4V218.9H352.9V664.4" fill="none" stroke="#a8a8a8" stroke-width="1.500"/>
<rect x="27.7" y="663.7" width="325.2" height="1.4" fill="#a8a8a8"/>
<rect x="26.9" y="664.4" width="1.7" height="6.7" fill="#e4e4e4"/>
<text x="27.7" y="688" font-size="15" fill="#dcdcdc" text-anchor="middle">0</text>
<rect x="70.22" y="664.4" width="1.7" height="6.7" fill="#e4e4e4"/>
<text x="71.02" y="688" font-size="15" fill="#dcdcdc" text-anchor="middle">2</text>
<rect x="113.54" y="664.4" width="1.7" height="6.7" fill="#e4e4e4"/>
<text x="114.34" y="688" font-size="15" fill="#dcdcdc" text-anchor="middle">4</text>
<rect x="156.86" y="664.4" width="1.7" height="6.7" fill="#e4e4e4"/>
<text x="157.66" y="688" font-size="15" fill="#dcdcdc" text-anchor="middle">6</text>
<rect x="200.18" y="664.4" width="1.7" height="6.7" fill="#e4e4e4"/>
<text x="200.98" y="688" font-size="15" fill="#dcdcdc" text-anchor="middle">8</text>
<rect x="243.5" y="664.4" width="1.7" height="6.7" fill="#e4e4e4"/>
<text x="244.3" y="688" font-size="15" fill="#dcdcdc" text-anchor="middle">10</text>
<rect x="286.82" y="664.4" width="1.7" height="6.7" fill="#e4e4e4"/>
<text x="287.62" y="688" font-size="15" fill="#dcdcdc" text-anchor="middle">12</text>
<rect x="330.14" y="664.4" width="1.7" height="6.7" fill="#e4e4e4"/>
<text x="330.94" y="688" font-size="15" fill="#dcdcdc" text-anchor="middle">14</text>
<rect x="28.6" y="225.3" width="86.5295" height="42.300" fill="url(#hb0)" stroke="#000" stroke-width="1.200"/>
<rect x="28" y="224.1" width="87.7295" height="1.2" fill="#000"/>
<rect x="28.6" y="281.02" width="11.4863" height="42.300" fill="url(#hb1)" stroke="#000" stroke-width="1.200"/>
<rect x="28" y="279.82" width="12.6863" height="1.2" fill="#000"/>
<rect x="28.6" y="336.74" width="57.0611" height="42.300" fill="url(#hb2)" stroke="#000" stroke-width="1.200"/>
<rect x="28" y="335.54" width="58.2611" height="1.2" fill="#000"/>
<rect x="28.6" y="392.46" width="56.8055" height="42.300" fill="url(#hb3)" stroke="#000" stroke-width="1.200"/>
<rect x="28" y="391.26" width="58.0055" height="1.2" fill="#000"/>
<rect x="28.6" y="448.18" width="15.3461" height="42.300" fill="url(#hb4)" stroke="#000" stroke-width="1.200"/>
<rect x="28" y="446.98" width="16.5461" height="1.2" fill="#000"/>
<rect x="28.6" y="503.9" width="23.5921" height="42.300" fill="url(#hb5)" stroke="#000" stroke-width="1.200"/>
<rect x="28" y="502.7" width="24.7921" height="1.2" fill="#000"/>
<rect x="28.6" y="559.62" width="55.0705" height="42.300" fill="url(#hb6)" stroke="#000" stroke-width="1.200"/>
<rect x="28" y="558.42" width="56.2705" height="1.2" fill="#000"/>
<rect x="28.6" y="615.34" width="74.3696" height="42.300" fill="url(#hb7)" stroke="#000" stroke-width="1.200"/>
<rect x="28" y="614.14" width="75.5696" height="1.2" fill="#000"/>
<text x="-3.5" y="476.5" font-size="14" fill="#e0e0e0">)</text>
<rect x="403.4" y="146.9" width="140.4" height="340.1" fill="#242424"/>
<rect x="403.4" y="203.6" width="140.4" height="1.3" fill="#8a8a8a"/>
<rect x="403.4" y="259.5" width="140.4" height="1.3" fill="#8a8a8a"/>
<rect x="403.4" y="316.4" width="140.4" height="1.3" fill="#8a8a8a"/>
<rect x="403.4" y="373.7" width="140.4" height="1.3" fill="#8a8a8a"/>
<rect x="403.4" y="430.7" width="140.4" height="1.3" fill="#8a8a8a"/>
<path d="M403.4 494V146.9H543.8V494" fill="none" stroke="#a8a8a8" stroke-width="1.500"/>
<rect x="403.4" y="148.1" width="140.4" height="0.8" fill="#666"/>
<rect x="403.4" y="486.3" width="140.4" height="1.4" fill="#a8a8a8"/>
<rect x="397.9" y="146.1" width="5.5" height="1.6" fill="#ddd"/>
<text x="397.4" y="152.8" font-size="15" fill="#dcdcdc" text-anchor="end" textLength="15.5" lengthAdjust="spacingAndGlyphs">15</text>
<rect x="397.9" y="203.4" width="5.5" height="1.6" fill="#ddd"/>
<text x="397.4" y="210.1" font-size="15" fill="#dcdcdc" text-anchor="end" textLength="15.5" lengthAdjust="spacingAndGlyphs">10</text>
<rect x="397.9" y="259.3" width="5.5" height="1.6" fill="#ddd"/>
<text x="397.4" y="266" font-size="15" fill="#dcdcdc" text-anchor="end">5</text>
<rect x="397.9" y="316.2" width="5.5" height="1.6" fill="#ddd"/>
<text x="397.4" y="322.9" font-size="15" fill="#dcdcdc" text-anchor="end">0</text>
<rect x="397.9" y="373.5" width="5.5" height="1.6" fill="#ddd"/>
<text x="397.4" y="380.2" font-size="15" fill="#dcdcdc" text-anchor="end" textLength="15.5" lengthAdjust="spacingAndGlyphs">-5</text>
<rect x="397.9" y="430.5" width="5.5" height="1.6" fill="#ddd"/>
<text x="397.4" y="437.2" font-size="15" fill="#dcdcdc" text-anchor="end" textLength="20.5" lengthAdjust="spacingAndGlyphs">-10</text>
<rect x="397.9" y="486.2" width="5.5" height="1.6" fill="#ddd"/>
<text x="397.4" y="494.7" font-size="15" fill="#dcdcdc" text-anchor="end" textLength="20.5" lengthAdjust="spacingAndGlyphs">-15</text>
<text x="460.9" y="139.6" font-size="15" fill="#dcdcdc" text-anchor="middle" textLength="41" lengthAdjust="spacingAndGlyphs">DeltaL</text>
<text x="473.9" y="503.8" font-size="15" fill="#dcdcdc" text-anchor="middle" textLength="37" lengthAdjust="spacingAndGlyphs">100W</text>
<rect x="417.4" y="316" width="111.5" height="2" fill="#000"/>
<rect x="595.2" y="146.9" width="140.4" height="340.1" fill="#242424"/>
<rect x="595.2" y="203.6" width="140.4" height="1.3" fill="#8a8a8a"/>
<rect x="595.2" y="259.5" width="140.4" height="1.3" fill="#8a8a8a"/>
<rect x="595.2" y="316.4" width="140.4" height="1.3" fill="#8a8a8a"/>
<rect x="595.2" y="373.7" width="140.4" height="1.3" fill="#8a8a8a"/>
<rect x="595.2" y="430.7" width="140.4" height="1.3" fill="#8a8a8a"/>
<path d="M595.2 494V146.9H735.6V494" fill="none" stroke="#a8a8a8" stroke-width="1.500"/>
<rect x="595.2" y="148.1" width="140.4" height="0.8" fill="#666"/>
<rect x="595.2" y="486.3" width="140.4" height="1.4" fill="#a8a8a8"/>
<rect x="589.7" y="146.1" width="5.5" height="1.6" fill="#ddd"/>
<text x="589.2" y="152.8" font-size="15" fill="#dcdcdc" text-anchor="end" textLength="15.5" lengthAdjust="spacingAndGlyphs">15</text>
<rect x="589.7" y="203.4" width="5.5" height="1.6" fill="#ddd"/>
<text x="589.2" y="210.1" font-size="15" fill="#dcdcdc" text-anchor="end" textLength="15.5" lengthAdjust="spacingAndGlyphs">10</text>
<rect x="589.7" y="259.3" width="5.5" height="1.6" fill="#ddd"/>
<text x="589.2" y="266" font-size="15" fill="#dcdcdc" text-anchor="end">5</text>
<rect x="589.7" y="316.2" width="5.5" height="1.6" fill="#ddd"/>
<text x="589.2" y="322.9" font-size="15" fill="#dcdcdc" text-anchor="end">0</text>
<rect x="589.7" y="373.5" width="5.5" height="1.6" fill="#ddd"/>
<text x="589.2" y="380.2" font-size="15" fill="#dcdcdc" text-anchor="end" textLength="15.5" lengthAdjust="spacingAndGlyphs">-5</text>
<rect x="589.7" y="430.5" width="5.5" height="1.6" fill="#ddd"/>
<text x="589.2" y="437.2" font-size="15" fill="#dcdcdc" text-anchor="end" textLength="20.5" lengthAdjust="spacingAndGlyphs">-10</text>
<rect x="589.7" y="486.2" width="5.5" height="1.6" fill="#ddd"/>
<text x="589.2" y="494.7" font-size="15" fill="#dcdcdc" text-anchor="end" textLength="20.5" lengthAdjust="spacingAndGlyphs">-15</text>
<text x="652.7" y="139.6" font-size="15" fill="#dcdcdc" text-anchor="middle" textLength="41" lengthAdjust="spacingAndGlyphs">DeltaC</text>
<text x="665.7" y="503.8" font-size="15" fill="#dcdcdc" text-anchor="middle" textLength="37" lengthAdjust="spacingAndGlyphs">100W</text>
<rect x="609.2" y="283.800" width="111" height="33.300" fill="url(#wv)" stroke="#000" stroke-width="1.200"/>
<rect x="786.6" y="146.9" width="140.4" height="340.1" fill="#242424"/>
<rect x="786.6" y="203.6" width="140.4" height="1.3" fill="#8a8a8a"/>
<rect x="786.6" y="259.5" width="140.4" height="1.3" fill="#8a8a8a"/>
<rect x="786.6" y="316.4" width="140.4" height="1.3" fill="#8a8a8a"/>
<rect x="786.6" y="373.7" width="140.4" height="1.3" fill="#8a8a8a"/>
<rect x="786.6" y="430.7" width="140.4" height="1.3" fill="#8a8a8a"/>
<path d="M786.6 494V146.9H927V494" fill="none" stroke="#a8a8a8" stroke-width="1.500"/>
<rect x="786.6" y="148.1" width="140.4" height="0.8" fill="#666"/>
<rect x="786.6" y="486.3" width="140.4" height="1.4" fill="#a8a8a8"/>
<rect x="781.1" y="146.1" width="5.5" height="1.6" fill="#ddd"/>
<text x="780.6" y="152.8" font-size="15" fill="#dcdcdc" text-anchor="end" textLength="15.5" lengthAdjust="spacingAndGlyphs">15</text>
<rect x="781.1" y="203.4" width="5.5" height="1.6" fill="#ddd"/>
<text x="780.6" y="210.1" font-size="15" fill="#dcdcdc" text-anchor="end" textLength="15.5" lengthAdjust="spacingAndGlyphs">10</text>
<rect x="781.1" y="259.3" width="5.5" height="1.6" fill="#ddd"/>
<text x="780.6" y="266" font-size="15" fill="#dcdcdc" text-anchor="end">5</text>
<rect x="781.1" y="316.2" width="5.5" height="1.6" fill="#ddd"/>
<text x="780.6" y="322.9" font-size="15" fill="#dcdcdc" text-anchor="end">0</text>
<rect x="781.1" y="373.5" width="5.5" height="1.6" fill="#ddd"/>
<text x="780.6" y="380.2" font-size="15" fill="#dcdcdc" text-anchor="end" textLength="15.5" lengthAdjust="spacingAndGlyphs">-5</text>
<rect x="781.1" y="430.5" width="5.5" height="1.6" fill="#ddd"/>
<text x="780.6" y="437.2" font-size="15" fill="#dcdcdc" text-anchor="end" textLength="20.5" lengthAdjust="spacingAndGlyphs">-10</text>
<rect x="781.1" y="486.2" width="5.5" height="1.6" fill="#ddd"/>
<text x="780.6" y="494.7" font-size="15" fill="#dcdcdc" text-anchor="end" textLength="20.5" lengthAdjust="spacingAndGlyphs">-15</text>
<text x="844.1" y="139.6" font-size="15" fill="#dcdcdc" text-anchor="middle" textLength="41" lengthAdjust="spacingAndGlyphs">DeltaH</text>
<text x="857.1" y="503.8" font-size="15" fill="#dcdcdc" text-anchor="middle" textLength="37" lengthAdjust="spacingAndGlyphs">100W</text>
<rect x="800.6" y="316" width="111.5" height="2" fill="#000"/>
<rect x="372" y="522" width="574" height="175.5" fill="#000"/>
<rect x="389" y="530" width="60.2" height="142.2" fill="#f4f4f4"/>
<rect x="390.2" y="531.2" width="57.8" height="139.8" fill="#c3bcbf"/>
<rect x="390.2" y="601.6" width="57.8" height="69.4" fill="#bfbfbf" shape-rendering="crispEdges"/>
<text x="419" y="689.3" font-size="12.3" fill="#fff" text-anchor="middle" font-weight="bold">White</text>
<rect x="459.05" y="530" width="60.2" height="142.2" fill="#f4f4f4"/>
<rect x="460.25" y="531.2" width="57.8" height="139.8" fill="#b00005"/>
<rect x="460.25" y="601.6" width="57.8" height="69.4" fill="#c00000" shape-rendering="crispEdges"/>
<text x="489.05" y="689.3" font-size="12.3" fill="#fff" text-anchor="middle" font-weight="bold">Red</text>
<rect x="529.1" y="530" width="60.2" height="142.2" fill="#f4f4f4"/>
<rect x="530.3" y="531.2" width="57.8" height="139.8" fill="#25b80a"/>
<rect x="530.3" y="601.6" width="57.8" height="69.4" fill="#00c000" shape-rendering="crispEdges"/>
<text x="559.1" y="689.3" font-size="12.3" fill="#fff" text-anchor="middle" font-weight="bold">Green</text>
<rect x="599.15" y="530" width="60.2" height="142.2" fill="#f4f4f4"/>
<rect x="600.35" y="531.2" width="57.8" height="139.8" fill="#0018bf"/>
<rect x="600.35" y="601.6" width="57.8" height="69.4" fill="#1a18c0" shape-rendering="crispEdges"/>
<text x="629.15" y="689.3" font-size="12.3" fill="#fff" text-anchor="middle" font-weight="bold">Blue</text>
<rect x="669.2" y="530" width="60.2" height="142.2" fill="#f4f4f4"/>
<rect x="670.4" y="531.2" width="57.8" height="139.8" fill="#20b9bf"/>
<rect x="670.4" y="601.6" width="57.8" height="69.4" fill="#00c0c0" shape-rendering="crispEdges"/>
<text x="699.2" y="689.3" font-size="12.3" fill="#fff" text-anchor="middle" font-weight="bold">Cyan</text>
<rect x="739.25" y="530" width="60.2" height="142.2" fill="#f4f4f4"/>
<rect x="740.45" y="531.2" width="57.8" height="139.8" fill="#b400bc"/>
<rect x="740.45" y="601.6" width="57.8" height="69.4" fill="#c000c0" shape-rendering="crispEdges"/>
<text x="769.25" y="689.3" font-size="12.3" fill="#fff" text-anchor="middle" font-weight="bold">Magenta</text>
<rect x="809.3" y="530" width="60.2" height="142.2" fill="#f4f4f4"/>
<rect x="810.5" y="531.2" width="57.8" height="139.8" fill="#c0bf0a"/>
<rect x="810.5" y="601.6" width="57.8" height="69.4" fill="#c0c000" shape-rendering="crispEdges"/>
<text x="839.3" y="689.3" font-size="12.3" fill="#fff" text-anchor="middle" font-weight="bold">Yellow</text>
<rect x="879.35" y="530" width="60.2" height="142.2" fill="#f4f4f4"/>
<rect x="880.55" y="531.2" width="57.8" height="139.8" fill="#fff8f9"/>
<rect x="880.55" y="601.6" width="57.8" height="69.4" fill="#fafafa" shape-rendering="crispEdges"/>
<text x="909.35" y="689.3" font-size="12.3" fill="#fff" text-anchor="middle" font-weight="bold">100W</text>
<text transform="translate(385.200 580.500) rotate(-90)" font-size="12.300" font-weight="bold" fill="#fff" textLength="37.500" lengthAdjust="spacingAndGlyphs">Actual</text>
<text transform="translate(385.200 660) rotate(-90)" font-size="12.300" font-weight="bold" fill="#fff" textLength="37.500" lengthAdjust="spacingAndGlyphs">Target</text>
<text x="22.3" y="775.8" font-size="29" fill="#f2f2f2" textLength="213" lengthAdjust="spacingAndGlyphs">Current Reading</text>
<text x="22.3" y="821.2" font-size="24.3" fill="#f2f2f2" textLength="99.5" lengthAdjust="spacingAndGlyphs">x: 0.3153</text>
<text x="22.3" y="865.2" font-size="24.3" fill="#f2f2f2" textLength="87" lengthAdjust="spacingAndGlyphs">y: 0.326</text>
<text x="22.3" y="908.8" font-size="24.3" fill="#f2f2f2" textLength="94" lengthAdjust="spacingAndGlyphs">fL: 34.89</text>
<text x="22.3" y="952.8" font-size="24.3" fill="#f2f2f2" textLength="154.5" lengthAdjust="spacingAndGlyphs">cd/m²: 119.53</text>
<rect x="343" y="755.2" width="253.8" height="194.1" fill="#242424"/>
<rect x="343" y="770.95" width="253.8" height="1.3" fill="#8a8a8a"/>
<rect x="338" y="770.75" width="5" height="1.6" fill="#ddd"/>
<text x="337" y="776.95" font-size="15" fill="#dcdcdc" text-anchor="end">5</text>
<rect x="343" y="851.7" width="253.8" height="1.3" fill="#8a8a8a"/>
<rect x="338" y="851.5" width="5" height="1.6" fill="#ddd"/>
<text x="337" y="857.7" font-size="15" fill="#dcdcdc" text-anchor="end">0</text>
<rect x="343" y="932.45" width="253.8" height="1.3" fill="#8a8a8a"/>
<rect x="338" y="932.25" width="5" height="1.6" fill="#ddd"/>
<text x="337" y="938.45" font-size="15" fill="#dcdcdc" text-anchor="end">-5</text>
<path d="M343 955.3V755.2H596.8V955.3" fill="none" stroke="#a8a8a8" stroke-width="1.500"/>
<rect x="343" y="948.6" width="253.8" height="1.4" fill="#a8a8a8"/>
<text x="460.4" y="749.2" font-size="15" fill="#dcdcdc" text-anchor="middle" textLength="81" lengthAdjust="spacingAndGlyphs">RGB Balance</text>
<text x="469.5" y="966.3" font-size="15" fill="#dcdcdc" text-anchor="middle" textLength="37" lengthAdjust="spacingAndGlyphs">100W</text>
<rect x="367.800" y="763.200" width="66.200" height="89.100" fill="url(#rr)" stroke="#000" stroke-width="1.200"/>
<rect x="435.200" y="852.300" width="66.200" height="29.800" fill="url(#rg)" stroke="#000" stroke-width="1.200"/>
<rect x="502.500" y="827.800" width="66.200" height="24.500" fill="url(#rbl)" stroke="#000" stroke-width="1.200"/>
<rect x="617" y="730.2" width="674" height="41.7" fill="url(#th)"/>
<rect x="617" y="730.2" width="14" height="41.7" fill="#000"/>
<text x="712.2" y="758.7" font-size="21.7" fill="#f4f4f4" textLength="41" lengthAdjust="spacingAndGlyphs">White</text>
<text x="785.2" y="758.7" font-size="21.7" fill="#f4f4f4" textLength="26" lengthAdjust="spacingAndGlyphs">Red</text>
<text x="858" y="758.7" font-size="21.7" fill="#f4f4f4" textLength="42" lengthAdjust="spacingAndGlyphs">Green</text>
<text x="931.2" y="758.7" font-size="21.7" fill="#f4f4f4" textLength="30" lengthAdjust="spacingAndGlyphs">Blue</text>
<text x="993.7" y="758.7" font-size="21.7" fill="#f4f4f4" textLength="33.5" lengthAdjust="spacingAndGlyphs">Cyan</text>
<text x="1067" y="758.7" font-size="21.7" fill="#f4f4f4" textLength="60" lengthAdjust="spacingAndGlyphs">Magenta</text>
<text x="1139.5" y="758.7" font-size="21.7" fill="#f4f4f4" textLength="44" lengthAdjust="spacingAndGlyphs">Yellow</text>
<text x="1212.2" y="758.7" font-size="21.7" fill="#f4f4f4" textLength="40" lengthAdjust="spacingAndGlyphs">100W</text>
<rect x="631" y="771.9" width="660" height="37.4" fill="#3c3c3c"/>
<rect x="617" y="771.9" width="14" height="37.4" fill="url(#tc)"/>
<text x="635.2" y="798.7" font-size="27" fill="#f4f4f4" textLength="61" lengthAdjust="spacingAndGlyphs">x: CIE31</text>
<text x="711.6" y="798.7" font-size="27" fill="#f4f4f4" textLength="53.5" lengthAdjust="spacingAndGlyphs">0.3145</text>
<text x="784.6" y="798.7" font-size="27" fill="#f4f4f4" textLength="53.5" lengthAdjust="spacingAndGlyphs">0.6398</text>
<text x="857.4" y="798.7" font-size="27" fill="#f4f4f4" textLength="53.5" lengthAdjust="spacingAndGlyphs">0.3051</text>
<text x="930.6" y="798.7" font-size="27" fill="#f4f4f4" textLength="53.5" lengthAdjust="spacingAndGlyphs">0.1449</text>
<text x="993.1" y="798.7" font-size="27" fill="#f4f4f4" textLength="53.5" lengthAdjust="spacingAndGlyphs">0.2250</text>
<text x="1066.4" y="798.7" font-size="27" fill="#f4f4f4" textLength="53.5" lengthAdjust="spacingAndGlyphs">0.3041</text>
<text x="1138.9" y="798.7" font-size="27" fill="#f4f4f4" textLength="53.5" lengthAdjust="spacingAndGlyphs">0.4209</text>
<text x="1211.6" y="798.7" font-size="27" fill="#f4f4f4" textLength="53.5" lengthAdjust="spacingAndGlyphs">0.3153</text>
<rect x="631" y="809.3" width="660" height="37.4" fill="#7e7e7e"/>
<rect x="617" y="809.3" width="14" height="37.4" fill="url(#tc)"/>
<text x="635.2" y="836.1" font-size="27" fill="#f4f4f4" textLength="61" lengthAdjust="spacingAndGlyphs">y: CIE31</text>
<text x="711.6" y="836.1" font-size="27" fill="#f4f4f4" textLength="53.5" lengthAdjust="spacingAndGlyphs">0.3250</text>
<text x="784.6" y="836.1" font-size="27" fill="#f4f4f4" textLength="53.5" lengthAdjust="spacingAndGlyphs">0.3287</text>
<text x="857.4" y="836.1" font-size="27" fill="#f4f4f4" textLength="53.5" lengthAdjust="spacingAndGlyphs">0.5919</text>
<text x="930.6" y="836.1" font-size="27" fill="#f4f4f4" textLength="53.5" lengthAdjust="spacingAndGlyphs">0.0563</text>
<text x="993.1" y="836.1" font-size="27" fill="#f4f4f4" textLength="53.5" lengthAdjust="spacingAndGlyphs">0.3190</text>
<text x="1066.4" y="836.1" font-size="27" fill="#f4f4f4" textLength="53.5" lengthAdjust="spacingAndGlyphs">0.1442</text>
<text x="1138.9" y="836.1" font-size="27" fill="#f4f4f4" textLength="53.5" lengthAdjust="spacingAndGlyphs">0.5025</text>
<text x="1211.6" y="836.1" font-size="27" fill="#f4f4f4" textLength="53.5" lengthAdjust="spacingAndGlyphs">0.3260</text>
<rect x="631" y="846.7" width="660" height="37.4" fill="#3c3c3c"/>
<rect x="617" y="846.7" width="14" height="37.4" fill="url(#tc)"/>
<text x="635.2" y="873.5" font-size="27" fill="#f4f4f4" textLength="9.5" lengthAdjust="spacingAndGlyphs">Y</text>
<text x="711.6" y="873.5" font-size="27" fill="#f4f4f4" textLength="62.5" lengthAdjust="spacingAndGlyphs">61.3717</text>
<text x="784.6" y="873.5" font-size="27" fill="#f4f4f4" textLength="62.5" lengthAdjust="spacingAndGlyphs">11.2044</text>
<text x="857.4" y="873.5" font-size="27" fill="#f4f4f4" textLength="62.5" lengthAdjust="spacingAndGlyphs">42.5067</text>
<text x="930.6" y="873.5" font-size="27" fill="#f4f4f4" textLength="53.5" lengthAdjust="spacingAndGlyphs">4.1390</text>
<text x="993.1" y="873.5" font-size="27" fill="#f4f4f4" textLength="62.5" lengthAdjust="spacingAndGlyphs">46.7998</text>
<text x="1066.4" y="873.5" font-size="27" fill="#f4f4f4" textLength="62.5" lengthAdjust="spacingAndGlyphs">15.5907</text>
<text x="1138.9" y="873.5" font-size="27" fill="#f4f4f4" textLength="62.5" lengthAdjust="spacingAndGlyphs">56.9880</text>
<text x="1211.6" y="873.5" font-size="27" fill="#f4f4f4" textLength="72" lengthAdjust="spacingAndGlyphs">119.5323</text>
<rect x="631" y="884.1" width="660" height="37.4" fill="#7e7e7e"/>
<rect x="617" y="884.1" width="14" height="37.4" fill="url(#tc)"/>
<text x="635.2" y="910.9" font-size="27" fill="#f4f4f4" textLength="66" lengthAdjust="spacingAndGlyphs">Target Y</text>
<text x="711.6" y="910.9" font-size="27" fill="#f4f4f4" textLength="62.5" lengthAdjust="spacingAndGlyphs">61.3717</text>
<text x="784.6" y="910.9" font-size="27" fill="#f4f4f4" textLength="62.5" lengthAdjust="spacingAndGlyphs">13.0511</text>
<text x="857.4" y="910.9" font-size="27" fill="#f4f4f4" textLength="62.5" lengthAdjust="spacingAndGlyphs">43.8905</text>
<text x="930.6" y="910.9" font-size="27" fill="#f4f4f4" textLength="53.5" lengthAdjust="spacingAndGlyphs">4.4302</text>
<text x="993.1" y="910.9" font-size="27" fill="#f4f4f4" textLength="62.5" lengthAdjust="spacingAndGlyphs">48.3206</text>
<text x="1066.4" y="910.9" font-size="27" fill="#f4f4f4" textLength="62.5" lengthAdjust="spacingAndGlyphs">17.4812</text>
<text x="1138.9" y="910.9" font-size="27" fill="#f4f4f4" textLength="62.5" lengthAdjust="spacingAndGlyphs">56.9415</text>
<text x="1211.6" y="910.9" font-size="27" fill="#f4f4f4" textLength="72" lengthAdjust="spacingAndGlyphs">119.5323</text>
<rect x="631" y="921.5" width="660" height="37.4" fill="#3c3c3c"/>
<rect x="617" y="921.5" width="14" height="37.4" fill="url(#tc)"/>
<text x="635.2" y="948.3" font-size="27" fill="#f4f4f4" textLength="65" lengthAdjust="spacingAndGlyphs">ΔE 2000</text>
<text x="711.6" y="948.3" font-size="27" fill="#f4f4f4" textLength="53.5" lengthAdjust="spacingAndGlyphs">3.4612</text>
<text x="784.6" y="948.3" font-size="27" fill="#f4f4f4" textLength="53.5" lengthAdjust="spacingAndGlyphs">2.5702</text>
<text x="857.4" y="948.3" font-size="27" fill="#f4f4f4" textLength="53.5" lengthAdjust="spacingAndGlyphs">1.1169</text>
<text x="930.6" y="948.3" font-size="27" fill="#f4f4f4" textLength="53.5" lengthAdjust="spacingAndGlyphs">0.7362</text>
<text x="993.1" y="948.3" font-size="27" fill="#f4f4f4" textLength="53.5" lengthAdjust="spacingAndGlyphs">2.6503</text>
<text x="1066.4" y="948.3" font-size="27" fill="#f4f4f4" textLength="53.5" lengthAdjust="spacingAndGlyphs">2.6621</text>
<text x="1138.9" y="948.3" font-size="27" fill="#f4f4f4" textLength="53.5" lengthAdjust="spacingAndGlyphs">0.5580</text>
<text x="1211.6" y="948.3" font-size="27" fill="#f4f4f4" textLength="53.5" lengthAdjust="spacingAndGlyphs">4.0226</text>
<rect x="952" y="111" width="673" height="601.5" fill="#1c1c1c"/>
<rect x="958.8" y="118.5" width="659.2" height="587.5" fill="#333"/>
<rect x="987.4" y="144" width="628" height="530.1" fill="#242424"/>
<text x="1288.5" y="138.6" font-size="14.2" fill="#dcdcdc" text-anchor="middle" textLength="74" lengthAdjust="spacingAndGlyphs">CIE 1931 xy</text>
<g clip-path="url(#lc)"><rect x="1043" y="146" width="8" height="2" fill="url(#c0)"/><rect x="1032" y="148" width="32" height="2" fill="url(#c1)"/><rect x="1027" y="150" width="44" height="2" fill="url(#c2)"/><rect x="1024" y="152" width="53" height="2" fill="url(#c3)"/><rect x="1021" y="154" width="61" height="2" fill="url(#c4)"/><rect x="1018" y="156" width="69" height="2" fill="url(#c5)"/><rect x="1016" y="158" width="76" height="2" fill="url(#c6)"/><rect x="1014" y="160" width="82" height="2" fill="url(#c7)"/><rect x="1013" y="162" width="87" height="2" fill="url(#c8)"/><rect x="1011" y="164" width="94" height="2" fill="url(#c9)"/><rect x="1010" y="166" width="99" height="2" fill="url(#c10)"/><rect x="1008" y="168" width="105" height="2" fill="url(#c11)"/><rect x="1007" y="170" width="109" height="2" fill="url(#c12)"/><rect x="1006" y="172" width="114" height="2" fill="url(#c13)"/><rect x="1005" y="174" width="119" height="2" fill="url(#c14)"/><rect x="1004" y="176" width="123" height="2" fill="url(#c15)"/><rect x="1003" y="178" width="128" height="2" fill="url(#c16)"/><rect x="1002" y="180" width="132" height="2" fill="url(#c17)"/><rect x="1001" y="182" width="137" height="2" fill="url(#c18)"/><rect x="1001" y="184" width="140" height="2" fill="url(#c19)"/><rect x="1000" y="186" width="144" height="2" fill="url(#c20)"/><rect x="999" y="188" width="148" height="2" fill="url(#c21)"/><rect x="998" y="190" width="152" height="2" fill="url(#c22)"/><rect x="998" y="192" width="156" height="2" fill="url(#c23)"/><rect x="997" y="194" width="160" height="2" fill="url(#c24)"/><rect x="997" y="196" width="163" height="2" fill="url(#c25)"/><rect x="996" y="198" width="167" height="2" fill="url(#c26)"/><rect x="995" y="200" width="171" height="2" fill="url(#c27)"/><rect x="995" y="202" width="174" height="2" fill="url(#c28)"/><rect x="994" y="204" width="177" height="2" fill="url(#c29)"/><rect x="994" y="206" width="180" height="2" fill="url(#c30)"/><rect x="994" y="208" width="183" height="2" fill="url(#c31)"/><rect x="993" y="210" width="187" height="2" fill="url(#c32)"/><rect x="993" y="212" width="190" height="2" fill="url(#c33)"/><rect x="992" y="214" width="193" height="2" fill="url(#c34)"/><rect x="992" y="216" width="196" height="2" fill="url(#c35)"/><rect x="992" y="218" width="199" height="2" fill="url(#c36)"/><rect x="991" y="220" width="203" height="2" fill="url(#c37)"/><rect x="991" y="222" width="205" height="2" fill="url(#c38)"/><rect x="991" y="224" width="208" height="2" fill="url(#c39)"/><rect x="991" y="226" width="211" height="2" fill="url(#c40)"/><rect x="990" y="228" width="214" height="2" fill="url(#c41)"/><rect x="990" y="230" width="217" height="2" fill="url(#c42)"/><rect x="990" y="232" width="219" height="2" fill="url(#c43)"/><rect x="990" y="234" width="222" height="2" fill="url(#c44)"/><rect x="990" y="236" width="225" height="2" fill="url(#c45)"/><rect x="989" y="238" width="228" height="2" fill="url(#c46)"/><rect x="989" y="240" width="231" height="2" fill="url(#c47)"/><rect x="989" y="242" width="233" height="2" fill="url(#c48)"/><rect x="989" y="244" width="236" height="2" fill="url(#c49)"/><rect x="989" y="246" width="238" height="2" fill="url(#c50)"/><rect x="989" y="248" width="241" height="2" fill="url(#c51)"/><rect x="989" y="250" width="243" height="2" fill="url(#c52)"/><rect x="988" y="252" width="247" height="2" fill="url(#c53)"/><rect x="988" y="254" width="249" height="2" fill="url(#c54)"/><rect x="988" y="256" width="252" height="2" fill="url(#c55)"/><rect x="988" y="258" width="254" height="2" fill="url(#c56)"/><rect x="988" y="260" width="257" height="2" fill="url(#c57)"/><rect x="988" y="262" width="259" height="2" fill="url(#c58)"/><rect x="988" y="264" width="262" height="2" fill="url(#c59)"/><rect x="988" y="266" width="264" height="2" fill="url(#c60)"/><rect x="988" y="268" width="267" height="2" fill="url(#c61)"/><rect x="988" y="270" width="269" height="2" fill="url(#c62)"/><rect x="988" y="272" width="272" height="2" fill="url(#c63)"/><rect x="988" y="274" width="274" height="2" fill="url(#c64)"/><rect x="988" y="276" width="277" height="2" fill="url(#c65)"/><rect x="988" y="278" width="279" height="2" fill="url(#c66)"/><rect x="988" y="280" width="282" height="2" fill="url(#c67)"/><rect x="988" y="282" width="284" height="2" fill="url(#c68)"/><rect x="988" y="284" width="286" height="2" fill="url(#c69)"/><rect x="988" y="286" width="289" height="2" fill="url(#c70)"/><rect x="988" y="288" width="291" height="2" fill="url(#c71)"/><rect x="988" y="290" width="294" height="2" fill="url(#c72)"/><rect x="988" y="292" width="296" height="2" fill="url(#c73)"/><rect x="989" y="294" width="298" height="2" fill="url(#c74)"/><rect x="989" y="296" width="300" height="2" fill="url(#c75)"/><rect x="989" y="298" width="302" height="2" fill="url(#c76)"/><rect x="989" y="300" width="305" height="2" fill="url(#c77)"/><rect x="989" y="302" width="307" height="2" fill="url(#c78)"/><rect x="989" y="304" width="310" height="2" fill="url(#c79)"/><rect x="989" y="306" width="312" height="2" fill="url(#c80)"/><rect x="989" y="308" width="314" height="2" fill="url(#c81)"/><rect x="989" y="310" width="317" height="2" fill="url(#c82)"/><rect x="990" y="312" width="318" height="2" fill="url(#c83)"/><rect x="990" y="314" width="321" height="2" fill="url(#c84)"/><rect x="990" y="316" width="323" height="2" fill="url(#c85)"/><rect x="990" y="318" width="325" height="2" fill="url(#c86)"/><rect x="990" y="320" width="328" height="2" fill="url(#c87)"/><rect x="990" y="322" width="330" height="2" fill="url(#c88)"/><rect x="990" y="324" width="333" height="2" fill="url(#c89)"/><rect x="991" y="326" width="334" height="2" fill="url(#c90)"/><rect x="991" y="328" width="336" height="2" fill="url(#c91)"/><rect x="991" y="330" width="339" height="2" fill="url(#c92)"/><rect x="991" y="332" width="341" height="2" fill="url(#c93)"/><rect x="991" y="334" width="343" height="2" fill="url(#c94)"/><rect x="992" y="336" width="345" height="2" fill="url(#c95)"/><rect x="992" y="338" width="347" height="2" fill="url(#c96)"/><rect x="992" y="340" width="350" height="2" fill="url(#c97)"/><rect x="992" y="342" width="352" height="2" fill="url(#c98)"/><rect x="992" y="344" width="354" height="2" fill="url(#c99)"/><rect x="993" y="346" width="356" height="2" fill="url(#c100)"/><rect x="993" y="348" width="358" height="2" fill="url(#c101)"/><rect x="993" y="350" width="361" height="2" fill="url(#c102)"/><rect x="993" y="352" width="363" height="2" fill="url(#c103)"/><rect x="994" y="354" width="364" height="2" fill="url(#c104)"/><rect x="994" y="356" width="367" height="2" fill="url(#c105)"/><rect x="994" y="358" width="369" height="2" fill="url(#c106)"/><rect x="994" y="360" width="371" height="2" fill="url(#c107)"/><rect x="995" y="362" width="373" height="2" fill="url(#c108)"/><rect x="995" y="364" width="375" height="2" fill="url(#c109)"/><rect x="995" y="366" width="378" height="2" fill="url(#c110)"/><rect x="995" y="368" width="380" height="2" fill="url(#c111)"/><rect x="996" y="370" width="381" height="2" fill="url(#c112)"/><rect x="996" y="372" width="384" height="2" fill="url(#c113)"/><rect x="996" y="374" width="386" height="2" fill="url(#c114)"/><rect x="997" y="376" width="387" height="2" fill="url(#c115)"/><rect x="997" y="378" width="390" height="2" fill="url(#c116)"/><rect x="997" y="380" width="392" height="2" fill="url(#c117)"/><rect x="997" y="382" width="395" height="2" fill="url(#c118)"/><rect x="998" y="384" width="396" height="2" fill="url(#c119)"/><rect x="998" y="386" width="398" height="2" fill="url(#c120)"/><rect x="998" y="388" width="401" height="2" fill="url(#c121)"/><rect x="999" y="390" width="402" height="2" fill="url(#c122)"/><rect x="999" y="392" width="404" height="2" fill="url(#c123)"/><rect x="999" y="394" width="407" height="2" fill="url(#c124)"/><rect x="1000" y="396" width="408" height="2" fill="url(#c125)"/><rect x="1000" y="398" width="411" height="2" fill="url(#c126)"/><rect x="1000" y="400" width="413" height="2" fill="url(#c127)"/><rect x="1001" y="402" width="414" height="2" fill="url(#c128)"/><rect x="1001" y="404" width="417" height="2" fill="url(#c129)"/><rect x="1001" y="406" width="419" height="2" fill="url(#c130)"/><rect x="1002" y="408" width="421" height="2" fill="url(#c131)"/><rect x="1002" y="410" width="423" height="2" fill="url(#c132)"/><rect x="1003" y="412" width="424" height="2" fill="url(#c133)"/><rect x="1003" y="414" width="427" height="2" fill="url(#c134)"/><rect x="1003" y="416" width="429" height="2" fill="url(#c135)"/><rect x="1004" y="418" width="430" height="2" fill="url(#c136)"/><rect x="1004" y="420" width="433" height="2" fill="url(#c137)"/><rect x="1004" y="422" width="435" height="2" fill="url(#c138)"/><rect x="1005" y="424" width="437" height="2" fill="url(#c139)"/><rect x="1005" y="426" width="439" height="2" fill="url(#c140)"/><rect x="1006" y="428" width="440" height="2" fill="url(#c141)"/><rect x="1006" y="430" width="443" height="2" fill="url(#c142)"/><rect x="1006" y="432" width="445" height="2" fill="url(#c143)"/><rect x="1007" y="434" width="446" height="2" fill="url(#c144)"/><rect x="1007" y="436" width="449" height="2" fill="url(#c145)"/><rect x="1008" y="438" width="450" height="2" fill="url(#c146)"/><rect x="1008" y="440" width="453" height="2" fill="url(#c147)"/><rect x="1008" y="442" width="455" height="2" fill="url(#c148)"/><rect x="1009" y="444" width="456" height="2" fill="url(#c149)"/><rect x="1009" y="446" width="459" height="2" fill="url(#c150)"/><rect x="1010" y="448" width="460" height="2" fill="url(#c151)"/><rect x="1010" y="450" width="462" height="2" fill="url(#c152)"/><rect x="1011" y="452" width="464" height="2" fill="url(#c153)"/><rect x="1011" y="454" width="466" height="2" fill="url(#c154)"/><rect x="1012" y="456" width="468" height="2" fill="url(#c155)"/><rect x="1012" y="458" width="470" height="2" fill="url(#c156)"/><rect x="1012" y="460" width="472" height="2" fill="url(#c157)"/><rect x="1013" y="462" width="474" height="2" fill="url(#c158)"/><rect x="1013" y="464" width="476" height="2" fill="url(#c159)"/><rect x="1014" y="466" width="478" height="2" fill="url(#c160)"/><rect x="1014" y="468" width="480" height="2" fill="url(#c161)"/><rect x="1015" y="470" width="481" height="2" fill="url(#c162)"/><rect x="1015" y="472" width="484" height="2" fill="url(#c163)"/><rect x="1016" y="474" width="485" height="2" fill="url(#c164)"/><rect x="1016" y="476" width="487" height="2" fill="url(#c165)"/><rect x="1017" y="478" width="489" height="2" fill="url(#c166)"/><rect x="1017" y="480" width="491" height="2" fill="url(#c167)"/><rect x="1018" y="482" width="493" height="2" fill="url(#c168)"/><rect x="1018" y="484" width="495" height="2" fill="url(#c169)"/><rect x="1019" y="486" width="496" height="2" fill="url(#c170)"/><rect x="1019" y="488" width="499" height="2" fill="url(#c171)"/><rect x="1020" y="490" width="500" height="2" fill="url(#c172)"/><rect x="1020" y="492" width="503" height="2" fill="url(#c173)"/><rect x="1021" y="494" width="504" height="2" fill="url(#c174)"/><rect x="1021" y="496" width="506" height="2" fill="url(#c175)"/><rect x="1022" y="498" width="508" height="2" fill="url(#c176)"/><rect x="1022" y="500" width="510" height="2" fill="url(#c177)"/><rect x="1023" y="502" width="511" height="2" fill="url(#c178)"/><rect x="1023" y="504" width="514" height="2" fill="url(#c179)"/><rect x="1024" y="506" width="514" height="2" fill="url(#c180)"/><rect x="1025" y="508" width="510" height="2" fill="url(#c181)"/><rect x="1025" y="510" width="505" height="2" fill="url(#c182)"/><rect x="1026" y="512" width="498" height="2" fill="url(#c183)"/><rect x="1026" y="514" width="493" height="2" fill="url(#c184)"/><rect x="1027" y="516" width="487" height="2" fill="url(#c185)"/><rect x="1027" y="518" width="482" height="2" fill="url(#c186)"/><rect x="1028" y="520" width="476" height="2" fill="url(#c187)"/><rect x="1029" y="522" width="470" height="2" fill="url(#c188)"/><rect x="1029" y="524" width="465" height="2" fill="url(#c189)"/><rect x="1030" y="526" width="459" height="2" fill="url(#c190)"/><rect x="1030" y="528" width="454" height="2" fill="url(#c191)"/><rect x="1031" y="530" width="447" height="2" fill="url(#c192)"/><rect x="1032" y="532" width="441" height="2" fill="url(#c193)"/><rect x="1032" y="534" width="436" height="2" fill="url(#c194)"/><rect x="1033" y="536" width="430" height="2" fill="url(#c195)"/><rect x="1033" y="538" width="425" height="2" fill="url(#c196)"/><rect x="1034" y="540" width="419" height="2" fill="url(#c197)"/><rect x="1035" y="542" width="413" height="2" fill="url(#c198)"/><rect x="1035" y="544" width="408" height="2" fill="url(#c199)"/><rect x="1036" y="546" width="402" height="2" fill="url(#c200)"/><rect x="1037" y="548" width="396" height="2" fill="url(#c201)"/><rect x="1038" y="550" width="389" height="2" fill="url(#c202)"/><rect x="1038" y="552" width="384" height="2" fill="url(#c203)"/><rect x="1039" y="554" width="378" height="2" fill="url(#c204)"/><rect x="1040" y="556" width="372" height="2" fill="url(#c205)"/><rect x="1040" y="558" width="367" height="2" fill="url(#c206)"/><rect x="1041" y="560" width="361" height="2" fill="url(#c207)"/><rect x="1042" y="562" width="355" height="2" fill="url(#c208)"/><rect x="1043" y="564" width="349" height="2" fill="url(#c209)"/><rect x="1043" y="566" width="344" height="2" fill="url(#c210)"/><rect x="1044" y="568" width="338" height="2" fill="url(#c211)"/><rect x="1045" y="570" width="331" height="2" fill="url(#c212)"/><rect x="1046" y="572" width="325" height="2" fill="url(#c213)"/><rect x="1047" y="574" width="319" height="2" fill="url(#c214)"/><rect x="1047" y="576" width="314" height="2" fill="url(#c215)"/><rect x="1048" y="578" width="308" height="2" fill="url(#c216)"/><rect x="1049" y="580" width="302" height="2" fill="url(#c217)"/><rect x="1050" y="582" width="296" height="2" fill="url(#c218)"/><rect x="1051" y="584" width="290" height="2" fill="url(#c219)"/><rect x="1052" y="586" width="284" height="2" fill="url(#c220)"/><rect x="1053" y="588" width="277" height="2" fill="url(#c221)"/><rect x="1053" y="590" width="272" height="2" fill="url(#c222)"/><rect x="1054" y="592" width="266" height="2" fill="url(#c223)"/><rect x="1055" y="594" width="260" height="2" fill="url(#c224)"/><rect x="1056" y="596" width="254" height="2" fill="url(#c225)"/><rect x="1057" y="598" width="248" height="2" fill="url(#c226)"/><rect x="1058" y="600" width="242" height="2" fill="url(#c227)"/><rect x="1059" y="602" width="236" height="2" fill="url(#c228)"/><rect x="1060" y="604" width="230" height="2" fill="url(#c229)"/><rect x="1061" y="606" width="224" height="2" fill="url(#c230)"/><rect x="1062" y="608" width="217" height="2" fill="url(#c231)"/><rect x="1063" y="610" width="211" height="2" fill="url(#c232)"/><rect x="1063" y="612" width="206" height="2" fill="url(#c233)"/><rect x="1064" y="614" width="200" height="2" fill="url(#c234)"/><rect x="1065" y="616" width="194" height="2" fill="url(#c235)"/><rect x="1067" y="618" width="187" height="2" fill="url(#c236)"/><rect x="1068" y="620" width="181" height="2" fill="url(#c237)"/><rect x="1069" y="622" width="175" height="2" fill="url(#c238)"/><rect x="1070" y="624" width="169" height="2" fill="url(#c239)"/><rect x="1071" y="626" width="163" height="2" fill="url(#c240)"/><rect x="1072" y="628" width="156" height="2" fill="url(#c241)"/><rect x="1073" y="630" width="150" height="2" fill="url(#c242)"/><rect x="1074" y="632" width="144" height="2" fill="url(#c243)"/><rect x="1076" y="634" width="137" height="2" fill="url(#c244)"/><rect x="1077" y="636" width="131" height="2" fill="url(#c245)"/><rect x="1078" y="638" width="125" height="2" fill="url(#c246)"/><rect x="1080" y="640" width="118" height="2" fill="url(#c247)"/><rect x="1081" y="642" width="112" height="2" fill="url(#c248)"/><rect x="1083" y="644" width="105" height="2" fill="url(#c249)"/><rect x="1084" y="646" width="98" height="2" fill="url(#c250)"/><rect x="1086" y="648" width="91" height="2" fill="url(#c251)"/><rect x="1087" y="650" width="85" height="2" fill="url(#c252)"/><rect x="1089" y="652" width="78" height="2" fill="url(#c253)"/><rect x="1091" y="654" width="71" height="2" fill="url(#c254)"/><rect x="1094" y="656" width="63" height="2" fill="url(#c255)"/><rect x="1096" y="658" width="56" height="2" fill="url(#c256)"/><rect x="1098" y="660" width="49" height="2" fill="url(#c257)"/><rect x="1101" y="662" width="41" height="2" fill="url(#c258)"/><rect x="1104" y="664" width="33" height="2" fill="url(#c259)"/><rect x="1106" y="666" width="25" height="2" fill="url(#c260)"/><rect x="1109" y="668" width="17" height="2" fill="url(#c261)"/><rect x="1112" y="670" width="9" height="2" fill="url(#c262)"/></g>
<path d="M1117.0 671.1L1117.0 671.1L1116.9 671.1L1116.9 671.1L1116.8 671.1L1116.8 671.1L1116.7 671.1L1116.6 671.1L1116.6 671.1L1116.5 671.1L1116.4 671.2L1116.3 671.2L1116.2 671.2L1116.1 671.2L1116.0 671.2L1115.9 671.2L1115.7 671.2L1115.6 671.2L1115.4 671.1L1115.2 671.1L1115.0 671.0L1114.7 670.8L1114.3 670.7L1114.0 670.4L1113.6 670.2L1113.1 669.8L1112.5 669.5L1111.9 669.0L1111.3 668.5L1110.5 668.0L1109.7 667.3L1108.8 666.7L1107.8 665.9L1106.7 665.1L1105.4 664.1L1103.9 663.0L1102.4 661.9L1100.6 660.6L1098.7 659.1L1096.7 657.4L1094.5 655.5L1092.1 653.2L1089.5 650.6L1086.6 647.3L1083.3 643.0L1079.6 637.7L1075.6 631.4L1071.1 623.8L1066.3 614.6L1060.9 603.5L1055.1 590.5L1048.6 575.2L1041.7 557.4L1034.7 537.0L1027.7 513.9L1020.7 488.1L1013.9 459.7L1007.4 429.4L1001.5 398.0L996.7 366.1L992.9 334.5L990.4 303.7L989.5 274.8L990.3 247.7L992.8 222.8L997.2 200.8L1003.4 182.3L1011.3 167.6L1020.7 157.2L1031.2 150.8L1042.4 148.1L1054.1 148.4L1066.1 151.0L1078.3 155.0L1090.5 160.1L1102.5 165.7L1114.1 171.6L1125.4 177.8L1136.6 184.3L1147.6 191.1L1158.5 198.2L1169.4 205.6L1180.2 213.3L1190.9 221.1L1201.6 229.1L1212.3 237.4L1223.0 245.7L1233.7 254.2L1244.4 262.8L1255.1 271.4L1265.8 280.2L1276.5 288.9L1287.1 297.8L1297.8 306.6L1308.3 315.4L1318.9 324.2L1329.3 332.9L1339.7 341.6L1349.9 350.3L1360.1 358.8L1370.0 367.2L1379.8 375.4L1389.5 383.5L1398.9 391.4L1408.0 399.0L1416.9 406.5L1425.5 413.7L1433.7 420.7L1441.5 427.2L1448.8 433.3L1455.7 439.2L1462.3 444.7L1468.6 450.0L1474.4 454.8L1479.7 459.3L1484.7 463.4L1489.2 467.3L1493.4 470.8L1497.2 474.0L1500.7 477.0L1503.9 479.6L1506.8 482.1L1509.5 484.3L1511.9 486.3L1514.1 488.2L1516.2 489.9L1518.1 491.6L1519.9 493.1L1521.6 494.5L1523.1 495.7L1524.5 496.9L1525.8 498.0L1526.9 499.0L1528.0 499.9L1528.9 500.6L1529.7 501.3L1530.4 501.9L1531.1 502.5L1531.7 503.0L1532.2 503.4L1532.7 503.8L1533.0 504.1L1533.4 504.4L1533.7 504.6L1533.9 504.9L1534.2 505.1L1534.4 505.3L1534.6 505.5L1534.8 505.6L1535.0 505.8L1535.2 506.0L1535.4 506.2L1535.6 506.3L1535.8 506.4L1535.9 506.5L1536.0 506.6L1536.0 506.7L1536.1 506.7L1536.1 506.7L1536.2 506.8L1536.2 506.8ZM1465.4 466.0L1211.1 295.6L1099.0 636.3Z" fill="#000" fill-opacity=".4" fill-rule="evenodd"/>
<path d="M987.4 681.1V144H1615.4V674.1" fill="none" stroke="#a8a8a8" stroke-width="1.600"/>
<rect x="981.4" y="673.4" width="634" height="1.4" fill="#a8a8a8"/>
<rect x="986.6" y="674.1" width="1.6" height="7" fill="#a8a8a8"/>
<text x="987.4" y="698.3" font-size="15" fill="#dcdcdc" text-anchor="middle">0</text>
<text x="980.4" y="681.2" font-size="15" fill="#dcdcdc" text-anchor="end">0</text>
<rect x="1061.32" y="674.1" width="1.6" height="7" fill="#ddd"/>
<text x="1062.12" y="698.3" font-size="15" fill="#dcdcdc" text-anchor="middle" textLength="19.5" lengthAdjust="spacingAndGlyphs">0.1</text>
<rect x="981.4" y="610.34" width="6" height="1.6" fill="#ddd"/>
<text x="980.4" y="616.54" font-size="15" fill="#dcdcdc" text-anchor="end" textLength="19.5" lengthAdjust="spacingAndGlyphs">0.1</text>
<rect x="1136.04" y="674.1" width="1.6" height="7" fill="#ddd"/>
<text x="1136.84" y="698.3" font-size="15" fill="#dcdcdc" text-anchor="middle" textLength="19.5" lengthAdjust="spacingAndGlyphs">0.2</text>
<rect x="981.4" y="547.38" width="6" height="1.6" fill="#ddd"/>
<text x="980.4" y="553.58" font-size="15" fill="#dcdcdc" text-anchor="end" textLength="19.5" lengthAdjust="spacingAndGlyphs">0.2</text>
<rect x="1210.76" y="674.1" width="1.6" height="7" fill="#ddd"/>
<text x="1211.56" y="698.3" font-size="15" fill="#dcdcdc" text-anchor="middle" textLength="19.5" lengthAdjust="spacingAndGlyphs">0.3</text>
<rect x="981.4" y="484.42" width="6" height="1.6" fill="#ddd"/>
<text x="980.4" y="490.62" font-size="15" fill="#dcdcdc" text-anchor="end" textLength="19.5" lengthAdjust="spacingAndGlyphs">0.3</text>
<rect x="1285.48" y="674.1" width="1.6" height="7" fill="#ddd"/>
<text x="1286.28" y="698.3" font-size="15" fill="#dcdcdc" text-anchor="middle" textLength="19.5" lengthAdjust="spacingAndGlyphs">0.4</text>
<rect x="981.4" y="421.46" width="6" height="1.6" fill="#ddd"/>
<text x="980.4" y="427.66" font-size="15" fill="#dcdcdc" text-anchor="end" textLength="19.5" lengthAdjust="spacingAndGlyphs">0.4</text>
<rect x="1360.2" y="674.1" width="1.6" height="7" fill="#ddd"/>
<text x="1361" y="698.3" font-size="15" fill="#dcdcdc" text-anchor="middle" textLength="19.5" lengthAdjust="spacingAndGlyphs">0.5</text>
<rect x="981.4" y="358.5" width="6" height="1.6" fill="#ddd"/>
<text x="980.4" y="364.7" font-size="15" fill="#dcdcdc" text-anchor="end" textLength="19.5" lengthAdjust="spacingAndGlyphs">0.5</text>
<rect x="1434.92" y="674.1" width="1.6" height="7" fill="#ddd"/>
<text x="1435.72" y="698.3" font-size="15" fill="#dcdcdc" text-anchor="middle" textLength="19.5" lengthAdjust="spacingAndGlyphs">0.6</text>
<rect x="981.4" y="295.54" width="6" height="1.6" fill="#ddd"/>
<text x="980.4" y="301.74" font-size="15" fill="#dcdcdc" text-anchor="end" textLength="19.5" lengthAdjust="spacingAndGlyphs">0.6</text>
<rect x="1509.64" y="674.1" width="1.6" height="7" fill="#ddd"/>
<text x="1510.44" y="698.3" font-size="15" fill="#dcdcdc" text-anchor="middle" textLength="19.5" lengthAdjust="spacingAndGlyphs">0.7</text>
<rect x="981.4" y="232.58" width="6" height="1.6" fill="#ddd"/>
<text x="980.4" y="238.78" font-size="15" fill="#dcdcdc" text-anchor="end" textLength="19.5" lengthAdjust="spacingAndGlyphs">0.7</text>
<rect x="1584.36" y="674.1" width="1.6" height="7" fill="#ddd"/>
<text x="1585.16" y="698.3" font-size="15" fill="#dcdcdc" text-anchor="middle" textLength="19.5" lengthAdjust="spacingAndGlyphs">0.8</text>
<rect x="981.4" y="169.62" width="6" height="1.6" fill="#ddd"/>
<text x="980.4" y="175.82" font-size="15" fill="#dcdcdc" text-anchor="end" textLength="19.5" lengthAdjust="spacingAndGlyphs">0.8</text>
<rect x="1458.8" y="458.3" width="12.600" height="14.800" fill="none" stroke="#fff" stroke-width="1.400"/>
<rect x="1204.8" y="288.3" width="12.600" height="14.800" fill="none" stroke="#fff" stroke-width="1.400"/>
<rect x="1092.7" y="628.3" width="12.600" height="14.800" fill="none" stroke="#fff" stroke-width="1.400"/>
<rect x="1148.4" y="459.2" width="12.600" height="14.800" fill="none" stroke="#fff" stroke-width="1.400"/>
<rect x="1220.4" y="569.0" width="12.600" height="14.800" fill="none" stroke="#fff" stroke-width="1.400"/>
<rect x="1293.9" y="348.0" width="12.600" height="14.800" fill="none" stroke="#fff" stroke-width="1.400"/>
<ellipse cx="1465.0" cy="466.7" rx="4.100" ry="4.400" fill="#c00000" stroke="#000" stroke-width="1.200"/>
<ellipse cx="1214.9" cy="300.9" rx="4.100" ry="4.400" fill="#00b400" stroke="#000" stroke-width="1.200"/>
<ellipse cx="1095.2" cy="638.2" rx="4.100" ry="4.400" fill="#0000c0" stroke="#000" stroke-width="1.200"/>
<ellipse cx="1155.0" cy="472.8" rx="4.100" ry="4.400" fill="#00b4b4" stroke="#000" stroke-width="1.200"/>
<ellipse cx="1214.1" cy="582.8" rx="4.100" ry="4.400" fill="#b000b8" stroke="#000" stroke-width="1.200"/>
<ellipse cx="1301.4" cy="357.2" rx="4.100" ry="4.400" fill="#b4b400" stroke="#000" stroke-width="1.200"/>
<rect x="1214.5" y="459.5" width="12" height="14" fill="none" stroke="#000" stroke-width="2"/>
<ellipse cx="1222.8" cy="467.8" rx="3.800" ry="4.200" fill="#fff" stroke="#000" stroke-width="1.200"/>
<rect x="1394.3" y="148.4" width="218" height="205" fill="#2b2b2b"/>
<rect x="1397" y="151" width="212.4" height="200" fill="#8c8c8c"/>
<clipPath id="ic"><rect x="1398" y="152" width="210.600" height="198.200"/></clipPath>
<g clip-path="url(#ic)"><rect x="1397" y="151" width="212" height="2" fill="url(#i0)"/><rect x="1397" y="153" width="212" height="2" fill="url(#i1)"/><rect x="1397" y="155" width="212" height="2" fill="url(#i2)"/><rect x="1397" y="157" width="212" height="2" fill="url(#i3)"/><rect x="1397" y="159" width="212" height="2" fill="url(#i4)"/><rect x="1397" y="161" width="212" height="2" fill="url(#i5)"/><rect x="1397" y="163" width="212" height="2" fill="url(#i6)"/><rect x="1397" y="165" width="212" height="2" fill="url(#i7)"/><rect x="1397" y="167" width="212" height="2" fill="url(#i8)"/><rect x="1397" y="169" width="212" height="2" fill="url(#i9)"/><rect x="1397" y="171" width="212" height="2" fill="url(#i10)"/><rect x="1397" y="173" width="212" height="2" fill="url(#i11)"/><rect x="1397" y="175" width="212" height="2" fill="url(#i12)"/><rect x="1397" y="177" width="212" height="2" fill="url(#i13)"/><rect x="1397" y="179" width="212" height="2" fill="url(#i14)"/><rect x="1397" y="181" width="212" height="2" fill="url(#i15)"/><rect x="1397" y="183" width="212" height="2" fill="url(#i16)"/><rect x="1397" y="185" width="212" height="2" fill="url(#i17)"/><rect x="1397" y="187" width="212" height="2" fill="url(#i18)"/><rect x="1397" y="189" width="212" height="2" fill="url(#i19)"/><rect x="1397" y="191" width="212" height="2" fill="url(#i20)"/><rect x="1397" y="193" width="212" height="2" fill="url(#i21)"/><rect x="1397" y="195" width="212" height="2" fill="url(#i22)"/><rect x="1397" y="197" width="212" height="2" fill="url(#i23)"/><rect x="1397" y="199" width="212" height="2" fill="url(#i24)"/><rect x="1397" y="201" width="212" height="2" fill="url(#i25)"/><rect x="1397" y="203" width="212" height="2" fill="url(#i26)"/><rect x="1397" y="205" width="212" height="2" fill="url(#i27)"/><rect x="1397" y="207" width="212" height="2" fill="url(#i28)"/><rect x="1397" y="209" width="212" height="2" fill="url(#i29)"/><rect x="1397" y="211" width="212" height="2" fill="url(#i30)"/><rect x="1397" y="213" width="212" height="2" fill="url(#i31)"/><rect x="1397" y="215" width="212" height="2" fill="url(#i32)"/><rect x="1397" y="217" width="212" height="2" fill="url(#i33)"/><rect x="1397" y="219" width="212" height="2" fill="url(#i34)"/><rect x="1397" y="221" width="212" height="2" fill="url(#i35)"/><rect x="1397" y="223" width="212" height="2" fill="url(#i36)"/><rect x="1397" y="225" width="212" height="2" fill="url(#i37)"/><rect x="1397" y="227" width="212" height="2" fill="url(#i38)"/><rect x="1397" y="229" width="212" height="2" fill="url(#i39)"/><rect x="1397" y="231" width="212" height="2" fill="url(#i40)"/><rect x="1397" y="233" width="212" height="2" fill="url(#i41)"/><rect x="1397" y="235" width="212" height="2" fill="url(#i42)"/><rect x="1397" y="237" width="212" height="2" fill="url(#i43)"/><rect x="1397" y="239" width="212" height="2" fill="url(#i44)"/><rect x="1397" y="241" width="212" height="2" fill="url(#i45)"/><rect x="1397" y="243" width="212" height="2" fill="url(#i46)"/><rect x="1397" y="245" width="212" height="2" fill="url(#i47)"/><rect x="1397" y="247" width="212" height="2" fill="url(#i48)"/><rect x="1397" y="249" width="212" height="2" fill="url(#i49)"/><rect x="1397" y="251" width="212" height="2" fill="url(#i50)"/><rect x="1397" y="253" width="212" height="2" fill="url(#i51)"/><rect x="1397" y="255" width="212" height="2" fill="url(#i52)"/><rect x="1397" y="257" width="212" height="2" fill="url(#i53)"/><rect x="1397" y="259" width="212" height="2" fill="url(#i54)"/><rect x="1397" y="261" width="212" height="2" fill="url(#i55)"/><rect x="1397" y="263" width="212" height="2" fill="url(#i56)"/><rect x="1397" y="265" width="212" height="2" fill="url(#i57)"/><rect x="1397" y="267" width="212" height="2" fill="url(#i58)"/><rect x="1397" y="269" width="212" height="2" fill="url(#i59)"/><rect x="1397" y="271" width="212" height="2" fill="url(#i60)"/><rect x="1397" y="273" width="212" height="2" fill="url(#i61)"/><rect x="1397" y="275" width="212" height="2" fill="url(#i62)"/><rect x="1397" y="277" width="212" height="2" fill="url(#i63)"/><rect x="1397" y="279" width="212" height="2" fill="url(#i64)"/><rect x="1397" y="281" width="212" height="2" fill="url(#i65)"/><rect x="1397" y="283" width="212" height="2" fill="url(#i66)"/><rect x="1397" y="285" width="212" height="2" fill="url(#i67)"/><rect x="1397" y="287" width="212" height="2" fill="url(#i68)"/><rect x="1397" y="289" width="212" height="2" fill="url(#i69)"/><rect x="1397" y="291" width="212" height="2" fill="url(#i70)"/><rect x="1397" y="293" width="212" height="2" fill="url(#i71)"/><rect x="1397" y="295" width="212" height="2" fill="url(#i72)"/><rect x="1397" y="297" width="212" height="2" fill="url(#i73)"/><rect x="1397" y="299" width="212" height="2" fill="url(#i74)"/><rect x="1397" y="301" width="212" height="2" fill="url(#i75)"/><rect x="1397" y="303" width="212" height="2" fill="url(#i76)"/><rect x="1397" y="305" width="212" height="2" fill="url(#i77)"/><rect x="1397" y="307" width="212" height="2" fill="url(#i78)"/><rect x="1397" y="309" width="212" height="2" fill="url(#i79)"/><rect x="1397" y="311" width="212" height="2" fill="url(#i80)"/><rect x="1397" y="313" width="212" height="2" fill="url(#i81)"/><rect x="1397" y="315" width="212" height="2" fill="url(#i82)"/><rect x="1397" y="317" width="212" height="2" fill="url(#i83)"/><rect x="1397" y="319" width="212" height="2" fill="url(#i84)"/><rect x="1397" y="321" width="212" height="2" fill="url(#i85)"/><rect x="1397" y="323" width="212" height="2" fill="url(#i86)"/><rect x="1397" y="325" width="212" height="2" fill="url(#i87)"/><rect x="1397" y="327" width="212" height="2" fill="url(#i88)"/><rect x="1397" y="329" width="212" height="2" fill="url(#i89)"/><rect x="1397" y="331" width="212" height="2" fill="url(#i90)"/><rect x="1397" y="333" width="212" height="2" fill="url(#i91)"/><rect x="1397" y="335" width="212" height="2" fill="url(#i92)"/><rect x="1397" y="337" width="212" height="2" fill="url(#i93)"/><rect x="1397" y="339" width="212" height="2" fill="url(#i94)"/><rect x="1397" y="341" width="212" height="2" fill="url(#i95)"/><rect x="1397" y="343" width="212" height="2" fill="url(#i96)"/><rect x="1397" y="345" width="212" height="2" fill="url(#i97)"/><rect x="1397" y="347" width="212" height="2" fill="url(#i98)"/><rect x="1397" y="349" width="212" height="2" fill="url(#i99)"/></g>
<rect x="1495" y="243.300" width="13.500" height="13.500" fill="none" stroke="#000" stroke-width="2"/>
<circle cx="1509.300" cy="266.800" r="4.300" fill="#c0c0c0" stroke="#000" stroke-width="1.100"/>
<circle cx="1513.700" cy="261.900" r="4.300" fill="#fff" stroke="#000" stroke-width="1.100"/>
<rect x="1367" y="640.2" width="245.3" height="28.5" fill="#2e2e2e"/>
<text x="1368" y="663" font-size="20" fill="#f2f2f2" textLength="215" lengthAdjust="spacingAndGlyphs">Gamut Coverage:  98.7%</text>
<rect x="8" y="976.5" width="1618" height="62" fill="url(#bb)"/>
<rect x="0" y="1040" width="1627" height="7" fill="#eee"/>
<rect x="0" y="1040" width="15" height="7" fill="#fff"/>
<rect x="8" y="1037.6" width="1619" height="2.4" fill="#080808"/>
<rect x="9.1" y="977" width="149.600" height="60.800" rx="4.500" fill="url(#bt)"/>
<rect x="13.9" y="982.500" width="140.200" height="35.800" rx="3" fill="#c0c0c0" stroke="#555" stroke-width=".8" stroke-opacity=".7"/>
<text x="83.9" y="1032.5" font-size="10.8" fill="#2c2c2c" text-anchor="middle" font-weight="bold">White</text>
<rect x="161.1" y="977" width="149.600" height="60.800" rx="4.500" fill="url(#bt)"/>
<rect x="165.9" y="982.500" width="140.200" height="35.800" rx="3" fill="#c00000" stroke="#555" stroke-width=".8" stroke-opacity=".7"/>
<text x="235.9" y="1032.5" font-size="10.8" fill="#2c2c2c" text-anchor="middle" font-weight="bold">Red</text>
<rect x="313.1" y="977" width="149.600" height="60.800" rx="4.500" fill="url(#bt)"/>
<rect x="317.9" y="982.500" width="140.200" height="35.800" rx="3" fill="#00c000" stroke="#555" stroke-width=".8" stroke-opacity=".7"/>
<text x="387.9" y="1032.5" font-size="10.8" fill="#2c2c2c" text-anchor="middle" font-weight="bold">Green</text>
<rect x="465.1" y="977" width="149.600" height="60.800" rx="4.500" fill="url(#bt)"/>
<rect x="469.9" y="982.500" width="140.200" height="35.800" rx="3" fill="#0000c0" stroke="#555" stroke-width=".8" stroke-opacity=".7"/>
<text x="539.9" y="1032.5" font-size="10.8" fill="#2c2c2c" text-anchor="middle" font-weight="bold">Blue</text>
<rect x="617.1" y="977" width="149.600" height="60.800" rx="4.500" fill="url(#bt)"/>
<rect x="621.9" y="982.500" width="140.200" height="35.800" rx="3" fill="#00c0c0" stroke="#555" stroke-width=".8" stroke-opacity=".7"/>
<text x="691.9" y="1032.5" font-size="10.8" fill="#2c2c2c" text-anchor="middle" font-weight="bold">Cyan</text>
<rect x="769.1" y="977" width="149.600" height="60.800" rx="4.500" fill="url(#bt)"/>
<rect x="773.9" y="982.500" width="140.200" height="35.800" rx="3" fill="#c000c0" stroke="#555" stroke-width=".8" stroke-opacity=".7"/>
<text x="843.9" y="1032.5" font-size="10.8" fill="#2c2c2c" text-anchor="middle" font-weight="bold">Magenta</text>
<rect x="921.1" y="977" width="149.600" height="60.800" rx="4.500" fill="url(#bt)"/>
<rect x="925.9" y="982.500" width="140.200" height="35.800" rx="3" fill="#c0c000" stroke="#555" stroke-width=".8" stroke-opacity=".7"/>
<text x="995.9" y="1032.5" font-size="10.8" fill="#2c2c2c" text-anchor="middle" font-weight="bold">Yellow</text>
<rect x="1073.1" y="977" width="149.600" height="60.800" rx="4.500" fill="url(#bsel)"/>
<rect x="1077.9" y="982.500" width="140.200" height="35.800" rx="3" fill="#fff" stroke="#222" stroke-width=".8" stroke-opacity=".7"/>
<text x="1147.9" y="1032.5" font-size="10.8" fill="#fff" text-anchor="middle" font-weight="bold">100W</text>
<path d="M1303.500 995V981Q1303.500 977.200 1307.500 977.200H1350.700V995Z" fill="url(#cb)"/>
<path d="M1303.500 996H1350.700V1037.900H1307.500Q1303.500 1037.900 1303.500 1034Z" fill="url(#cbs)"/>
<circle cx="1327" cy="985.500" r="7" fill="url(#cc)"/><path d="M1322.500 987.500h9l-4.500-4.500z" fill="#333"/>
<rect x="1312.700" y="1002.500" width="28.600" height="28.600" rx="3.500" fill="url(#cbs)" stroke="#2a2a2a" stroke-width="2.200"/>
<rect x="1320" y="1010" width="14" height="13.5" fill="#0c0c0c"/>
<rect x="1352.2" y="977.2" width="44.4" height="29.7" fill="url(#cb)"/>
<circle cx="1374.8" cy="991.800" r="10" fill="url(#cc)"/>
<rect x="1397.42" y="977.2" width="44.4" height="29.7" fill="url(#cb)"/>
<circle cx="1420.02" cy="991.800" r="10" fill="url(#cc)"/>
<rect x="1442.64" y="977.2" width="44.4" height="29.7" fill="url(#cb)"/>
<circle cx="1465.24" cy="991.800" r="10" fill="url(#cc)"/>
<rect x="1487.86" y="977.2" width="44.4" height="29.7" fill="url(#cb)"/>
<circle cx="1510.46" cy="991.800" r="10" fill="url(#cc)"/>
<rect x="1533.08" y="977.2" width="44.4" height="29.7" fill="url(#cb)"/>
<circle cx="1555.68" cy="991.800" r="10" fill="url(#cc)"/>
<rect x="1578.5" y="977.2" width="46" height="29.7" fill="#2c2c2c"/>
<circle cx="1601.700" cy="991.800" r="10" fill="#3a3a3a"/>
<rect x="1370.3" y="987.2" width="9.2" height="9.2" fill="#2c2c2c"/>
<path d="M1416.500 986l9 5.800l-9 5.800z" fill="#2c2c2c"/>
<text x="1465.6" y="995.3" font-size="9.5" fill="#2c2c2c" text-anchor="middle" font-weight="bold">[··]</text>
<text x="1511.2" y="996.5" font-size="15" fill="#2c2c2c" text-anchor="middle" font-weight="bold">∞</text>
<path d="M1551.200 990.800a5.200 5.200 0 0 1 9.300-2.300M1561.200 992.800a5.200 5.200 0 0 1-9.300 2.300" fill="none" stroke="#2c2c2c" stroke-width="2.200"/><path d="M1562.500 985.500v5h-5zM1549.900 998.100v-5h5z" fill="#2c2c2c"/>
<path d="M1352.200 1008.300H1487.800V1037.900H1352.200Z" fill="url(#cb2)"/>
<path d="M1488.800 1008.300H1620.500Q1624.500 1008.300 1624.500 1012.300V1037.900H1488.800Z" fill="url(#cb2)"/>
<circle cx="1382.600" cy="1023.400" r="10" fill="url(#cc)"/><circle cx="1596.100" cy="1023.400" r="10" fill="url(#cc)"/>
<text x="1382.6" y="1030.2" font-size="21" fill="#333" text-anchor="middle">«</text>
<text x="1596.1" y="1030.2" font-size="21" fill="#333" text-anchor="middle">»</text>
<text x="1409" y="1031.2" font-size="22.3" fill="#333" font-weight="bold" textLength="51.5" lengthAdjust="spacingAndGlyphs">Back</text>
<text x="1515.5" y="1031.2" font-size="22.3" fill="#333" font-weight="bold" textLength="52.5" lengthAdjust="spacingAndGlyphs">Next</text>
<rect x="1622.2" y="1040" width="1" height="7" fill="#999"/>
<clipPath id="bc"><rect x="1500" y="1040" width="100" height="7"/></clipPath>
<text x="1520" y="1054.3" font-size="11.5" fill="#222" textLength="29" lengthAdjust="spacingAndGlyphs" clip-path="url(#bc)">17:47</text>
<circle cx="755.400" cy="1008.600" r="27.300" fill="#fff"/>
<path d="M765.400 983.200A27.300 27.300 0 1 0 748.600 1035Z" fill="#1488bd"/>
<g stroke="#000" stroke-linejoin="round">
<circle cx="737.300" cy="1005" r="2.300" fill="#fff" stroke-width="1.400"/><circle cx="773.600" cy="999" r="2.400" fill="#fff" stroke-width="1.400"/>
<path d="M738.500 1003Q738 990 756 989.500Q773 989 774 1000Q775.500 1016 768.500 1023Q760 1029.500 750 1026.500Q739 1021 738.500 1003Z" fill="#fff" stroke-width="2"/>
<path d="M737.800 998.500L739.200 994.500L737.800 992.800L741.200 991.500L744.500 988L748 989.200L751 987L753.500 989L758 988.500L762 987.500L764.500 986L767.500 987.500L768 991L770.500 996.500L764 995L757 994.300L750 996L743 998.500Z" fill="#000" stroke-width="1"/>
<rect x="740.800" y="1000.600" width="15" height="13.500" rx="2.500" fill="#fff" stroke-width="1.500" transform="rotate(-8 748 1007)"/>
<rect x="744" y="1002.600" width="10" height="10" rx="2" fill="#000" stroke="none" transform="rotate(-8 749 1007)"/>
<polygon points="754.600,997 761,996 762.600,1012.500 757.200,1013.600" fill="#fff" stroke-width="1.300"/>
<rect x="762.600" y="996.200" width="9" height="12.300" rx="2" fill="#fff" stroke-width="1.500" transform="rotate(-8 767 1002)"/>
<ellipse cx="766.800" cy="1002.300" rx="2.900" ry="4.300" fill="#000" stroke="none"/>
<path d="M740.600 1015.200Q757 1019.500 773 1012Q771.500 1025 757 1027.500Q745 1027 740.600 1015.200Z" fill="#fff" stroke-width="1.800"/>
<path d="M746.500 1018v6.500M751.500 1019v8M756.800 1019.200v8M762 1018.500v7.500M767 1016.500v6" stroke-width="1.300" fill="none"/>
<path d="M744 1029.800Q758 1034.500 772.800 1023.500" stroke-width="1.500" stroke-dasharray="1.400 1.800" fill="none"/>
</g>
<circle cx="752.400" cy="1009.300" r="1.700" fill="#fff"/><circle cx="749.600" cy="1005" r="1.100" fill="#fff"/><circle cx="767.300" cy="1000.300" r="1.400" fill="#fff"/><circle cx="765.900" cy="1005.300" r="1" fill="#fff"/>
<text transform="translate(791.200 1026.500) skewX(-15)" font-size="31" font-weight="900" fill="#222" fill-opacity=".7" textLength="96.500" lengthAdjust="spacingAndGlyphs">爱搞机</text>
<text transform="translate(790.200 1025.500) skewX(-15)" font-size="31" font-weight="900" fill="#fff" textLength="96.500" lengthAdjust="spacingAndGlyphs" stroke="#fff" stroke-width=".7">爱搞机</text>
<text x="893.1" y="1004.4" font-size="12.5" fill="#fff" text-anchor="middle" font-weight="bold">®</text>
</svg>
</body></html>
